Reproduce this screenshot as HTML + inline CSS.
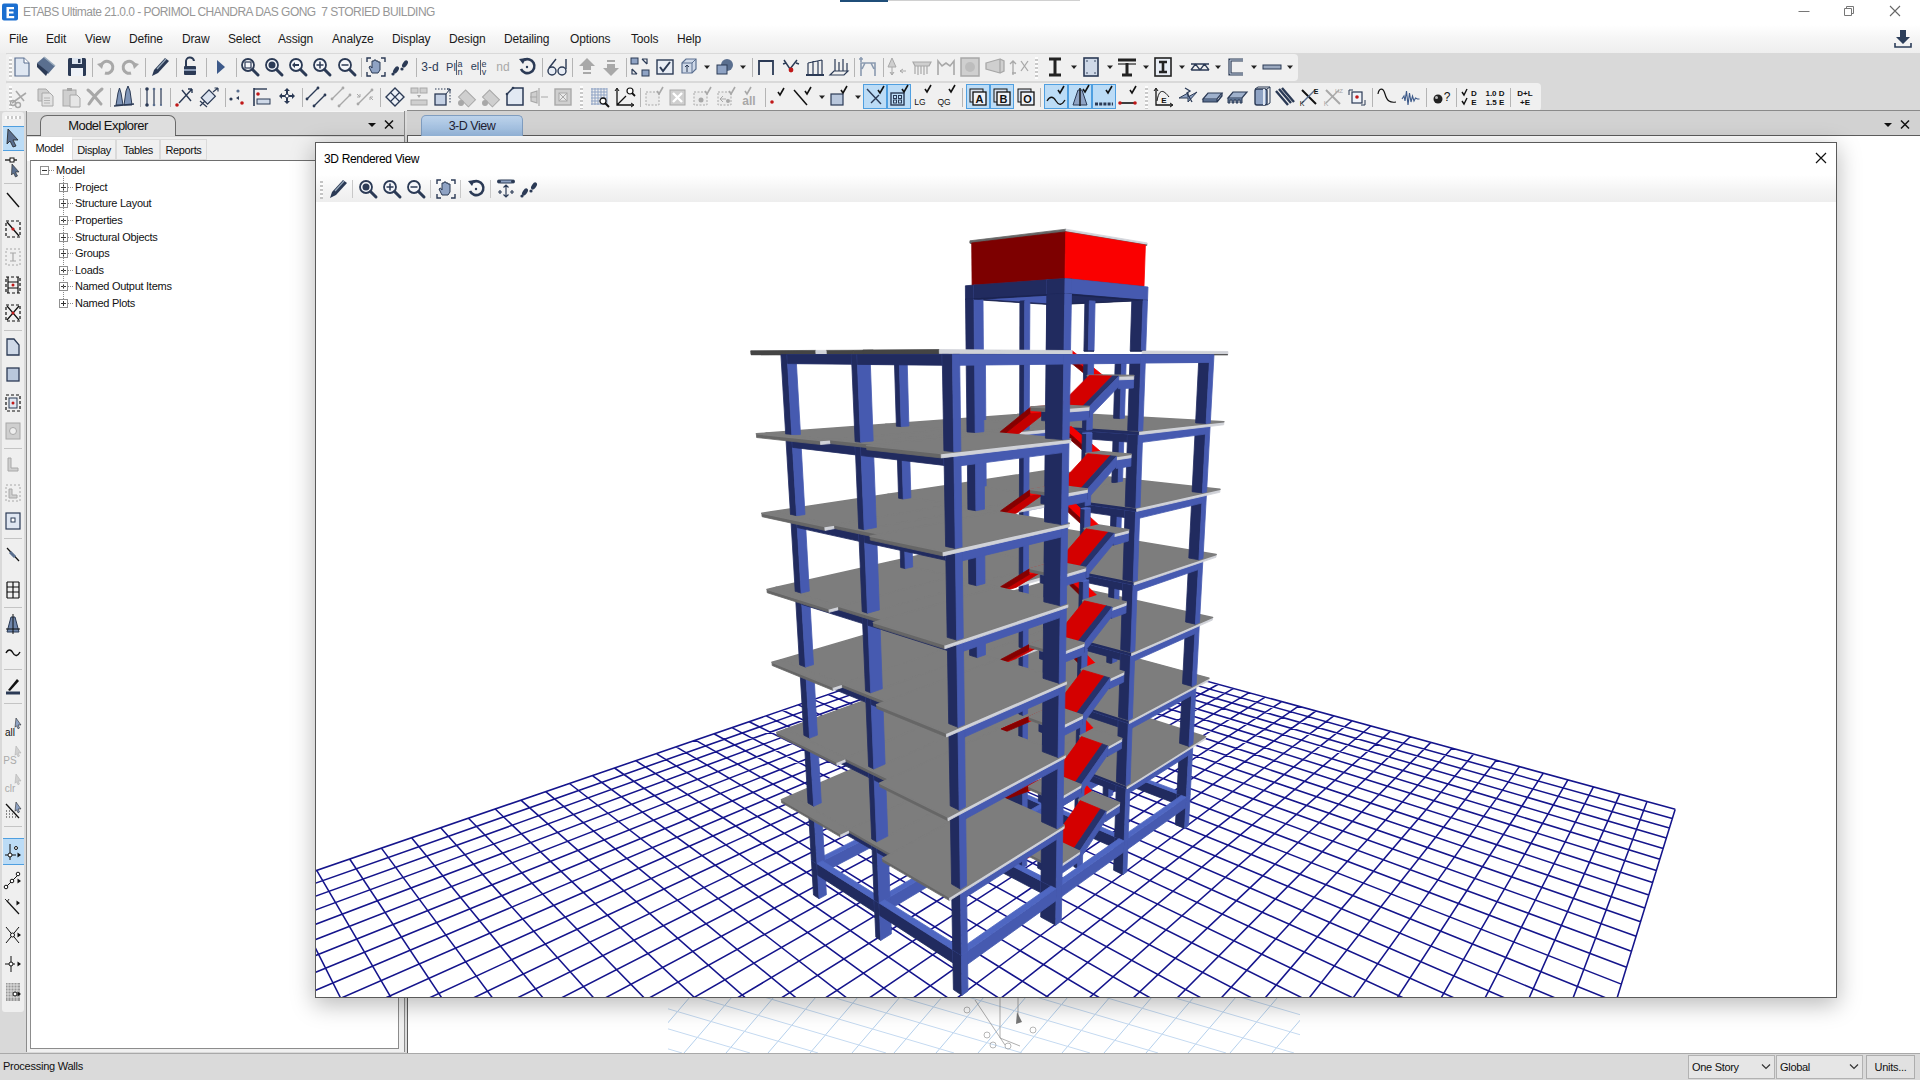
<!DOCTYPE html><html><head><meta charset="utf-8"><title>ETABS</title><style>
*{box-sizing:border-box}
html,body{margin:0;padding:0}
body{width:1920px;height:1080px;overflow:hidden;background:#d9d9d9;font-family:"Liberation Sans",sans-serif;position:relative}
.abs{position:absolute}
#title{left:0;top:0;width:1920px;height:25px;background:#fff}
#title .t{position:absolute;left:23px;top:5px;font-size:12px;color:#979797;white-space:pre;letter-spacing:-0.53px}
#menu{left:0;top:25px;width:1920px;height:28px;background:linear-gradient(#ffffff,#f6f6f6 45%,#eeeeee)}
#menu span{position:absolute;top:7px;font-size:12px;color:#1a1a1a;letter-spacing:-0.15px}
.tb{position:absolute;background:#f0f0f0;border-radius:4px}
.sep{position:absolute;width:1px;background:#b4b4b4}
.sel{position:absolute;background:#bcdcf6;border:1px solid #4f9fe0}
#left{left:2px;top:112px;width:22px;height:900px;background:#efefef;border-radius:3px}
#mehead{left:26px;top:111px;width:379px;height:25px;background:#d4d4d4;border-top:1px solid #f5f5f5}
#metab{left:40px;top:115px;width:136px;height:21px;background:#dedede;border:1px solid #6a6a6a;border-bottom:none;border-radius:7px 7px 0 0;font-size:13px;color:#111;text-align:center;line-height:20px;letter-spacing:-0.57px}
.hline{position:absolute;height:1px;background:#5c5c5c}
#mebody{left:27px;top:137px;width:377px;height:915px;background:#f0f0f0}
#tree{left:30px;top:160px;width:369px;height:889px;background:#fff;border:1px solid #8c8c8c;border-top:1px solid #6e6e6e}
.tab{position:absolute;top:139px;height:21px;font-size:11px;color:#111;text-align:center;line-height:21px;background:#f0f0f0;border:1px solid #dadada;letter-spacing:-0.35px}
.tab.on{background:#fff;top:137px;height:24px;border:1px solid #fff;line-height:21px}
.tr{position:absolute;font-size:11px;color:#111;white-space:pre;letter-spacing:-0.27px}
.pm{position:absolute;width:9px;height:9px;border:1px solid #919191;background:#fff}
.pm:before{content:"";position:absolute;left:1px;top:3px;width:5px;height:1px;background:#333}
.pm.plus:after{content:"";position:absolute;left:3px;top:1px;width:1px;height:5px;background:#333}
#main{left:407px;top:135px;width:1513px;height:918px;background:#fff;border-top:1px solid #5c5c5c;border-left:1px solid #5c5c5c}
#vtab{left:421px;top:115px;width:102px;height:21px;background:linear-gradient(#bcd2ea,#96b7dc);border:1px solid #7f9dc0;border-bottom:none;border-radius:5px 5px 0 0;font-size:12.5px;color:#223;text-align:center;line-height:20px;letter-spacing:-0.47px}
#win{left:315px;top:142px;width:1522px;height:856px;background:#fff;border:1px solid #5a5a5a;box-shadow:0 6px 22px 1px rgba(0,0,0,0.27)}
#wtitle{left:8px;top:9px;font-size:12px;color:#000;letter-spacing:-0.34px}
#wtool{left:0;top:32px;width:1520px;height:27px;background:linear-gradient(#ffffff,#f3f3f3 60%,#eeeeee)}
#status{left:0;top:1053px;width:1920px;height:27px;background:#dadada;border-top:1px solid #a9a9a9}
#status .t{position:absolute;left:3px;top:6px;font-size:11px;color:#111;letter-spacing:-0.25px}
.combo{position:absolute;top:1px;height:24px;background:#e6e6e6;border:1px solid #b2b2b2;font-size:11px;color:#111;line-height:22px;padding-left:3px;letter-spacing:-0.3px}
</style></head><body><div id="title" class="abs"><svg class="abs" style="left:2px;top:3px" width="17" height="18"><rect x="0" y="0.5" width="16" height="17" rx="2" fill="#1c6fd0"/><path d="M4.5 4h7.5v2.2h-5v2.2h4.5v2.2h-4.5v2.4h5.2v2.2h-7.7z" fill="#fff"/></svg><span class="t">ETABS Ultimate 21.0.0 - PORIMOL CHANDRA DAS GONG  7 STORIED BUILDING</span>
<div class="abs" style="left:840px;top:0;width:48px;height:2px;background:#1f4e79"></div><div class="abs" style="left:888px;top:0;width:192px;height:1px;background:#d0d0d0"></div>
<svg class="abs" style="left:1790px;top:0" width="130" height="25"><path d="M8.5 11.5h11" stroke="#777" stroke-width="1"/><path d="M54.500 8.5h7v7h-7zM56.5 8.500v-2h7v7h-2" stroke="#777" fill="none"/><path d="M100 6l10 10M110 6l-10 10" stroke="#666" stroke-width="1.1"/></svg></div>
<div id="menu" class="abs"><span style="left:9px">File</span><span style="left:46px">Edit</span><span style="left:85px">View</span><span style="left:129px">Define</span><span style="left:182px">Draw</span><span style="left:228px">Select</span><span style="left:278px">Assign</span><span style="left:332px">Analyze</span><span style="left:392px">Display</span><span style="left:449px">Design</span><span style="left:504px">Detailing</span><span style="left:570px">Options</span><span style="left:631px">Tools</span><span style="left:677px">Help</span><svg class="abs" style="left:1893px;top:4px" width="22" height="20"><path d="M7 1h6v7h4l-7 7l-7 -7h4z" fill="#2c3e5a"/><path d="M2 14v4h16v-4" stroke="#2c3e5a" stroke-width="1.6" fill="none"/></svg></div>
<div class="tb" style="left:4px;top:54px;width:1294px;height:27px"></div>
<div class="tb" style="left:4px;top:83px;width:1537px;height:28px"></div>
<div class="abs" style="left:0;top:53px;width:6px;height:58px;background:#ececec"></div>
<div class="sep" style="left:92px;top:58px;height:19px"></div>
<div class="sep" style="left:145px;top:58px;height:19px"></div>
<div class="sep" style="left:176px;top:58px;height:19px"></div>
<div class="sep" style="left:206px;top:58px;height:19px"></div>
<div class="sep" style="left:236px;top:58px;height:19px"></div>
<div class="sep" style="left:361px;top:58px;height:19px"></div>
<div class="sep" style="left:416px;top:58px;height:19px"></div>
<div class="sep" style="left:542px;top:58px;height:19px"></div>
<div class="sep" style="left:572px;top:58px;height:19px"></div>
<div class="sep" style="left:626px;top:58px;height:19px"></div>
<div class="sep" style="left:752px;top:58px;height:19px"></div>
<div class="sep" style="left:854px;top:58px;height:19px"></div>
<div class="sep" style="left:883px;top:58px;height:19px"></div>
<div class="sep" style="left:110px;top:88px;height:19px"></div>
<div class="sep" style="left:140px;top:88px;height:19px"></div>
<div class="sep" style="left:170px;top:88px;height:19px"></div>
<div class="sep" style="left:225px;top:88px;height:19px"></div>
<div class="sep" style="left:302px;top:88px;height:19px"></div>
<div class="sep" style="left:380px;top:88px;height:19px"></div>
<div class="sep" style="left:640px;top:88px;height:19px"></div>
<div class="sep" style="left:765px;top:88px;height:19px"></div>
<div class="sep" style="left:962px;top:88px;height:19px"></div>
<div class="sep" style="left:1040px;top:88px;height:19px"></div>
<div class="sep" style="left:1372px;top:88px;height:19px"></div>
<div class="sep" style="left:1426px;top:88px;height:19px"></div>
<div class="sep" style="left:1456px;top:88px;height:19px"></div>
<div class="sep" style="left:1510px;top:88px;height:19px"></div>
<div class="abs" style="left:9px;top:57px;width:3px;height:22px;background:repeating-linear-gradient(#fdfdfd 0 2px,#c9c9c9 2px 4px)"></div>
<div class="abs" style="left:9px;top:86px;width:3px;height:23px;background:repeating-linear-gradient(#fdfdfd 0 2px,#c9c9c9 2px 4px)"></div>
<div class="abs" style="left:1035px;top:57px;width:3px;height:22px;background:repeating-linear-gradient(#fdfdfd 0 2px,#c9c9c9 2px 4px)"></div>
<div class="abs" style="left:580px;top:86px;width:3px;height:23px;background:repeating-linear-gradient(#fdfdfd 0 2px,#c9c9c9 2px 4px)"></div>
<div class="abs" style="left:1145px;top:86px;width:3px;height:23px;background:repeating-linear-gradient(#fdfdfd 0 2px,#c9c9c9 2px 4px)"></div>
<div class="sel" style="left:863px;top:84px;width:24px;height:25px"></div>
<div class="sel" style="left:887px;top:84px;width:24px;height:25px"></div>
<div class="sel" style="left:966px;top:84px;width:24px;height:25px"></div>
<div class="sel" style="left:990px;top:84px;width:24px;height:25px"></div>
<div class="sel" style="left:1044px;top:84px;width:24px;height:25px"></div>
<div class="sel" style="left:1068px;top:84px;width:24px;height:25px"></div>
<div class="sel" style="left:1092px;top:84px;width:24px;height:25px"></div>
<svg class="abs" style="left:0;top:53px" width="1920" height="60"><g transform="translate(22,14)"><path d="M-7 -9h9l5 5v13h-14z" fill="#dfe7f2" stroke="#5a6f8f" stroke-width="1.2"/><path d="M2 -9v5h5" fill="#fff" stroke="#5a6f8f" stroke-width="1"/></g><g transform="translate(46,14)"><path d="M-9 -4l7 -6l11 9l-7 8z" fill="#5a6f8f"/><path d="M-9 -4l11 9l-2 4l-9 -9z" fill="#2b3a55"/><path d="M-2 -10l11 9" stroke="#9ab" stroke-width="1.5"/></g><g transform="translate(77,14)"><rect x="-9" y="-9" width="18" height="18" rx="1.5" fill="#2b3a55"/><rect x="-5" y="-9" width="10" height="6" fill="#dde5f0"/><rect x="-6" y="1" width="12" height="8" fill="#eef2f8"/><rect x="1" y="-8" width="2.5" height="4" fill="#2b3a55"/></g><g transform="translate(106,14)"><path d="M-5 -1a6 6 0 1 1 4 7" stroke="#a8a8a8" stroke-width="3" fill="none"/><path d="M-9 -3l7 -2l-2 7z" fill="#a8a8a8"/></g><g transform="translate(130,14)"><path d="M5 -1a6 6 0 1 0 -4 7" stroke="#a8a8a8" stroke-width="3" fill="none"/><path d="M9 -3l-7 -2l2 7z" fill="#a8a8a8"/></g><g transform="translate(160,14)"><path d="M-8 9l2 -6l11 -12l4 3l-11 12z" fill="#2b3a55"/><path d="M-3 2l9 -10" stroke="#9ab" stroke-width="1.2"/></g><g transform="translate(190,14)"><rect x="-6" y="-1" width="12" height="9" rx="1" fill="#2b3a55"/><path d="M-4 -1v-4a4 4 0 0 1 8 -1" stroke="#2b3a55" stroke-width="2" fill="none"/><rect x="-6" y="2" width="12" height="2" fill="#8a9ab5"/></g><g transform="translate(221,14)"><path d="M-4 -7l8 7l-8 7z" fill="#3d5a8a"/></g><g transform="translate(250,14)"><circle cx="-2" cy="-2" r="6" fill="#f4f6fa" stroke="#2b3a55" stroke-width="1.8"/><path d="M2.5 2.5L8 8" stroke="#2b3a55" stroke-width="3" stroke-linecap="round"/><rect x="-5" y="-5" width="6" height="6" fill="none" stroke="#2b3a55" stroke-width="1.2"/></g><g transform="translate(274,14)"><circle cx="-2" cy="-2" r="6" fill="#f4f6fa" stroke="#2b3a55" stroke-width="1.8"/><path d="M2.5 2.5L8 8" stroke="#2b3a55" stroke-width="3" stroke-linecap="round"/><circle cx="-2" cy="-2" r="3.5" fill="#2b3a55"/></g><g transform="translate(298,14)"><circle cx="-2" cy="-2" r="6" fill="#f4f6fa" stroke="#2b3a55" stroke-width="1.8"/><path d="M2.5 2.5L8 8" stroke="#2b3a55" stroke-width="3" stroke-linecap="round"/><path d="M-6 -2l3 -3v2h4v2h-4v2z" fill="#2b3a55"/></g><g transform="translate(322,14)"><circle cx="-2" cy="-2" r="6" fill="#f4f6fa" stroke="#2b3a55" stroke-width="1.8"/><path d="M2.5 2.5L8 8" stroke="#2b3a55" stroke-width="3" stroke-linecap="round"/><path d="M-5.5 -2h7M-2 -5.5v7" stroke="#2b3a55" stroke-width="1.5"/></g><g transform="translate(347,14)"><circle cx="-2" cy="-2" r="6" fill="#f4f6fa" stroke="#2b3a55" stroke-width="1.8"/><path d="M2.5 2.5L8 8" stroke="#2b3a55" stroke-width="3" stroke-linecap="round"/><path d="M-5.5 -2h7" stroke="#2b3a55" stroke-width="1.5"/></g><g transform="translate(376,14)"><path d="M-9 -5v-4h4M5 -9h4v4M9 5v4h-4M-5 9h-4v-4" stroke="#2b3a55" stroke-width="1.4" fill="none"/><path d="M-4 6l-3 -6l1.5 -1l1.5 2v-7h2v-1h2v1h2v1h2v8l-2 3z" fill="#8fa3c4" stroke="#2b3a55" stroke-width="1"/></g><g transform="translate(401,14)"><ellipse cx="-5" cy="3" rx="2.2" ry="4" transform="rotate(35 -5 3)" fill="#2b3a55"/><ellipse cx="4" cy="-3" rx="2.2" ry="4" transform="rotate(35 4 -3)" fill="#2b3a55"/><circle cx="-8" cy="7" r="1.6" fill="#2b3a55"/><circle cx="1" cy="2" r="1.6" fill="#2b3a55"/></g><g transform="translate(430,14)"><text x="0" y="4" font-size="12" fill="#2b3a55" font-weight="normal" text-anchor="middle" font-family="Liberation Sans, sans-serif">3-d</text></g><g transform="translate(455,14)"><text x="-4" y="4" font-size="11" fill="#2b3a55" font-weight="normal" text-anchor="middle" font-family="Liberation Sans, sans-serif">Pl</text><text x="5" y="0" font-size="9" fill="#2b3a55" font-weight="normal" text-anchor="middle" font-family="Liberation Sans, sans-serif">a</text><text x="5" y="8" font-size="9" fill="#2b3a55" font-weight="normal" text-anchor="middle" font-family="Liberation Sans, sans-serif">n</text><path d="M1.5 -7v15" stroke="#2b3a55" stroke-width="0.8"/></g><g transform="translate(479,14)"><text x="-4" y="3" font-size="11" fill="#2b3a55" font-weight="normal" text-anchor="middle" font-family="Liberation Sans, sans-serif">el</text><text x="5" y="0" font-size="9" fill="#2b3a55" font-weight="normal" text-anchor="middle" font-family="Liberation Sans, sans-serif">e</text><text x="5" y="8" font-size="9" fill="#2b3a55" font-weight="normal" text-anchor="middle" font-family="Liberation Sans, sans-serif">v</text><path d="M1.5 -7v15" stroke="#2b3a55" stroke-width="0.8"/></g><g transform="translate(503,14)"><text x="0" y="4" font-size="12" fill="#a8a8a8" font-weight="normal" text-anchor="middle" font-family="Liberation Sans, sans-serif">nd</text></g><g transform="translate(527,14)"><path d="M-3 -7a7 7 0 1 1 -3 9" stroke="#2b3a55" stroke-width="2.6" fill="none"/><path d="M-8 -8l7 -1l-3 6z" fill="#2b3a55"/><circle cx="0" cy="0" r="1.2" fill="#2b3a55"/></g><g transform="translate(557,14)"><circle cx="-5" cy="4" r="4" fill="#e8edf5" stroke="#2b3a55" stroke-width="1.4"/><circle cx="5" cy="4" r="4" fill="#e8edf5" stroke="#2b3a55" stroke-width="1.4"/><path d="M-8 1l7 -9M9 2v-10" stroke="#2b3a55" stroke-width="1.4" fill="none"/></g><g transform="translate(587,14)"><path d="M0 -9l8 8h-4v4h-8v-4h-4z" fill="#a8a8a8"/><rect x="-4" y="5" width="8" height="2" fill="#a8a8a8"/></g><g transform="translate(611,14)"><path d="M0 9l8 -8h-4v-4h-8v4h-4z" fill="#a8a8a8"/><rect x="-4" y="-7" width="8" height="2" fill="#a8a8a8"/></g><g transform="translate(640,14)"><rect x="-9" y="-9" width="7" height="6" fill="#8fa3c4" stroke="#2b3a55"/><rect x="2" y="3" width="7" height="6" fill="#8fa3c4" stroke="#2b3a55"/><path d="M2 -8l5 5M7 -3v-5h-5M-8 2l5 5M-3 7h-5v-5" stroke="#2b3a55" stroke-width="1.2" fill="none"/></g><g transform="translate(665,14)"><rect x="-8" y="-7" width="16" height="14" fill="#e8edf5" stroke="#2b3a55" stroke-width="1.4"/><path d="M-5 0l3 4l7 -9" stroke="#2b3a55" stroke-width="2" fill="none"/></g><g transform="translate(689,14)"><path d="M-7 -4l4 -4h10v10l-4 4h-10z" fill="#cfd9e8" stroke="#5a6f8f" stroke-width="1.2"/><path d="M-7 -4h10v10M3 -4l4 -4" stroke="#5a6f8f" fill="none"/><path d="M-2 5v-6M-4 0l2 -2l2 2" stroke="#2b3a55" fill="none"/></g><g transform="translate(707,14)"><path d="M-3 -1.5h6l-3 3.5z" fill="#222"/></g><g transform="translate(725,14)"><circle cx="2" cy="-2" r="6" fill="#5a6f8f"/><rect x="-8" y="-2" width="10" height="9" fill="#8fa3c4" stroke="#2b3a55"/></g><g transform="translate(743,14)"><path d="M-3 -1.5h6l-3 3.5z" fill="#222"/></g><g transform="translate(766,14)"><path d="M-7 8v-14h14v14" stroke="#2b3a55" stroke-width="1.8" fill="none"/></g><g transform="translate(791,14)"><path d="M-7 -7l6 9l7 -9M-8 -3l3 -1M8 -3l-3 -1" stroke="#2b3a55" stroke-width="1.5" fill="none"/><circle cx="0" cy="3" r="2.4" fill="#c01818"/></g><g transform="translate(815,14)"><path d="M-9 8h18M-7 8v-12M-2 8v-14M3 8v-14M7 8v-15M-7 -4l14 -3" stroke="#2b3a55" stroke-width="1.2" fill="none"/><path d="M-9 8h18" stroke="#2b3a55" stroke-width="2"/></g><g transform="translate(839,14)"><path d="M-9 8l4 -4h14l-4 4zM-4 4v-12M0 4v-9M4 4v-12M8 4v-8" stroke="#2b3a55" stroke-width="1.2" fill="none"/></g><g transform="translate(868,14)"><path d="M-7 9v-13h14v13M-9 -8h4M-7 -10v5M-3 -4l-3 6M3 -4l3 6" stroke="#8a9ab0" stroke-width="1.6" fill="none"/></g><g transform="translate(897,14)"><path d="M-5 -9l4 9h-8zM-5 0v8M-7 5l2 3l2 -3M3 4h6M3 4l3 -2M3 4l3 2" stroke="#a8a8a8" fill="#cfcfcf" stroke-width="1"/></g><g transform="translate(922,14)"><path d="M-9 -5h18l-2 4h-14zM-7 -1v8M-4 -1v9M-1 -1v8M2 -1v9M5 -1v8" stroke="#a8a8a8" fill="#cfcfcf" stroke-width="1.2"/></g><g transform="translate(946,14)"><path d="M-8 8v-14l4 5l4 -3l4 3l4 -5v14" stroke="#a8a8a8" fill="none" stroke-width="1.6"/></g><g transform="translate(970,14)"><rect x="-9" y="-9" width="18" height="18" fill="#cfcfcf" stroke="#a8a8a8" stroke-width="1.5"/><circle cx="0" cy="0" r="5" fill="#bdbdbd"/></g><g transform="translate(995,14)"><path d="M-9 -4l14 -4v14l-14 -4zM5 -8l4 2v10l-4 2" stroke="#a8a8a8" fill="#cfcfcf" stroke-width="1.3"/></g><g transform="translate(1019,14)"><path d="M-6 8v-14M-9 -3l3 -3l3 3M-7 6h4M2 -6l7 10M9 -6l-7 10" stroke="#a8a8a8" fill="none" stroke-width="1.3"/></g><g transform="translate(1055,14)"><path d="M-6 -8h12M-6 8h12M0 -8v16" stroke="#222" stroke-width="3" fill="none"/></g><g transform="translate(1074,14)"><path d="M-3 -1.5h6l-3 3.5z" fill="#222"/></g><g transform="translate(1091,14)"><rect x="-7" y="-9" width="14" height="18" fill="#cfd9e8" stroke="#2b3a55" stroke-width="1.6"/><circle cx="-4" cy="-6" r="0.8" fill="#2b3a55"/><circle cx="4" cy="-6" r="0.8" fill="#2b3a55"/><circle cx="-4" cy="6" r="0.8" fill="#2b3a55"/><circle cx="4" cy="6" r="0.8" fill="#2b3a55"/></g><g transform="translate(1110,14)"><path d="M-3 -1.5h6l-3 3.5z" fill="#222"/></g><g transform="translate(1127,14)"><path d="M-9 -7h18M0 -4v11M-5 8h10" stroke="#222" stroke-width="3" fill="none"/><path d="M-9 -3h18" stroke="#222" stroke-width="1.2"/></g><g transform="translate(1146,14)"><path d="M-3 -1.5h6l-3 3.5z" fill="#222"/></g><g transform="translate(1163,14)"><rect x="-8" y="-9" width="16" height="18" fill="#e8edf5" stroke="#222" stroke-width="1.6"/><path d="M-4 -5h8M-4 5h8M0 -5v10" stroke="#222" stroke-width="2.6" fill="none"/></g><g transform="translate(1182,14)"><path d="M-3 -1.5h6l-3 3.5z" fill="#222"/></g><g transform="translate(1200,14)"><path d="M-9 -3h18M-9 3h18M-9 3l4.5 -6l4.5 6l4.5 -6l4.5 6" stroke="#2b3a55" stroke-width="1.3" fill="none"/></g><g transform="translate(1218,14)"><path d="M-3 -1.5h6l-3 3.5z" fill="#222"/></g><g transform="translate(1236,14)"><path d="M7 -7h-13v14h13" stroke="#2b3a55" stroke-width="3.2" fill="none"/><path d="M7 -7h-13v14h13" stroke="#cfd9e8" stroke-width="1" fill="none"/></g><g transform="translate(1254,14)"><path d="M-3 -1.5h6l-3 3.5z" fill="#222"/></g><g transform="translate(1272,14)"><rect x="-9" y="-2" width="18" height="4" fill="#9aa8be" stroke="#2b3a55"/></g><g transform="translate(1290,14)"><path d="M-3 -1.5h6l-3 3.5z" fill="#222"/></g><g transform="translate(20,44)"><path d="M-8 6l14 -10M-4 -6l8 10" stroke="#a8a8a8" stroke-width="1.6" fill="none"/><circle cx="-7" cy="6" r="2.5" fill="none" stroke="#a8a8a8" stroke-width="1.4"/><circle cx="-2" cy="8" r="2.5" fill="none" stroke="#a8a8a8" stroke-width="1.4"/></g><g transform="translate(46,44)"><path d="M-8 -8h8l3 3v9h-11z" fill="#cfcfcf" stroke="#a8a8a8"/><path d="M-4 -4h8l3 3v10h-11z" fill="#e2e2e2" stroke="#a8a8a8"/><path d="M-2 1h6M-2 3.5h6M-2 6h6" stroke="#a8a8a8" stroke-width="0.8"/></g><g transform="translate(71,44)"><rect x="-8" y="-7" width="13" height="16" fill="#cfcfcf" stroke="#a8a8a8"/><rect x="-4" y="-9" width="5" height="3" fill="#a8a8a8"/><path d="M-1 -2h7l3 3v9h-10z" fill="#e6e6e6" stroke="#a8a8a8"/></g><g transform="translate(95,44)"><path d="M-7 -7c4 3 8 8 13 14M7 -8c-5 4 -9 9 -13 15" stroke="#a8a8a8" stroke-width="3" fill="none" stroke-linecap="round"/></g><g transform="translate(124,44)"><path d="M-8 8l2 -12l1.5 -5l1.5 5l2 12zM0 8l2 -14l2 -5l2 5l2 14z" fill="#7f95b8" stroke="#2b3a55" stroke-width="1"/><path d="M-10 9l20 -2" stroke="#2b3a55" stroke-width="1.5"/></g><g transform="translate(154,44)"><path d="M-7 -8v16M0 -8v16M7 -8v16" stroke="#2b3a55" stroke-width="1.2"/><circle cx="-7" cy="-8" r="1.8" fill="#2b3a55"/><circle cx="-7" cy="8" r="1.8" fill="#2b3a55"/><circle cx="0" cy="-8" r="1.3" fill="#5a6f8f"/><circle cx="0" cy="8" r="1.3" fill="#5a6f8f"/><circle cx="7" cy="-8" r="1.1" fill="#5a6f8f"/><circle cx="7" cy="8" r="1.1" fill="#5a6f8f"/></g><g transform="translate(185,44)"><path d="M-6 6l13 -14M7 -8h-4M7 -8v4M-3 -7l9 11" stroke="#2b3a55" stroke-width="1.4" fill="none"/><circle cx="-8" cy="8" r="1.8" fill="#c01818"/></g><g transform="translate(209,44)"><rect x="-5" y="-5" width="9" height="11" transform="rotate(45)" fill="#dbe3ef" stroke="#2b3a55" stroke-width="1.2"/><path d="M4 -5l5 -4M9 -9h-3.5M9 -9v3.5M-9 4l7 6M-9 9l5 -5" stroke="#2b3a55" stroke-width="1.2" fill="none"/></g><g transform="translate(238,44)"><circle cx="-7" cy="2" r="1.6" fill="#2b3a55"/><circle cx="0" cy="-6" r="1.6" fill="#5a6f8f"/><circle cx="4" cy="6" r="1.8" fill="#c01818"/><path d="M-2 1l3 -2v4z" fill="#2b3a55"/></g><g transform="translate(262,44)"><path d="M-8 -9v18" stroke="#2b3a55" stroke-width="1.6"/><path d="M-8 -8h13" stroke="#2b3a55" stroke-width="1.4"/><rect x="-5" y="2" width="13" height="5" fill="#cfd9e8" stroke="#2b3a55"/><circle cx="-4" cy="-3" r="1.8" fill="#c01818"/></g><g transform="translate(287,44)"><path d="M0 -9l3 3h-2v4h4v-2l3 3l-3 3v-2h-4v4h2l-3 3l-3 -3h2v-4h-4v2l-3 -3l3 -3v2h4v-4h-2z" fill="#2b3a55"/><rect x="-1.5" y="-2.5" width="3" height="3" fill="#fff" stroke="#2b3a55" stroke-width="0.6"/></g><g transform="translate(316,44)"><path d="M-9 2l11 -11M-2 9l11 -11" stroke="#2b3a55" stroke-width="1.4"/><circle cx="-9" cy="2" r="1.4" fill="#2b3a55"/><circle cx="2" cy="-9" r="1.4" fill="#2b3a55"/><circle cx="-2" cy="9" r="1.4" fill="#2b3a55"/><circle cx="9" cy="-2" r="1.4" fill="#2b3a55"/></g><g transform="translate(341,44)"><path d="M-9 2l11 -11M-2 9l11 -11" stroke="#a8a8a8" stroke-width="1.4"/><circle cx="-9" cy="2" r="1.4" fill="#a8a8a8"/><circle cx="2" cy="-9" r="1.4" fill="#a8a8a8"/><circle cx="-2" cy="9" r="1.4" fill="#a8a8a8"/><circle cx="9" cy="-2" r="1.4" fill="#a8a8a8"/></g><g transform="translate(365,44)"><path d="M-7 7l14 -14" stroke="#a8a8a8" stroke-width="1.4"/><circle cx="-7" cy="7" r="1.4" fill="#a8a8a8"/><circle cx="7" cy="-7" r="1.4" fill="#a8a8a8"/><path d="M-8 -3l3 3M-5 0v-3M-5 0h-3M8 3l-3 -3M5 0v3M5 0h3" stroke="#a8a8a8" fill="none"/></g><g transform="translate(395,44)"><path d="M0 -9l9 9l-9 9l-9 -9z" fill="#eef2f8" stroke="#2b3a55" stroke-width="1.4"/><path d="M-4.5 -4.5l9 9M4.5 -4.5l-9 9" stroke="#2b3a55" stroke-width="1.2"/></g><g transform="translate(419,44)"><rect x="-8" y="-9" width="7" height="5" fill="#cfcfcf" stroke="#a8a8a8"/><rect x="1" y="-9" width="7" height="5" fill="#cfcfcf" stroke="#a8a8a8"/><rect x="-8" y="3" width="16" height="5" fill="#cfcfcf" stroke="#a8a8a8"/><path d="M-2 -2h4l-2 3z" fill="#a8a8a8"/></g><g transform="translate(443,44)"><rect x="-8" y="-3" width="11" height="11" fill="#c5d1e4" stroke="#2b3a55" stroke-width="1.3"/><path d="M-8 -8h15v15" stroke="#2b3a55" stroke-dasharray="1.5 1.5" fill="none"/><path d="M3 -3l4 -5M7 -8h-3M7 -8v3" stroke="#2b3a55" fill="none"/></g><g transform="translate(467,44)"><rect x="-6" y="-6" width="10" height="14" transform="rotate(-45)" fill="#cfcfcf" stroke="#a8a8a8"/><circle cx="-6" cy="6" r="3" fill="#a8a8a8"/></g><g transform="translate(491,44)"><rect x="-6" y="-6" width="10" height="14" transform="rotate(-45)" fill="#cfcfcf" stroke="#a8a8a8"/><circle cx="-6" cy="6" r="3" fill="#a8a8a8"/></g><g transform="translate(515,44)"><path d="M-8 8v-11l6 -6h10v17z" fill="#e2e9f3" stroke="#2b3a55" stroke-width="1.5"/><circle cx="-8" cy="-3" r="1.3" fill="#2b3a55"/><circle cx="-2" cy="-9" r="1.3" fill="#2b3a55"/></g><g transform="translate(539,44)"><path d="M0 -9v18M-2 -6l-6 2v8l6 2zM2 0h7M-9 0h7" stroke="#a8a8a8" fill="#cfcfcf" stroke-width="1.2"/></g><g transform="translate(563,44)"><rect x="-8" y="-8" width="16" height="16" fill="#cfcfcf" stroke="#a8a8a8" stroke-width="1.4"/><rect x="-4" y="-4" width="8" height="8" fill="#e8e8e8" stroke="#a8a8a8"/><path d="M-4 -4l8 8M4 -4l-8 8" stroke="#a8a8a8"/></g><g transform="translate(600,44)"><path d="M-9 -8h16M-9 -5h16M-9 -2h16M-9 1h16M-9 4h16M-9 7h16M-8 -9v17M-5 -9v17M-2 -9v17M1 -9v17M4 -9v17M7 -9v17" stroke="#8fa3c4" stroke-width="1"/><circle cx="3" cy="4" r="3" fill="#fff" stroke="#111" stroke-width="1.3"/><path d="M5 6l4 4" stroke="#111" stroke-width="2"/></g><g transform="translate(625,44)"><path d="M-8 -8v16h16M-8 8l9 -9" stroke="#111" stroke-width="1.3" fill="none"/><path d="M-10 -6l2 -3l2 3M6 6l3 2l-3 2" stroke="#111" fill="none"/><circle cx="5" cy="-6" r="3" fill="#fff" stroke="#111" stroke-width="1.2"/><path d="M7 -4l3 3" stroke="#111" stroke-width="1.8"/></g><g transform="translate(654,44)"><rect x="-8" y="-5" width="13" height="13" fill="#ececec" stroke="#a8a8a8" stroke-dasharray="2 1.5"/><path d="M3 -6l2 3l4 -7" stroke="#a8a8a8" stroke-width="1.6" fill="none"/></g><g transform="translate(678,44)"><rect x="-8" y="-7" width="15" height="15" fill="#cfcfcf" stroke="#a8a8a8"/><path d="M-5 -4l9 9M4 -4l-9 9" stroke="#fff" stroke-width="2.4"/></g><g transform="translate(702,44)"><rect x="-8" y="-5" width="13" height="13" fill="#ececec" stroke="#a8a8a8" stroke-dasharray="2 1.5"/><circle cx="-1" cy="3" r="2.5" fill="#a8a8a8"/><path d="M3 -6l2 3l4 -7" stroke="#a8a8a8" stroke-width="1.6" fill="none"/></g><g transform="translate(726,44)"><rect x="-8" y="-5" width="13" height="13" fill="#ececec" stroke="#a8a8a8" stroke-dasharray="2 1.5"/><path d="M-6 2h6M-3 -1l-3 3l3 3" stroke="#a8a8a8" fill="none"/><circle cx="2" cy="4" r="2" fill="#a8a8a8"/><path d="M3 -6l2 3l4 -7" stroke="#a8a8a8" stroke-width="1.6" fill="none"/></g><g transform="translate(749,44)"><text x="0" y="8" font-size="12" fill="#a8a8a8" font-weight="bold" text-anchor="middle" font-family="Liberation Sans, sans-serif">all</text><path d="M-4 -6l2 3l4 -7" stroke="#a8a8a8" stroke-width="1.6" fill="none"/></g><g transform="translate(778,44)"><circle cx="-6" cy="5" r="1.8" fill="#c01818"/><path d="M0 -5l2 3l4 -7" stroke="#111" stroke-width="1.6" fill="none"/></g><g transform="translate(803,44)"><path d="M-9 -7l13 15" stroke="#111" stroke-width="1.5"/><path d="M2 -6l2 3l4 -7" stroke="#111" stroke-width="1.6" fill="none"/></g><g transform="translate(822,44)"><path d="M-3 -1.5h6l-3 3.5z" fill="#222"/></g><g transform="translate(839,44)"><rect x="-8" y="-3" width="12" height="11" fill="#b9c7dc" stroke="#2b3a55" stroke-width="1.2"/><path d="M2 -7l2 3l4 -7" stroke="#111" stroke-width="1.6" fill="none"/></g><g transform="translate(858,44)"><path d="M-3 -1.5h6l-3 3.5z" fill="#222"/></g><g transform="translate(875,44)"><path d="M-8 -8l14 15M-4 6l8 -8" stroke="#2b3a55" stroke-width="1.4"/><path d="M3 -7l2 3l4 -7" stroke="#111" stroke-width="1.6" fill="none"/></g><g transform="translate(899,44)"><rect x="-8" y="-4" width="13" height="12" fill="none" stroke="#2b3a55" stroke-width="1.4"/><rect x="-5.5" y="-1.5" width="3" height="3" fill="none" stroke="#2b3a55"/><rect x="-0.5" y="-1.5" width="3" height="3" fill="none" stroke="#2b3a55"/><rect x="-5.5" y="3" width="3" height="3" fill="none" stroke="#2b3a55"/><rect x="-0.5" y="3" width="3" height="3" fill="none" stroke="#2b3a55"/><path d="M3 -8l2 3l4 -7" stroke="#111" stroke-width="1.6" fill="none"/></g><g transform="translate(922,44)"><text x="-2" y="8" font-size="8.5" fill="#111" font-weight="normal" text-anchor="middle" font-family="Liberation Sans, sans-serif">LG</text><path d="M3 -8l2 3l4 -7" stroke="#111" stroke-width="1.6" fill="none"/></g><g transform="translate(946,44)"><text x="-2" y="8" font-size="8.5" fill="#111" font-weight="normal" text-anchor="middle" font-family="Liberation Sans, sans-serif">QG</text><path d="M3 -8l2 3l4 -7" stroke="#111" stroke-width="1.6" fill="none"/></g><g transform="translate(978,44)"><rect x="-8" y="-8" width="13" height="13" fill="#d9e2ef" stroke="#111"/><rect x="-5" y="-5" width="13" height="13" fill="#eef2f8" stroke="#111" stroke-width="1.3"/><text x="1.5" y="6" font-size="11" fill="#111" font-weight="bold" text-anchor="middle" font-family="Liberation Sans, sans-serif">A</text></g><g transform="translate(1002,44)"><rect x="-8" y="-8" width="13" height="13" fill="#d9e2ef" stroke="#111"/><rect x="-5" y="-5" width="13" height="13" fill="#eef2f8" stroke="#111" stroke-width="1.3"/><text x="1.5" y="6" font-size="11" fill="#111" font-weight="bold" text-anchor="middle" font-family="Liberation Sans, sans-serif">B</text></g><g transform="translate(1026,44)"><rect x="-8" y="-8" width="13" height="13" fill="#d9e2ef" stroke="#111"/><rect x="-5" y="-5" width="13" height="13" fill="#eef2f8" stroke="#111" stroke-width="1.3"/><text x="1.5" y="6" font-size="11" fill="#111" font-weight="bold" text-anchor="middle" font-family="Liberation Sans, sans-serif">O</text></g><g transform="translate(1056,44)"><path d="M-9 4c3 -5 6 -5 9 0s6 4 9 -1" stroke="#111" stroke-width="1.3" fill="none"/><path d="M2 -7l2 3l4 -7" stroke="#111" stroke-width="1.6" fill="none"/></g><g transform="translate(1080,44)"><path d="M-7 8l5 -15h4l5 15z" fill="#8fa3c4" stroke="#2b3a55"/><path d="M0 -9v18" stroke="#111" stroke-width="1.4"/><path d="M3 -8l2 3l4 -7" stroke="#111" stroke-width="1.6" fill="none"/></g><g transform="translate(1104,44)"><path d="M-9 7h18" stroke="#2b3a55" stroke-width="3" stroke-dasharray="3 1.2"/><path d="M2 -7l2 3l4 -7" stroke="#111" stroke-width="1.6" fill="none"/></g><g transform="translate(1128,44)"><path d="M-8 6h15" stroke="#111" stroke-width="1.6"/><circle cx="-8" cy="6" r="1.8" fill="#c01818"/><circle cx="7" cy="6" r="1.8" fill="#c01818"/><path d="M2 -7l2 3l4 -7" stroke="#111" stroke-width="1.6" fill="none"/></g><g transform="translate(1164,44)"><path d="M-8 -8v16h16" stroke="#111" stroke-width="1.3" fill="none"/><path d="M-10 -6l2 -3l2 3M6 6l3 2l-3 2" stroke="#111" fill="none"/><path d="M-7 4c2 -12 6 -12 12 -4" stroke="#111" fill="none"/><text x="0" y="6" font-size="8" fill="#111" font-weight="bold" text-anchor="middle" font-family="Liberation Sans, sans-serif">E</text></g><g transform="translate(1188,44)"><path d="M-9 1l9 -5v4l9 -5l-9 10v-4z" fill="#8fa3c4" stroke="#2b3a55"/><path d="M-3 -9l5 3l-3 2l5 9" stroke="#2b3a55" stroke-width="1.3" fill="none"/></g><g transform="translate(1212,44)"><path d="M-9 2l5 -6h14l-5 6z" fill="#9fb1cc" stroke="#2b3a55" stroke-width="1.2"/><path d="M-9 2v3h14v-3M5 5l5 -6v-3" stroke="#2b3a55" stroke-width="1.2" fill="#5a6f8f"/></g><g transform="translate(1237,44)"><path d="M-9 1l5 -6h14l-5 6z" fill="#9fb1cc" stroke="#2b3a55" stroke-width="1.2"/><path d="M-9 1v5h2v-3h2v3h2v-3h2v3h2v-3h2v3h2v-5" fill="#5a6f8f" stroke="#2b3a55"/></g><g transform="translate(1261,44)"><rect x="-6" y="-8" width="12" height="16" rx="2" fill="#8fa3c4" stroke="#2b3a55" stroke-width="1.4"/><path d="M3 -8v16" stroke="#dfe7f2" stroke-width="2"/><path d="M-6 -8l3 -2h12l-3 2M6 8l3 -2v-16" stroke="#2b3a55" fill="none"/></g><g transform="translate(1285,44)"><path d="M-9 -6l12 14M-6 -8l12 14M-3 -9l12 14" stroke="#2b3a55" stroke-width="2.4"/></g><g transform="translate(1309,44)"><path d="M-7 -7l14 14" stroke="#111" stroke-width="2"/><path d="M6 -7l-13 13" stroke="#5a6f8f" stroke-width="1.4"/><text x="7" y="-3" font-size="7" fill="#111" font-weight="bold" text-anchor="middle" font-family="Liberation Sans, sans-serif">E</text><text x="-7" y="9" font-size="7" fill="#111" font-weight="normal" text-anchor="middle" font-family="Liberation Sans, sans-serif">K</text></g><g transform="translate(1333,44)"><path d="M-7 -7l14 14" stroke="#a8a8a8" stroke-width="2"/><path d="M6 -7l-13 13" stroke="#a8a8a8" stroke-width="1.4"/><text x="6" y="-4" font-size="6" fill="#a8a8a8" font-weight="normal" text-anchor="middle" font-family="Liberation Sans, sans-serif">HZ</text><text x="-7" y="9" font-size="7" fill="#a8a8a8" font-weight="normal" text-anchor="middle" font-family="Liberation Sans, sans-serif">K</text></g><g transform="translate(1357,44)"><rect x="-5" y="-5" width="10" height="11" fill="#eef2f8" stroke="#2b3a55" stroke-width="1.2"/><circle cx="0" cy="0" r="1.8" fill="#c01818"/><path d="M-8 -2v-5h4M8 3v5h-4" stroke="#2b3a55" fill="none"/></g><g transform="translate(1387,44)"><path d="M-9 -3c1 -6 5 -7 7 0s5 9 11 8" stroke="#111" stroke-width="1.2" fill="none"/></g><g transform="translate(1411,44)"><path d="M-9 2l2 -3l1 5l1.5 -10l1.5 14l1.5 -12l1.5 9l1.5 -6l1.5 5l1.5 -3l2 1h2" stroke="#3d5a8a" stroke-width="1.1" fill="none"/></g><g transform="translate(1441,44)"><circle cx="-3" cy="2" r="4.5" fill="#222"/><circle cx="-4.5" cy="0.5" r="1.5" fill="#bbb"/><text x="6" y="4" font-size="12" fill="#111" font-weight="normal" text-anchor="middle" font-family="Liberation Sans, sans-serif">?</text></g><g transform="translate(1470,44)"><text x="4" y="-1" font-size="8" fill="#111" font-weight="bold" text-anchor="middle" font-family="Liberation Sans, sans-serif">D</text><text x="4" y="8" font-size="8" fill="#111" font-weight="bold" text-anchor="middle" font-family="Liberation Sans, sans-serif">E</text><path d="M-8 -5l2 3l3 -6M-8 4l2 3l3 -6" stroke="#111" stroke-width="1.4" fill="none"/></g><g transform="translate(1495,44)"><text x="0" y="-1" font-size="8" fill="#111" font-weight="bold" text-anchor="middle" font-family="Liberation Sans, sans-serif">1.0 D</text><text x="0" y="8" font-size="8" fill="#111" font-weight="bold" text-anchor="middle" font-family="Liberation Sans, sans-serif">1.5 E</text></g><g transform="translate(1525,44)"><text x="0" y="-1" font-size="8" fill="#111" font-weight="bold" text-anchor="middle" font-family="Liberation Sans, sans-serif">D+L</text><text x="0" y="8" font-size="8" fill="#111" font-weight="bold" text-anchor="middle" font-family="Liberation Sans, sans-serif">+E</text></g></svg>
<div id="left" class="abs"></div>
<div class="abs" style="left:5px;top:116px;width:16px;height:3px;background:repeating-linear-gradient(90deg,#fdfdfd 0 2px,#c9c9c9 2px 4px)"></div>
<div class="sel" style="left:3px;top:126px;width:21px;height:25px;border-left:none;border-right:none"></div>
<div class="sel" style="left:3px;top:838px;width:21px;height:27px;border-left:none;border-right:none"></div>
<svg class="abs" style="left:0;top:0" width="28" height="1052"><g transform="translate(13,138)"><path d="M-5 -9l10 11h-5l3 6l-3 1l-3 -6l-3 3z" fill="#5a6f8f" stroke="#222" stroke-width="0.8"/></g><g transform="translate(13,167)"><path d="M-8 -7h12" stroke="#111" stroke-width="1.3"/><rect x="-3" y="-9" width="4" height="4" fill="#fff" stroke="#111"/><path d="M-1 -3l7 8h-3.5l2 4l-2 1l-2 -4l-2 2z" fill="#5a6f8f" stroke="#222" stroke-width="0.6"/></g><g transform="translate(13,200)"><path d="M-6 -7l12 14" stroke="#111" stroke-width="1.4"/></g><g transform="translate(13,229)"><rect x="-7" y="-8" width="14" height="16" fill="none" stroke="#111" stroke-dasharray="3 2" stroke-width="1.2"/><path d="M-6 -7l12 14" stroke="#111" stroke-width="1.3"/><circle cx="0" cy="0" r="1.6" fill="#c01818"/></g><g transform="translate(13,257)"><rect x="-7" y="-8" width="14" height="16" fill="none" stroke="#a8a8a8" stroke-dasharray="2 2"/><path d="M-3 -4h6M-3 4h6M0 -4v8" stroke="#a8a8a8" stroke-width="1.2"/></g><g transform="translate(13,285)"><rect x="-7" y="-8" width="14" height="16" fill="none" stroke="#111" stroke-dasharray="3 2" stroke-width="1.2"/><path d="M-5 -8v16M5 -8v16M-5 -3h10M-5 3h10" stroke="#111" stroke-width="1.2"/><circle cx="0" cy="0" r="1.5" fill="#c01818"/></g><g transform="translate(13,313)"><rect x="-7" y="-8" width="14" height="16" fill="none" stroke="#111" stroke-dasharray="3 2" stroke-width="1.2"/><path d="M-6 -7l12 14M6 -7l-12 14" stroke="#111" stroke-width="1.2"/><circle cx="0" cy="0" r="1.5" fill="#c01818"/></g><g transform="translate(13,347)"><path d="M-6 8v-16h7l5 6v10z" fill="#cfd9e8" stroke="#2b3a55" stroke-width="1.3"/></g><g transform="translate(13,375)"><rect x="-6" y="-7" width="12" height="13" fill="#b9c7dc" stroke="#2b3a55" stroke-width="1.3"/></g><g transform="translate(13,403)"><rect x="-7" y="-8" width="14" height="16" fill="none" stroke="#111" stroke-dasharray="3 2" stroke-width="1.2"/><rect x="-4" y="-5" width="8" height="10" fill="#dfe6f1" stroke="#2b3a55"/><circle cx="0" cy="0" r="1.5" fill="#c01818"/></g><g transform="translate(13,431)"><rect x="-7" y="-8" width="14" height="16" fill="#cfcfcf" stroke="#a8a8a8"/><circle cx="0" cy="0" r="3.5" fill="#eee" stroke="#a8a8a8"/></g><g transform="translate(13,465)"><path d="M-5 -7v13h10v-3h-7v-10z" fill="#cfcfcf" stroke="#a8a8a8"/></g><g transform="translate(13,493)"><rect x="-7" y="-8" width="14" height="16" fill="none" stroke="#a8a8a8" stroke-dasharray="2 2"/><path d="M-4 -4v9h8v-3h-5v-6z" fill="#cfcfcf" stroke="#a8a8a8"/></g><g transform="translate(13,521)"><rect x="-7" y="-8" width="14" height="16" fill="#dfe6f1" stroke="#2b3a55" stroke-width="1.2"/><rect x="-2" y="-3" width="4" height="4" fill="#fff" stroke="#2b3a55"/></g><g transform="translate(13,555)"><path d="M-6 -7l12 13" stroke="#111" stroke-width="1.2"/><path d="M-3 -3l5 5" stroke="#5a6f8f" stroke-width="3"/></g><g transform="translate(13,590)"><path d="M-6 -8v16M0 -8v16M6 -8v16M-6 -8h12M-6 -3h12M-6 2h12M-6 8h12" stroke="#111" stroke-width="1.2" fill="none"/></g><g transform="translate(13,624)"><path d="M-6 8l4 -15h4l4 15z" fill="#6f86ab" stroke="#2b3a55"/><path d="M0 -10v20M-7 5h14" stroke="#111" stroke-width="1"/></g><g transform="translate(13,652)"><path d="M-7 1c2 -4 5 -4 7 0s5 3 7 -1" stroke="#111" stroke-width="1.4" fill="none"/></g><g transform="translate(13,686)"><path d="M-7 7h14" stroke="#2b3a55" stroke-width="3"/><path d="M-5 4l9 -11l2 2l-9 10z" fill="#111"/></g><g transform="translate(13,727)"><text x="-3" y="9" font-size="10" fill="#111" font-weight="normal" text-anchor="middle" font-family="Liberation Sans, sans-serif">all</text><path d="M3 -9l5 7h-3l1.5 3l-1.5 0.8l-1.5 -3l-1.5 1.5z" fill="#8fa3c4" stroke="#111" stroke-width="0.5"/></g><g transform="translate(13,755)"><text x="-3" y="9" font-size="10" fill="#aaa" font-weight="normal" text-anchor="middle" font-family="Liberation Sans, sans-serif">PS</text><path d="M3 -9l5 7h-3l1.5 3l-1.5 0.8l-1.5 -3l-1.5 1.5z" fill="#d0d0d0" stroke="#aaa" stroke-width="0.5"/></g><g transform="translate(13,783)"><text x="-3" y="9" font-size="10" fill="#aaa" font-weight="normal" text-anchor="middle" font-family="Liberation Sans, sans-serif">clr</text><path d="M3 -9l5 7h-3l1.5 3l-1.5 0.8l-1.5 -3l-1.5 1.5z" fill="#d0d0d0" stroke="#aaa" stroke-width="0.5"/></g><g transform="translate(13,811)"><path d="M-7 -7l13 14" stroke="#111" stroke-width="1.3"/><path d="M-7 0h1M-4 0h1M-1 3h1M-7 3h1M-4 3h1M-7 6h1M-4 6h1M-1 6h1M2 6h1" stroke="#666" stroke-width="1.5"/><path d="M3 -9l5 7h-3l1.5 3l-1.5 0.8l-1.5 -3l-1.5 1.5z" fill="#8fa3c4" stroke="#111" stroke-width="0.5"/></g><g transform="translate(13,852)"><path d="M-8 3h11M-3 -8v16" stroke="#111" stroke-width="1"/><circle cx="-3" cy="3" r="2" fill="#fff" stroke="#111"/><circle cx="3" cy="-4" r="1.5" fill="#fff" stroke="#111"/><path d="M8 3l-3.5 -2.5v5z" fill="#111"/></g><g transform="translate(13,880)"><path d="M-7 7l12 -12" stroke="#111" stroke-width="1"/><circle cx="-7" cy="7" r="1.8" fill="#fff" stroke="#111"/><circle cx="-1" cy="1" r="1.8" fill="#fff" stroke="#111"/><circle cx="5" cy="-6" r="1.8" fill="#fff" stroke="#111"/><path d="M8 1l-3.5 -2.5v5z" fill="#111"/></g><g transform="translate(13,907)"><path d="M-6 -6l12 13" stroke="#111" stroke-width="1.2"/><path d="M-8 -8l3 3M-4 -8l-2 3" stroke="#111" stroke-width="0.9"/><path d="M7 -4l-3.5 -2.5v5z" fill="#111"/></g><g transform="translate(13,935)"><path d="M-7 -8l13 16M6 -8l-13 16" stroke="#111" stroke-width="1"/><circle cx="-0.5" cy="0" r="2" fill="#fff" stroke="#111"/><path d="M8 0l-3.5 -2.5v5z" fill="#111"/></g><g transform="translate(13,964)"><path d="M-8 0h10M-2 -8v16" stroke="#111" stroke-width="1"/><circle cx="-2" cy="0" r="2" fill="#fff" stroke="#111"/><path d="M8 0l-3.5 -2.5v5z" fill="#111"/></g><g transform="translate(13,992)"><rect x="-7" y="-9" width="14" height="18" fill="#999"/><path d="M-7 -7h14M-7 -4h14M-7 -1h14M-7 2h14M-7 5h14M-5 -9v18M-2 -9v18M1 -9v18M4 -9v18" stroke="#eee" stroke-width="0.8"/><circle cx="2" cy="2" r="2" fill="#fff" stroke="#111"/><path d="M8 2l-3.5 -2.5v5z" fill="#111"/></g><path d="M4 183.5h18" stroke="#c4c4c4"/><path d="M4 330.5h18" stroke="#c4c4c4"/><path d="M4 448.5h18" stroke="#c4c4c4"/><path d="M4 538.5h18" stroke="#c4c4c4"/><path d="M4 607.5h18" stroke="#c4c4c4"/><path d="M4 669.5h18" stroke="#c4c4c4"/><path d="M4 703.5h18" stroke="#c4c4c4"/><path d="M4 826.5h18" stroke="#c4c4c4"/></svg>
<div id="mehead" class="abs"></div><div id="metab" class="abs">Model Explorer</div>
<div class="hline" style="left:26px;top:135px;width:15px"></div><div class="hline" style="left:175px;top:135px;width:230px"></div>
<svg class="abs" style="left:364px;top:117px" width="36" height="16"><path d="M4 6h8l-4 4z" fill="#111"/><path d="M21 3.500l8 8M29 3.500l-8 8" stroke="#111" stroke-width="1.5"/></svg>
<div id="mebody" class="abs"></div>
<div class="abs" style="left:26px;top:111px;width:1px;height:941px;background:#8c8c8c"></div>
<div class="abs" style="left:404px;top:111px;width:3px;height:941px;background:#dcdcdc;border-left:1px solid #8c8c8c"></div>
<div class="tab" style="left:72px;width:44px">Display</div>
<div class="tab" style="left:116px;width:44px">Tables</div>
<div class="tab" style="left:160px;width:47px">Reports</div>
<div class="tab on" style="left:27px;width:45px">Model</div>
<div id="tree" class="abs"></div>
<div class="pm" style="left:40px;top:166px"></div>
<div class="abs" style="left:49px;top:170px;width:5px;height:1px;background:repeating-linear-gradient(90deg,#888 0 1px,transparent 1px 2px)"></div>
<div class="tr" style="left:56px;top:164px">Model</div>
<div class="pm plus" style="left:59px;top:183px"></div>
<div class="abs" style="left:68px;top:187px;width:5px;height:1px;background:repeating-linear-gradient(90deg,#888 0 1px,transparent 1px 2px)"></div>
<div class="tr" style="left:75px;top:181px">Project</div>
<div class="pm plus" style="left:59px;top:199px"></div>
<div class="abs" style="left:68px;top:203px;width:5px;height:1px;background:repeating-linear-gradient(90deg,#888 0 1px,transparent 1px 2px)"></div>
<div class="tr" style="left:75px;top:197px">Structure Layout</div>
<div class="pm plus" style="left:59px;top:216px"></div>
<div class="abs" style="left:68px;top:220px;width:5px;height:1px;background:repeating-linear-gradient(90deg,#888 0 1px,transparent 1px 2px)"></div>
<div class="tr" style="left:75px;top:214px">Properties</div>
<div class="pm plus" style="left:59px;top:233px"></div>
<div class="abs" style="left:68px;top:237px;width:5px;height:1px;background:repeating-linear-gradient(90deg,#888 0 1px,transparent 1px 2px)"></div>
<div class="tr" style="left:75px;top:231px">Structural Objects</div>
<div class="pm plus" style="left:59px;top:249px"></div>
<div class="abs" style="left:68px;top:253px;width:5px;height:1px;background:repeating-linear-gradient(90deg,#888 0 1px,transparent 1px 2px)"></div>
<div class="tr" style="left:75px;top:247px">Groups</div>
<div class="pm plus" style="left:59px;top:266px"></div>
<div class="abs" style="left:68px;top:270px;width:5px;height:1px;background:repeating-linear-gradient(90deg,#888 0 1px,transparent 1px 2px)"></div>
<div class="tr" style="left:75px;top:264px">Loads</div>
<div class="pm plus" style="left:59px;top:282px"></div>
<div class="abs" style="left:68px;top:286px;width:5px;height:1px;background:repeating-linear-gradient(90deg,#888 0 1px,transparent 1px 2px)"></div>
<div class="tr" style="left:75px;top:280px">Named Output Items</div>
<div class="pm plus" style="left:59px;top:299px"></div>
<div class="abs" style="left:68px;top:303px;width:5px;height:1px;background:repeating-linear-gradient(90deg,#888 0 1px,transparent 1px 2px)"></div>
<div class="tr" style="left:75px;top:297px">Named Plots</div>
<div class="abs" style="left:63px;top:176px;width:1px;height:124px;background:repeating-linear-gradient(#888 0 1px,transparent 1px 2px)"></div>
<div class="abs" style="left:407px;top:110px;width:1513px;height:26px;background:#d2d2d2;border-top:1px solid #8a8a8a"></div>
<div id="main" class="abs"></div><div id="vtab" class="abs">3-D View</div>
<svg class="abs" style="left:1880px;top:117px" width="36" height="16"><path d="M4 6h8l-4 4z" fill="#111"/><path d="M21 3.500l8 8M29 3.500l-8 8" stroke="#111" stroke-width="1.5"/></svg>
<svg class="abs" style="left:408px;top:997px" width="1512" height="56" viewBox="408 997 1512 56"><path d="M690 997L642 1053" stroke="#b5d0ec" stroke-width="1"/><path d="M732 997L684 1053" stroke="#b5d0ec" stroke-width="1"/><path d="M774 997L726 1053" stroke="#b5d0ec" stroke-width="1"/><path d="M816 997L768 1053" stroke="#b5d0ec" stroke-width="1"/><path d="M858 997L810 1053" stroke="#b5d0ec" stroke-width="1"/><path d="M900 997L852 1053" stroke="#b5d0ec" stroke-width="1"/><path d="M942 997L894 1053" stroke="#b5d0ec" stroke-width="1"/><path d="M984 997L936 1053" stroke="#b5d0ec" stroke-width="1"/><path d="M1026 997L978 1053" stroke="#b5d0ec" stroke-width="1"/><path d="M1068 997L1020 1053" stroke="#b5d0ec" stroke-width="1"/><path d="M1110 997L1062 1053" stroke="#b5d0ec" stroke-width="1"/><path d="M1152 997L1104 1053" stroke="#b5d0ec" stroke-width="1"/><path d="M1194 997L1146 1053" stroke="#b5d0ec" stroke-width="1"/><path d="M1236 997L1188 1053" stroke="#b5d0ec" stroke-width="1"/><path d="M1278 997L1230 1053" stroke="#b5d0ec" stroke-width="1"/><path d="M1320 997L1272 1053" stroke="#b5d0ec" stroke-width="1"/><path d="M1362 997L1314 1053" stroke="#b5d0ec" stroke-width="1"/><path d="M1404 997L1356 1053" stroke="#b5d0ec" stroke-width="1"/><path d="M1446 997L1398 1053" stroke="#b5d0ec" stroke-width="1"/><path d="M1488 997L1440 1053" stroke="#b5d0ec" stroke-width="1"/><path d="M356 997L546 1053" stroke="#c5daf1" stroke-width="1"/><path d="M424 997L614 1053" stroke="#c5daf1" stroke-width="1"/><path d="M492 997L682 1053" stroke="#c5daf1" stroke-width="1"/><path d="M560 997L750 1053" stroke="#c5daf1" stroke-width="1"/><path d="M628 997L818 1053" stroke="#c5daf1" stroke-width="1"/><path d="M696 997L886 1053" stroke="#c5daf1" stroke-width="1"/><path d="M764 997L954 1053" stroke="#c5daf1" stroke-width="1"/><path d="M832 997L1022 1053" stroke="#c5daf1" stroke-width="1"/><path d="M900 997L1090 1053" stroke="#c5daf1" stroke-width="1"/><path d="M968 997L1158 1053" stroke="#c5daf1" stroke-width="1"/><path d="M1036 997L1226 1053" stroke="#c5daf1" stroke-width="1"/><path d="M1104 997L1294 1053" stroke="#c5daf1" stroke-width="1"/><path d="M1172 997L1362 1053" stroke="#c5daf1" stroke-width="1"/><path d="M1240 997L1430 1053" stroke="#c5daf1" stroke-width="1"/><path d="M1308 997L1498 1053" stroke="#c5daf1" stroke-width="1"/><rect x="408" y="997" width="260" height="56" fill="#fff"/><rect x="1300" y="997" width="620" height="56" fill="#fff"/><path d="M975 1000l30 45M1000 998v40l20 8M1018 998v22" stroke="#9a9a9a" stroke-width="0.8" fill="none"/><circle cx="967" cy="1010" r="3" fill="none" stroke="#999" stroke-width="0.7"/><circle cx="987" cy="1035" r="3" fill="none" stroke="#999" stroke-width="0.7"/><circle cx="993" cy="1045" r="3" fill="none" stroke="#999" stroke-width="0.7"/><circle cx="1008" cy="1046" r="3" fill="none" stroke="#999" stroke-width="0.7"/><circle cx="1033" cy="1030" r="3" fill="none" stroke="#999" stroke-width="0.7"/><path d="M1017 1012l5 10l-6 2z" fill="#777"/></svg>
<div id="win" class="abs"><div id="wtitle" class="abs">3D Rendered View</div><svg class="abs" style="left:1496px;top:7px" width="20" height="18"><path d="M4 3l10 10M14 3l-10 10" stroke="#111" stroke-width="1.2"/></svg><div id="wtool" class="abs"></div><div class="abs" style="left:4px;top:36px;width:3px;height:20px;background:repeating-linear-gradient(#fdfdfd 0 2px,#c4c4c4 2px 4px)"></div><div class="sep" style="left:36px;top:37px;height:18px;background:#c8c8c8"></div><div class="sep" style="left:114px;top:37px;height:18px;background:#c8c8c8"></div><div class="sep" style="left:144px;top:37px;height:18px;background:#c8c8c8"></div><div class="sep" style="left:174px;top:37px;height:18px;background:#c8c8c8"></div><svg class="abs" style="left:0;top:32px" width="300" height="28"><g transform="translate(22,14)"><path d="M-8 9l2 -6l11 -12l4 3l-11 12z" fill="#2b3a55"/><path d="M-3 2l9 -10" stroke="#9ab" stroke-width="1.2"/></g><g transform="translate(52,14)"><circle cx="-2" cy="-2" r="6" fill="#f4f6fa" stroke="#2b3a55" stroke-width="1.8"/><path d="M2.5 2.5L8 8" stroke="#2b3a55" stroke-width="3" stroke-linecap="round"/><circle cx="-2" cy="-2" r="3.5" fill="#2b3a55"/></g><g transform="translate(76,14)"><circle cx="-2" cy="-2" r="6" fill="#f4f6fa" stroke="#2b3a55" stroke-width="1.8"/><path d="M2.5 2.5L8 8" stroke="#2b3a55" stroke-width="3" stroke-linecap="round"/><path d="M-5.5 -2h7M-2 -5.5v7" stroke="#2b3a55" stroke-width="1.5"/></g><g transform="translate(100,14)"><circle cx="-2" cy="-2" r="6" fill="#f4f6fa" stroke="#2b3a55" stroke-width="1.8"/><path d="M2.5 2.5L8 8" stroke="#2b3a55" stroke-width="3" stroke-linecap="round"/><path d="M-5.5 -2h7" stroke="#2b3a55" stroke-width="1.5"/></g><g transform="translate(130,14)"><path d="M-9 -5v-4h4M5 -9h4v4M9 5v4h-4M-5 9h-4v-4" stroke="#2b3a55" stroke-width="1.4" fill="none"/><path d="M-4 6l-3 -6l1.5 -1l1.5 2v-7h2v-1h2v1h2v1h2v8l-2 3z" fill="#8fa3c4" stroke="#2b3a55" stroke-width="1"/></g><g transform="translate(160,14)"><path d="M-3 -7a7 7 0 1 1 -3 9" stroke="#2b3a55" stroke-width="2.6" fill="none"/><path d="M-8 -8l7 -1l-3 6z" fill="#2b3a55"/><circle cx="0" cy="0" r="1.2" fill="#2b3a55"/></g><g transform="translate(190,14)"><rect x="-7" y="-9" width="14" height="3" rx="1.5" fill="#8fa3c4" stroke="#2b3a55" stroke-width="1"/><circle cx="-7" cy="-7.500" r="2" fill="#2b3a55"/><circle cx="7" cy="-7.500" r="2" fill="#2b3a55"/><path d="M0 -4v12M-2.500 -1.500l2.500 -2.500l2.500 2.500M-2.500 5.500l2.500 2.500l2.500 -2.500M-8 3h4M-6 1v4M4 3h4M6 1v4" stroke="#2b3a55" stroke-width="1.200" fill="none"/></g><g transform="translate(214,14)"><ellipse cx="-5" cy="3" rx="2.2" ry="4" transform="rotate(35 -5 3)" fill="#2b3a55"/><ellipse cx="4" cy="-3" rx="2.2" ry="4" transform="rotate(35 4 -3)" fill="#2b3a55"/><circle cx="-8" cy="7" r="1.6" fill="#2b3a55"/><circle cx="1" cy="2" r="1.6" fill="#2b3a55"/></g></svg><svg class="abs" style="left:0;top:59px" width="1520" height="795" viewBox="316 202 1520 795"><path d="M854.7 3474.8L168.2 921.4M970.1 3099.9L208.0 907.7M1060.7 2805.4L246.0 894.7M1133.8 2568.0L282.1 882.2M1194.0 2372.6L316.7 870.3M1244.4 2208.8L349.7 859.0M1287.2 2069.7L381.4 848.1M1324.0 1950.0L411.6 837.7M1356.1 1845.9L440.7 827.7M1384.2 1754.6L468.5 818.2M1409.0 1673.8L495.2 809.0M1431.2 1601.8L520.9 800.1M1451.1 1537.3L545.7 791.6M1469.0 1479.2L569.5 783.5M1485.2 1426.5L592.4 775.6M1499.9 1378.5L614.5 768.0M1513.5 1334.6L635.8 760.7M1525.8 1294.3L656.3 753.6M1537.3 1257.3L676.2 746.8M1547.8 1223.0L695.4 740.2M1557.6 1191.2L713.9 733.8M1566.7 1161.7L731.9 727.6M1575.1 1134.2L749.2 721.7M1583.0 1108.5L766.1 715.9M1590.4 1084.5L782.4 710.3M1597.4 1061.9L798.2 704.9M1603.9 1040.7L813.5 699.6M1610.0 1020.8L828.3 694.5M1615.8 1001.9L842.8 689.5M1621.3 984.1L856.8 684.7M1626.5 967.3L870.4 680.0M1631.4 951.3L883.7 675.5M1636.1 936.2L896.5 671.0M1640.5 921.8L909.0 666.7M1644.7 908.0L921.2 662.6M1648.8 895.0L933.1 658.5M1652.6 882.5L944.6 654.5M1656.3 870.6L955.9 650.6M1659.8 859.3L966.9 646.9M1663.1 848.4L977.5 643.2M1666.3 838.0L988.0 639.6M1669.4 828.0L998.1 636.1M1672.3 818.4L1008.0 632.7M1675.2 809.2L1017.7 629.4M854.7 3474.8L1675.2 809.2M765.7 3143.8L1647.0 801.5M693.8 2876.2L1619.8 794.1M634.4 2655.5L1593.4 786.9M584.7 2470.4L1567.9 779.9M542.3 2312.8L1543.3 773.1M505.8 2177.1L1519.4 766.6M474.0 2059.0L1496.2 760.3M446.2 1955.3L1473.7 754.1M421.5 1863.4L1452.0 748.2M399.5 1781.6L1430.8 742.4M379.7 1708.1L1410.3 736.8M361.9 1641.9L1390.3 731.3M345.8 1581.9L1370.9 726.0M331.1 1527.2L1352.1 720.8M317.6 1477.1L1333.8 715.8M305.3 1431.2L1315.9 711.0M293.9 1388.9L1298.6 706.2M283.4 1349.8L1281.7 701.6M273.6 1313.5L1265.2 697.1M264.6 1279.8L1249.2 692.7M256.1 1248.4L1233.6 688.4M248.2 1219.0L1218.3 684.3M240.8 1191.5L1203.5 680.2M233.9 1165.8L1189.0 676.2M227.4 1141.5L1174.8 672.4M221.2 1118.7L1161.0 668.6M215.4 1097.1L1147.5 664.9M210.0 1076.8L1134.3 661.3M204.8 1057.5L1121.5 657.8M199.9 1039.2L1108.9 654.3M195.2 1021.9L1096.6 651.0M190.8 1005.4L1084.6 647.7M186.6 989.7L1072.8 644.5M182.5 974.7L1061.3 641.3M178.7 960.5L1050.1 638.2M175.0 946.9L1039.1 635.2M171.5 933.8L1028.3 632.3M168.2 921.4L1017.7 629.4" stroke="#15158c" stroke-width="1.55" fill="none"/>
<g stroke-width="0.8" stroke-linejoin="round"><polygon points="1048.8,773.4 1043.7,771.4 1044.0,743.5 1049.1,745.5" fill="#212b5f" stroke="#212b5f"/>
<polygon points="1048.8,773.4 1053.0,771.1 1053.3,743.3 1049.1,745.5" fill="#465ab0" stroke="#465ab0"/>
<polygon points="1049.1,745.5 1053.3,743.3 1048.2,741.4 1044.0,743.5" fill="#4f67c2" stroke="#4f67c2"/>
<polygon points="1049.1,745.5 1044.0,743.5 1044.4,700.6 1049.6,702.3" fill="#212b5f" stroke="#212b5f"/>
<polygon points="1049.1,745.5 1053.3,743.3 1053.9,700.4 1049.6,702.3" fill="#465ab0" stroke="#465ab0"/>
<polygon points="1049.6,702.3 1053.9,700.4 1048.7,698.7 1044.4,700.6" fill="#4f67c2" stroke="#4f67c2"/>
<polygon points="1103.5,775.7 1049.0,754.7 1049.1,745.5 1103.8,766.1" fill="#212b5f" stroke="#212b5f"/>
<polygon points="1103.5,775.7 1106.6,773.9 1106.9,764.3 1103.8,766.1" fill="#465ab0" stroke="#465ab0"/>
<polygon points="1103.8,766.1 1106.9,764.3 1052.3,743.8 1049.1,745.5" fill="#4f67c2" stroke="#4f67c2"/>
<polygon points="988.1,786.4 984.2,784.7 984.1,774.9 988.1,776.6" fill="#212b5f" stroke="#212b5f"/>
<polygon points="988.1,786.4 1049.0,754.7 1049.1,745.5 988.1,776.6" fill="#465ab0" stroke="#465ab0"/>
<polygon points="988.1,776.6 1049.1,745.5 1045.3,744.0 984.1,774.9" fill="#4f67c2" stroke="#4f67c2"/>
<polygon points="1104.9,726.7 1049.5,707.8 1049.6,702.3 1105.1,720.9" fill="#212b5f" stroke="#212b5f"/>
<polygon points="1104.9,726.7 1108.0,725.1 1108.2,719.3 1105.1,720.9" fill="#465ab0" stroke="#465ab0"/>
<polygon points="1105.1,720.9 1108.2,719.3 1052.8,700.9 1049.6,702.3" fill="#4f67c2" stroke="#4f67c2"/>
<polygon points="1108.7,797.7 1103.0,795.4 1103.8,766.1 1109.5,768.3" fill="#212b5f" stroke="#212b5f"/>
<polygon points="1108.7,797.7 1112.7,795.1 1113.7,765.9 1109.5,768.3" fill="#465ab0" stroke="#465ab0"/>
<polygon points="1109.5,768.3 1113.7,765.9 1107.9,763.7 1103.8,766.1" fill="#4f67c2" stroke="#4f67c2"/>
<polygon points="987.8,736.3 983.8,734.7 983.8,728.8 987.8,730.3" fill="#212b5f" stroke="#212b5f"/>
<polygon points="987.8,736.3 1049.5,707.8 1049.6,702.3 987.8,730.3" fill="#465ab0" stroke="#465ab0"/>
<polygon points="987.8,730.3 1049.6,702.3 1045.7,701.0 983.8,728.8" fill="#4f67c2" stroke="#4f67c2"/>
<polygon points="1109.5,768.3 1103.8,766.1 1105.1,720.9 1110.9,722.9" fill="#212b5f" stroke="#212b5f"/>
<polygon points="1109.5,768.3 1113.7,765.9 1115.1,720.7 1110.9,722.9" fill="#465ab0" stroke="#465ab0"/>
<polygon points="1110.9,722.9 1115.1,720.7 1109.2,718.8 1105.1,720.9" fill="#4f67c2" stroke="#4f67c2"/>
<polygon points="983.3,809.1 978.2,806.7 977.9,776.8 983.1,779.1" fill="#212b5f" stroke="#212b5f"/>
<polygon points="983.3,809.1 988.2,806.5 988.1,776.6 983.1,779.1" fill="#465ab0" stroke="#465ab0"/>
<polygon points="983.1,779.1 988.1,776.6 982.9,774.3 977.9,776.8" fill="#4f67c2" stroke="#4f67c2"/>
<polygon points="1176.5,803.9 1109.3,778.0 1109.5,768.3 1177.0,793.7" fill="#212b5f" stroke="#212b5f"/>
<polygon points="1176.5,803.9 1179.4,801.9 1179.9,791.7 1177.0,793.7" fill="#465ab0" stroke="#465ab0"/>
<polygon points="1177.0,793.7 1179.9,791.7 1112.6,766.5 1109.5,768.3" fill="#4f67c2" stroke="#4f67c2"/>
<polygon points="983.1,779.1 977.9,776.8 977.4,730.6 982.7,732.6" fill="#212b5f" stroke="#212b5f"/>
<polygon points="983.1,779.1 988.1,776.6 987.8,730.3 982.7,732.6" fill="#465ab0" stroke="#465ab0"/>
<polygon points="982.7,732.6 987.8,730.3 982.5,728.3 977.4,730.6" fill="#4f67c2" stroke="#4f67c2"/>
<polygon points="1049.6,813.7 1045.2,811.7 1045.3,801.4 1049.8,803.3" fill="#212b5f" stroke="#212b5f"/>
<polygon points="1049.6,813.7 1109.3,778.0 1109.5,768.3 1049.8,803.3" fill="#465ab0" stroke="#465ab0"/>
<polygon points="1049.8,803.3 1109.5,768.3 1105.2,766.7 1045.3,801.4" fill="#4f67c2" stroke="#4f67c2"/>
<polygon points="1179.1,752.0 1110.7,728.7 1110.9,722.9 1179.4,745.9" fill="#212b5f" stroke="#212b5f"/>
<polygon points="1179.1,752.0 1182.1,750.1 1182.4,744.0 1179.4,745.9" fill="#465ab0" stroke="#465ab0"/>
<polygon points="1179.4,745.9 1182.4,744.0 1114.0,721.3 1110.9,722.9" fill="#4f67c2" stroke="#4f67c2"/>
<polygon points="1050.3,760.7 1045.8,759.0 1045.9,752.8 1050.3,754.5" fill="#212b5f" stroke="#212b5f"/>
<polygon points="1050.3,760.7 1110.7,728.7 1110.9,722.9 1050.3,754.5" fill="#465ab0" stroke="#465ab0"/>
<polygon points="1050.3,754.5 1110.9,722.9 1106.5,721.4 1045.9,752.8" fill="#4f67c2" stroke="#4f67c2"/>
<polygon points="1041.8,815.3 983.2,789.0 983.1,779.1 1041.9,804.9" fill="#212b5f" stroke="#212b5f"/>
<polygon points="1041.8,815.3 1045.5,813.1 1045.6,802.7 1041.9,804.9" fill="#465ab0" stroke="#465ab0"/>
<polygon points="1041.9,804.9 1045.6,802.7 986.8,777.2 983.1,779.1" fill="#4f67c2" stroke="#4f67c2"/>
<polygon points="1184.6,828.4 1175.4,824.7 1177.0,793.7 1186.3,797.2" fill="#212b5f" stroke="#212b5f"/>
<polygon points="1184.6,828.4 1188.5,825.5 1190.2,794.5 1186.3,797.2" fill="#465ab0" stroke="#465ab0"/>
<polygon points="1186.3,797.2 1190.2,794.5 1180.9,791.0 1177.0,793.7" fill="#4f67c2" stroke="#4f67c2"/>
<polygon points="919.6,822.1 915.7,820.1 915.4,809.6 919.3,811.6" fill="#212b5f" stroke="#212b5f"/>
<polygon points="919.6,822.1 983.2,789.0 983.1,779.1 919.3,811.6" fill="#465ab0" stroke="#465ab0"/>
<polygon points="919.3,811.6 983.1,779.1 979.2,777.4 915.4,809.6" fill="#4f67c2" stroke="#4f67c2"/>
<polygon points="1042.3,762.2 982.8,738.6 982.7,732.6 1042.4,755.9" fill="#212b5f" stroke="#212b5f"/>
<polygon points="1042.3,762.2 1046.0,760.2 1046.1,754.0 1042.4,755.9" fill="#465ab0" stroke="#465ab0"/>
<polygon points="1042.4,755.9 1046.1,754.0 986.5,730.9 982.7,732.6" fill="#4f67c2" stroke="#4f67c2"/>
<polygon points="1186.3,797.2 1177.0,793.7 1179.4,745.9 1188.8,749.0" fill="#212b5f" stroke="#212b5f"/>
<polygon points="1186.3,797.2 1190.2,794.5 1192.8,746.5 1188.8,749.0" fill="#465ab0" stroke="#465ab0"/>
<polygon points="1188.8,749.0 1192.8,746.5 1183.4,743.4 1179.4,745.9" fill="#4f67c2" stroke="#4f67c2"/>
<polygon points="918.2,768.3 914.2,766.5 914.0,760.2 918.0,762.0" fill="#212b5f" stroke="#212b5f"/>
<polygon points="918.2,768.3 982.8,738.6 982.7,732.6 918.0,762.0" fill="#465ab0" stroke="#465ab0"/>
<polygon points="918.0,762.0 982.7,732.6 978.8,731.1 914.0,760.2" fill="#4f67c2" stroke="#4f67c2"/>
<polygon points="1048.4,839.7 1041.6,836.5 1041.9,804.9 1048.8,807.9" fill="#212b5f" stroke="#212b5f"/>
<polygon points="1048.4,839.7 1053.3,836.6 1053.7,805.0 1048.8,807.9" fill="#465ab0" stroke="#465ab0"/>
<polygon points="1048.8,807.9 1053.7,805.0 1046.8,802.0 1041.9,804.9" fill="#4f67c2" stroke="#4f67c2"/>
<polygon points="1048.8,807.9 1041.9,804.9 1042.4,755.9 1049.4,758.7" fill="#212b5f" stroke="#212b5f"/>
<polygon points="1048.8,807.9 1053.7,805.0 1054.4,756.0 1049.4,758.7" fill="#465ab0" stroke="#465ab0"/>
<polygon points="1049.4,758.7 1054.4,756.0 1047.4,753.3 1042.4,755.9" fill="#4f67c2" stroke="#4f67c2"/>
<polygon points="1045.4,754.4 1127.7,711.7 1046.4,685.7 961.9,722.0" fill="#7d7d7d" stroke="#7d7d7d" stroke-width="1.5"/>
<polygon points="1049.6,699.9 1044.4,698.2 1045.0,647.4 1050.2,648.9" fill="#212b5f" stroke="#212b5f"/>
<polygon points="1049.6,699.9 1053.9,698.0 1054.6,647.2 1050.2,648.9" fill="#465ab0" stroke="#465ab0"/>
<polygon points="1050.2,648.9 1054.6,647.2 1049.3,645.8 1045.0,647.4" fill="#4f67c2" stroke="#4f67c2"/>
<polygon points="1106.5,670.9 1050.2,654.6 1050.2,648.9 1106.6,664.9" fill="#212b5f" stroke="#212b5f"/>
<polygon points="1106.5,670.9 1109.7,669.5 1109.8,663.5 1106.6,664.9" fill="#465ab0" stroke="#465ab0"/>
<polygon points="1106.6,664.9 1109.8,663.5 1053.5,647.7 1050.2,648.9" fill="#4f67c2" stroke="#4f67c2"/>
<polygon points="987.4,679.1 983.4,677.8 983.4,671.7 987.4,673.0" fill="#212b5f" stroke="#212b5f"/>
<polygon points="987.4,679.1 1050.2,654.6 1050.2,648.9 987.4,673.0" fill="#465ab0" stroke="#465ab0"/>
<polygon points="987.4,673.0 1050.2,648.9 1046.3,647.8 983.4,671.7" fill="#4f67c2" stroke="#4f67c2"/>
<polygon points="1111.0,720.4 1105.1,718.4 1106.6,664.9 1112.6,666.6" fill="#212b5f" stroke="#212b5f"/>
<polygon points="1111.0,720.4 1115.1,718.2 1116.8,664.7 1112.6,666.6" fill="#465ab0" stroke="#465ab0"/>
<polygon points="1112.6,666.6 1116.8,664.7 1110.9,663.1 1106.6,664.9" fill="#4f67c2" stroke="#4f67c2"/>
<polygon points="982.7,730.1 977.4,728.0 976.9,673.2 982.3,675.0" fill="#212b5f" stroke="#212b5f"/>
<polygon points="982.7,730.1 987.7,727.8 987.4,673.0 982.3,675.0" fill="#465ab0" stroke="#465ab0"/>
<polygon points="982.3,675.0 987.4,673.0 982.0,671.3 976.9,673.2" fill="#4f67c2" stroke="#4f67c2"/>
<polygon points="1182.0,692.7 1112.4,672.6 1112.6,666.6 1182.4,686.4" fill="#212b5f" stroke="#212b5f"/>
<polygon points="1182.0,692.7 1185.1,691.1 1185.4,684.8 1182.4,686.4" fill="#465ab0" stroke="#465ab0"/>
<polygon points="1182.4,686.4 1185.4,684.8 1115.7,665.2 1112.6,666.6" fill="#4f67c2" stroke="#4f67c2"/>
<polygon points="1051.0,700.3 1046.4,698.8 1046.5,692.3 1051.1,693.8" fill="#212b5f" stroke="#212b5f"/>
<polygon points="1051.0,700.3 1112.4,672.6 1112.6,666.6 1051.1,693.8" fill="#465ab0" stroke="#465ab0"/>
<polygon points="1051.1,693.8 1112.6,666.6 1108.1,665.3 1046.5,692.3" fill="#4f67c2" stroke="#4f67c2"/>
<polygon points="1042.9,701.6 982.3,681.1 982.3,675.0 1043.0,695.1" fill="#212b5f" stroke="#212b5f"/>
<polygon points="1042.9,701.6 1046.7,699.9 1046.8,693.4 1043.0,695.1" fill="#465ab0" stroke="#465ab0"/>
<polygon points="1043.0,695.1 1046.8,693.4 986.1,673.5 982.3,675.0" fill="#4f67c2" stroke="#4f67c2"/>
<polygon points="916.5,706.9 912.5,705.3 912.3,698.7 916.3,700.3" fill="#212b5f" stroke="#212b5f"/>
<polygon points="916.5,706.9 982.3,681.1 982.3,675.0 916.3,700.3" fill="#465ab0" stroke="#465ab0"/>
<polygon points="916.3,700.3 982.3,675.0 978.2,673.7 912.3,698.7" fill="#4f67c2" stroke="#4f67c2"/>
<polygon points="913.5,847.3 909.1,844.9 908.2,812.8 912.5,815.0" fill="#212b5f" stroke="#212b5f"/>
<polygon points="913.5,847.3 920.2,843.6 919.3,811.6 912.5,815.0" fill="#465ab0" stroke="#465ab0"/>
<polygon points="912.5,815.0 919.3,811.6 915.0,809.3 908.2,812.8" fill="#4f67c2" stroke="#4f67c2"/>
<polygon points="1127.7,849.2 1122.6,846.9 1123.0,835.9 1128.1,838.1" fill="#212b5f" stroke="#212b5f"/>
<polygon points="1127.7,849.2 1185.7,807.5 1186.3,797.2 1128.1,838.1" fill="#465ab0" stroke="#465ab0"/>
<polygon points="1128.1,838.1 1186.3,797.2 1181.3,795.4 1123.0,835.9" fill="#4f67c2" stroke="#4f67c2"/>
<polygon points="912.5,815.0 908.2,812.8 906.6,763.1 911.1,765.1" fill="#212b5f" stroke="#212b5f"/>
<polygon points="912.5,815.0 919.3,811.6 918.0,762.0 911.1,765.1" fill="#465ab0" stroke="#465ab0"/>
<polygon points="911.1,765.1 918.0,762.0 913.6,760.0 906.6,763.1" fill="#4f67c2" stroke="#4f67c2"/>
<polygon points="1114.3,847.8 1048.7,818.4 1048.8,807.9 1114.7,836.7" fill="#212b5f" stroke="#212b5f"/>
<polygon points="1114.3,847.8 1117.9,845.3 1118.2,834.3 1114.7,836.7" fill="#465ab0" stroke="#465ab0"/>
<polygon points="1114.7,836.7 1118.2,834.3 1052.5,805.7 1048.8,807.9" fill="#4f67c2" stroke="#4f67c2"/>
<polygon points="982.8,853.7 978.3,851.4 978.2,840.3 982.7,842.5" fill="#212b5f" stroke="#212b5f"/>
<polygon points="982.8,853.7 1044.7,816.6 1044.9,806.2 982.7,842.5" fill="#465ab0" stroke="#465ab0"/>
<polygon points="982.7,842.5 1044.9,806.2 1040.4,804.2 978.2,840.3" fill="#4f67c2" stroke="#4f67c2"/>
<polygon points="1129.7,792.7 1124.5,790.7 1124.8,784.0 1130.0,786.0" fill="#212b5f" stroke="#212b5f"/>
<polygon points="1129.7,792.7 1188.5,755.2 1188.8,749.0 1130.0,786.0" fill="#465ab0" stroke="#465ab0"/>
<polygon points="1130.0,786.0 1188.8,749.0 1183.8,747.3 1124.8,784.0" fill="#4f67c2" stroke="#4f67c2"/>
<polygon points="1116.1,791.4 1049.3,765.0 1049.4,758.7 1116.3,784.8" fill="#212b5f" stroke="#212b5f"/>
<polygon points="1116.1,791.4 1119.7,789.2 1119.9,782.5 1116.3,784.8" fill="#465ab0" stroke="#465ab0"/>
<polygon points="1116.3,784.8 1119.9,782.5 1053.1,756.7 1049.4,758.7" fill="#4f67c2" stroke="#4f67c2"/>
<polygon points="971.9,856.6 912.8,825.6 912.5,815.0 971.7,845.4" fill="#212b5f" stroke="#212b5f"/>
<polygon points="971.9,856.6 976.2,854.0 976.1,842.8 971.7,845.4" fill="#465ab0" stroke="#465ab0"/>
<polygon points="971.7,845.4 976.1,842.8 916.9,812.8 912.5,815.0" fill="#4f67c2" stroke="#4f67c2"/>
<polygon points="982.4,796.7 977.8,794.7 977.7,788.0 982.3,790.0" fill="#212b5f" stroke="#212b5f"/>
<polygon points="982.4,796.7 1045.3,763.4 1045.4,757.1 982.3,790.0" fill="#465ab0" stroke="#465ab0"/>
<polygon points="982.3,790.0 1045.4,757.1 1040.9,755.3 977.7,788.0" fill="#4f67c2" stroke="#4f67c2"/>
<polygon points="1022.4,868.2 1018.4,866.1 1018.4,832.9 1022.5,834.8" fill="#212b5f" stroke="#212b5f"/>
<polygon points="1022.4,868.2 1026.8,865.4 1027.0,832.1 1022.5,834.8" fill="#465ab0" stroke="#465ab0"/>
<polygon points="1022.5,834.8 1027.0,832.1 1022.9,830.2 1018.4,832.9" fill="#4f67c2" stroke="#4f67c2"/>
<polygon points="1077.5,868.5 1073.8,866.7 1074.4,833.4 1078.2,835.1" fill="#212b5f" stroke="#212b5f"/>
<polygon points="1077.5,868.5 1082.4,865.1 1083.2,831.8 1078.2,835.1" fill="#465ab0" stroke="#465ab0"/>
<polygon points="1078.2,835.1 1083.2,831.8 1079.4,830.1 1074.4,833.4" fill="#4f67c2" stroke="#4f67c2"/>
<polygon points="825.1,871.4 821.2,868.9 820.6,857.4 824.5,859.9" fill="#212b5f" stroke="#212b5f"/>
<polygon points="825.1,871.4 912.8,825.6 912.5,815.0 824.5,859.9" fill="#465ab0" stroke="#465ab0"/>
<polygon points="824.5,859.9 912.5,815.0 908.6,813.0 820.6,857.4" fill="#4f67c2" stroke="#4f67c2"/>
<polygon points="1123.0,874.7 1113.6,870.2 1114.7,836.7 1124.2,840.9" fill="#212b5f" stroke="#212b5f"/>
<polygon points="1123.0,874.7 1126.9,871.7 1128.1,838.1 1124.2,840.9" fill="#465ab0" stroke="#465ab0"/>
<polygon points="1124.2,840.9 1128.1,838.1 1118.6,834.0 1114.7,836.7" fill="#4f67c2" stroke="#4f67c2"/>
<polygon points="971.2,799.4 911.3,771.5 911.1,765.1 971.1,792.6" fill="#212b5f" stroke="#212b5f"/>
<polygon points="971.2,799.4 975.7,797.0 975.6,790.3 971.1,792.6" fill="#465ab0" stroke="#465ab0"/>
<polygon points="971.1,792.6 975.6,790.3 915.5,763.1 911.1,765.1" fill="#4f67c2" stroke="#4f67c2"/>
<polygon points="1022.5,834.8 1018.4,832.9 1018.6,781.3 1022.7,783.0" fill="#212b5f" stroke="#212b5f"/>
<polygon points="1022.5,834.8 1027.0,832.1 1027.3,780.6 1022.7,783.0" fill="#465ab0" stroke="#465ab0"/>
<polygon points="1022.7,783.0 1027.3,780.6 1023.1,778.8 1018.6,781.3" fill="#4f67c2" stroke="#4f67c2"/>
<polygon points="1124.2,840.9 1114.7,836.7 1116.3,784.8 1126.0,788.5" fill="#212b5f" stroke="#212b5f"/>
<polygon points="1124.2,840.9 1128.1,838.1 1130.0,786.0 1126.0,788.5" fill="#465ab0" stroke="#465ab0"/>
<polygon points="1126.0,788.5 1130.0,786.0 1120.3,782.3 1116.3,784.8" fill="#4f67c2" stroke="#4f67c2"/>
<polygon points="1126.9,788.9 1045.4,757.1 1045.4,754.4 1127.0,786.0" fill="#212b5f" stroke="#212b5f"/>
<polygon points="1126.9,788.9 1205.5,739.3 1205.6,736.7 1127.0,786.0" fill="#d0d2d8" stroke="#d0d2d8"/>
<polygon points="1127.0,786.0 1205.6,736.7 1127.7,711.7 1045.4,754.4" fill="#7d7d7d" stroke="#7d7d7d" stroke-width="1.5"/>
<polygon points="1189.0,746.4 1179.5,743.2 1182.4,686.4 1192.0,689.1" fill="#212b5f" stroke="#212b5f"/>
<polygon points="1189.0,746.4 1192.9,743.9 1196.0,687.0 1192.0,689.1" fill="#465ab0" stroke="#465ab0"/>
<polygon points="1192.0,689.1 1196.0,687.0 1186.4,684.3 1182.4,686.4" fill="#4f67c2" stroke="#4f67c2"/>
<polygon points="1049.4,755.9 1042.4,753.2 1043.0,695.1 1050.1,697.4" fill="#212b5f" stroke="#212b5f"/>
<polygon points="1049.4,755.9 1054.4,753.4 1055.2,695.2 1050.1,697.4" fill="#465ab0" stroke="#465ab0"/>
<polygon points="1050.1,697.4 1055.2,695.2 1048.0,692.8 1043.0,695.1" fill="#4f67c2" stroke="#4f67c2"/>
<polygon points="1046.1,693.3 1129.6,656.6 1047.0,634.2 961.1,665.4" fill="#7d7d7d" stroke="#7d7d7d" stroke-width="1.5"/>
<polygon points="1050.3,646.5 1045.0,645.0 1045.5,592.6 1050.9,593.8" fill="#212b5f" stroke="#212b5f"/>
<polygon points="1050.3,646.5 1054.6,644.8 1055.3,592.4 1050.9,593.8" fill="#465ab0" stroke="#465ab0"/>
<polygon points="1050.9,593.8 1055.3,592.4 1049.9,591.2 1045.5,592.6" fill="#4f67c2" stroke="#4f67c2"/>
<polygon points="1108.1,613.2 1050.8,599.7 1050.9,593.8 1108.3,607.0" fill="#212b5f" stroke="#212b5f"/>
<polygon points="1108.1,613.2 1111.3,612.0 1111.5,605.9 1108.3,607.0" fill="#465ab0" stroke="#465ab0"/>
<polygon points="1108.3,607.0 1111.5,605.9 1054.2,592.8 1050.9,593.8" fill="#4f67c2" stroke="#4f67c2"/>
<polygon points="987.1,620.1 983.0,618.9 982.9,612.6 987.0,613.7" fill="#212b5f" stroke="#212b5f"/>
<polygon points="987.1,620.1 1050.8,599.7 1050.9,593.8 987.0,613.7" fill="#465ab0" stroke="#465ab0"/>
<polygon points="987.0,613.7 1050.9,593.8 1046.9,592.9 982.9,612.6" fill="#4f67c2" stroke="#4f67c2"/>
<polygon points="1112.7,664.0 1106.7,662.3 1108.3,607.0 1114.3,608.4" fill="#212b5f" stroke="#212b5f"/>
<polygon points="1112.7,664.0 1116.9,662.2 1118.6,606.9 1114.3,608.4" fill="#465ab0" stroke="#465ab0"/>
<polygon points="1114.3,608.4 1118.6,606.9 1112.6,605.5 1108.3,607.0" fill="#4f67c2" stroke="#4f67c2"/>
<polygon points="982.3,672.4 976.9,670.6 976.4,613.9 981.8,615.4" fill="#212b5f" stroke="#212b5f"/>
<polygon points="982.3,672.4 987.4,670.4 987.0,613.7 981.8,615.4" fill="#465ab0" stroke="#465ab0"/>
<polygon points="981.8,615.4 987.0,613.7 981.6,612.3 976.4,613.9" fill="#4f67c2" stroke="#4f67c2"/>
<polygon points="1185.1,631.4 1114.1,614.6 1114.3,608.4 1185.5,624.8" fill="#212b5f" stroke="#212b5f"/>
<polygon points="1185.1,631.4 1188.2,630.0 1188.5,623.5 1185.5,624.8" fill="#465ab0" stroke="#465ab0"/>
<polygon points="1185.5,624.8 1188.5,623.5 1117.5,607.3 1114.3,608.4" fill="#4f67c2" stroke="#4f67c2"/>
<polygon points="1051.8,637.7 1047.1,636.4 1047.2,629.7 1051.9,631.0" fill="#212b5f" stroke="#212b5f"/>
<polygon points="1051.8,637.7 1114.1,614.6 1114.3,608.4 1051.9,631.0" fill="#465ab0" stroke="#465ab0"/>
<polygon points="1051.9,631.0 1114.3,608.4 1109.8,607.4 1047.2,629.7" fill="#4f67c2" stroke="#4f67c2"/>
<polygon points="1043.5,638.7 981.9,621.7 981.8,615.4 1043.6,632.0" fill="#212b5f" stroke="#212b5f"/>
<polygon points="1043.5,638.7 1047.4,637.3 1047.5,630.6 1043.6,632.0" fill="#465ab0" stroke="#465ab0"/>
<polygon points="1043.6,632.0 1047.5,630.6 985.7,614.1 981.8,615.4" fill="#4f67c2" stroke="#4f67c2"/>
<polygon points="914.8,643.2 910.7,641.8 910.5,635.0 914.6,636.3" fill="#212b5f" stroke="#212b5f"/>
<polygon points="914.8,643.2 981.9,621.7 981.8,615.4 914.6,636.3" fill="#465ab0" stroke="#465ab0"/>
<polygon points="914.6,636.3 981.8,615.4 977.7,614.3 910.5,635.0" fill="#4f67c2" stroke="#4f67c2"/>
<polygon points="1132.1,728.0 1126.8,726.3 1127.0,719.4 1132.3,721.1" fill="#212b5f" stroke="#212b5f"/>
<polygon points="1132.1,728.0 1191.7,695.5 1192.0,689.1 1132.3,721.1" fill="#465ab0" stroke="#465ab0"/>
<polygon points="1132.3,721.1 1192.0,689.1 1186.9,687.7 1127.0,719.4" fill="#4f67c2" stroke="#4f67c2"/>
<polygon points="1118.2,726.9 1050.1,704.0 1050.1,697.4 1118.4,720.0" fill="#212b5f" stroke="#212b5f"/>
<polygon points="1118.2,726.9 1121.8,725.0 1122.1,718.1 1118.4,720.0" fill="#465ab0" stroke="#465ab0"/>
<polygon points="1118.4,720.0 1122.1,718.1 1053.9,695.7 1050.1,697.4" fill="#4f67c2" stroke="#4f67c2"/>
<polygon points="821.8,812.7 817.9,810.5 817.5,803.5 821.4,805.8" fill="#212b5f" stroke="#212b5f"/>
<polygon points="821.8,812.7 911.3,771.5 911.1,765.1 821.4,805.8" fill="#465ab0" stroke="#465ab0"/>
<polygon points="821.4,805.8 911.1,765.1 907.1,763.3 817.5,803.5" fill="#4f67c2" stroke="#4f67c2"/>
<polygon points="979.3,883.4 972.1,879.4 971.7,845.4 979.0,849.1" fill="#212b5f" stroke="#212b5f"/>
<polygon points="979.3,883.4 987.0,878.5 986.8,844.5 979.0,849.1" fill="#465ab0" stroke="#465ab0"/>
<polygon points="979.0,849.1 986.8,844.5 979.5,840.9 971.7,845.4" fill="#4f67c2" stroke="#4f67c2"/>
<polygon points="979.0,849.1 971.7,845.4 971.1,792.6 978.5,796.0" fill="#212b5f" stroke="#212b5f"/>
<polygon points="979.0,849.1 986.8,844.5 986.4,791.8 978.5,796.0" fill="#465ab0" stroke="#465ab0"/>
<polygon points="978.5,796.0 986.4,791.8 979.0,788.5 971.1,792.6" fill="#4f67c2" stroke="#4f67c2"/>
<polygon points="980.8,790.8 1045.4,757.1 1045.4,754.4 980.8,787.9" fill="#d0d2d8" stroke="#d0d2d8"/>
<polygon points="980.8,787.9 1045.4,754.4 961.9,722.0 896.6,750.1" fill="#7d7d7d" stroke="#7d7d7d" stroke-width="1.5"/>
<polygon points="1001.7,800.2 980.8,790.8 980.8,787.9 1001.7,797.2" fill="#666666" stroke="#666666"/>
<polygon points="1001.7,800.2 1065.8,765.1 1065.9,762.3 1001.7,797.2" fill="#d0d2d8" stroke="#d0d2d8"/>
<polygon points="1001.7,797.2 1065.9,762.3 1045.4,754.4 980.8,787.9" fill="#7d7d7d" stroke="#7d7d7d" stroke-width="1.5"/>
<polygon points="1084.0,796.6 1092.2,791.6 1065.9,762.3 1057.5,766.9" fill="#f20000" stroke="#f20000"/>
<polygon points="1083.9,801.0 1084.0,796.6 1057.5,766.9 1057.5,771.2" fill="#7a0000" stroke="#7a0000"/>
<polygon points="1083.9,801.0 1092.1,796.0 1092.2,791.6 1084.0,796.6" fill="#fa0000" stroke="#fa0000"/>
<polygon points="1078.2,835.1 1074.4,833.4 1075.4,781.7 1079.3,783.3" fill="#212b5f" stroke="#212b5f"/>
<polygon points="1078.2,835.1 1083.2,831.8 1084.3,780.3 1079.3,783.3" fill="#465ab0" stroke="#465ab0"/>
<polygon points="1079.3,783.3 1084.3,780.3 1080.5,778.8 1075.4,781.7" fill="#4f67c2" stroke="#4f67c2"/>
<polygon points="981.8,731.5 977.2,729.7 977.1,722.8 981.8,724.6" fill="#212b5f" stroke="#212b5f"/>
<polygon points="981.8,731.5 1046.0,702.6 1046.0,696.1 981.8,724.6" fill="#465ab0" stroke="#465ab0"/>
<polygon points="981.8,724.6 1046.0,696.1 1041.5,694.6 977.1,722.8" fill="#4f67c2" stroke="#4f67c2"/>
<polygon points="1100.7,819.2 1078.3,809.6 1078.5,802.7 1100.9,812.2" fill="#212b5f" stroke="#212b5f"/>
<polygon points="1100.7,819.2 1104.0,817.0 1104.2,810.0 1100.9,812.2" fill="#465ab0" stroke="#465ab0"/>
<polygon points="1100.9,812.2 1104.2,810.0 1081.8,800.7 1078.5,802.7" fill="#4f67c2" stroke="#4f67c2"/>
<polygon points="1022.8,780.2 1018.6,778.4 1018.8,717.0 1023.0,718.5" fill="#212b5f" stroke="#212b5f"/>
<polygon points="1022.8,780.2 1027.3,777.7 1027.6,716.4 1023.0,718.5" fill="#465ab0" stroke="#465ab0"/>
<polygon points="1023.0,718.5 1027.6,716.4 1023.4,714.9 1018.8,717.0" fill="#4f67c2" stroke="#4f67c2"/>
<polygon points="1105.8,821.4 1100.7,819.2 1100.9,812.2 1106.0,814.3" fill="#212b5f" stroke="#212b5f"/>
<polygon points="1105.8,821.4 1119.3,812.5 1119.5,805.6 1106.0,814.3" fill="#465ab0" stroke="#465ab0"/>
<polygon points="1106.0,814.3 1119.5,805.6 1114.4,803.5 1100.9,812.2" fill="#4f67c2" stroke="#4f67c2"/>
<polygon points="1106.0,814.3 1078.5,802.7 1078.5,799.9 1106.1,811.4" fill="#666666" stroke="#666666"/>
<polygon points="1106.0,814.3 1119.5,805.6 1119.6,802.8 1106.1,811.4" fill="#d0d2d8" stroke="#d0d2d8"/>
<polygon points="1106.1,811.4 1119.6,802.8 1092.2,791.6 1078.5,799.9" fill="#7d7d7d" stroke="#7d7d7d" stroke-width="1.5"/>
<polygon points="1126.1,785.7 1116.4,781.9 1118.4,720.0 1128.3,723.3" fill="#212b5f" stroke="#212b5f"/>
<polygon points="1126.1,785.7 1130.1,783.2 1132.3,721.1 1128.3,723.3" fill="#465ab0" stroke="#465ab0"/>
<polygon points="1128.3,723.3 1132.3,721.1 1122.5,717.9 1118.4,720.0" fill="#4f67c2" stroke="#4f67c2"/>
<polygon points="1129.2,723.6 1046.0,696.1 1046.1,693.3 1129.3,720.6" fill="#212b5f" stroke="#212b5f"/>
<polygon points="1129.2,723.6 1208.9,680.8 1209.0,678.1 1129.3,720.6" fill="#d0d2d8" stroke="#d0d2d8"/>
<polygon points="1129.3,720.6 1209.0,678.1 1129.6,656.6 1046.1,693.3" fill="#7d7d7d" stroke="#7d7d7d" stroke-width="1.5"/>
<polygon points="1192.1,686.4 1182.5,683.7 1185.5,624.8 1195.3,627.1" fill="#212b5f" stroke="#212b5f"/>
<polygon points="1192.1,686.4 1196.2,684.3 1199.3,625.3 1195.3,627.1" fill="#465ab0" stroke="#465ab0"/>
<polygon points="1195.3,627.1 1199.3,625.3 1189.5,623.1 1185.5,624.8" fill="#4f67c2" stroke="#4f67c2"/>
<polygon points="1050.2,694.6 1043.0,692.3 1043.6,632.0 1050.9,634.0" fill="#212b5f" stroke="#212b5f"/>
<polygon points="1050.2,694.6 1055.2,692.4 1056.0,632.1 1050.9,634.0" fill="#465ab0" stroke="#465ab0"/>
<polygon points="1050.9,634.0 1056.0,632.1 1048.7,630.2 1043.6,632.0" fill="#4f67c2" stroke="#4f67c2"/>
<polygon points="1046.7,629.9 1131.5,599.6 1047.5,581.2 960.3,606.9" fill="#7d7d7d" stroke="#7d7d7d" stroke-width="1.5"/>
<polygon points="1050.9,591.3 1045.5,590.1 1046.1,536.0 1051.6,536.9" fill="#212b5f" stroke="#212b5f"/>
<polygon points="1050.9,591.3 1055.3,589.9 1056.0,535.9 1051.6,536.9" fill="#465ab0" stroke="#465ab0"/>
<polygon points="1051.6,536.9 1056.0,535.9 1050.6,534.9 1046.1,536.0" fill="#4f67c2" stroke="#4f67c2"/>
<polygon points="1109.8,553.6 1051.5,543.0 1051.6,536.9 1110.0,547.2" fill="#212b5f" stroke="#212b5f"/>
<polygon points="1109.8,553.6 1113.0,552.6 1113.2,546.3 1110.0,547.2" fill="#465ab0" stroke="#465ab0"/>
<polygon points="1110.0,547.2 1113.2,546.3 1054.9,536.1 1051.6,536.9" fill="#4f67c2" stroke="#4f67c2"/>
<polygon points="986.7,558.9 982.5,558.0 982.5,551.5 986.6,552.4" fill="#212b5f" stroke="#212b5f"/>
<polygon points="986.7,558.9 1051.5,543.0 1051.6,536.9 986.6,552.4" fill="#465ab0" stroke="#465ab0"/>
<polygon points="986.6,552.4 1051.6,536.9 1047.5,536.2 982.5,551.5" fill="#4f67c2" stroke="#4f67c2"/>
<polygon points="1114.4,605.8 1108.4,604.4 1110.0,547.2 1116.1,548.3" fill="#212b5f" stroke="#212b5f"/>
<polygon points="1114.4,605.8 1118.7,604.2 1120.4,547.1 1116.1,548.3" fill="#465ab0" stroke="#465ab0"/>
<polygon points="1116.1,548.3 1120.4,547.1 1114.3,546.0 1110.0,547.2" fill="#4f67c2" stroke="#4f67c2"/>
<polygon points="981.8,612.6 976.3,611.2 975.8,552.5 981.3,553.6" fill="#212b5f" stroke="#212b5f"/>
<polygon points="981.8,612.6 987.0,611.0 986.6,552.4 981.3,553.6" fill="#465ab0" stroke="#465ab0"/>
<polygon points="981.3,553.6 986.6,552.4 981.1,551.3 975.8,552.5" fill="#4f67c2" stroke="#4f67c2"/>
<polygon points="1188.3,567.8 1115.9,554.7 1116.1,548.3 1188.7,561.0" fill="#212b5f" stroke="#212b5f"/>
<polygon points="1188.3,567.8 1191.4,566.7 1191.8,560.0 1188.7,561.0" fill="#465ab0" stroke="#465ab0"/>
<polygon points="1188.7,561.0 1191.8,560.0 1119.4,547.4 1116.1,548.3" fill="#4f67c2" stroke="#4f67c2"/>
<polygon points="1052.6,572.7 1047.8,571.7 1047.9,564.8 1052.6,565.8" fill="#212b5f" stroke="#212b5f"/>
<polygon points="1052.6,572.7 1115.9,554.7 1116.1,548.3 1052.6,565.8" fill="#465ab0" stroke="#465ab0"/>
<polygon points="1052.6,565.8 1116.1,548.3 1111.5,547.4 1047.9,564.8" fill="#4f67c2" stroke="#4f67c2"/>
<polygon points="1044.2,573.5 981.4,560.2 981.3,553.6 1044.2,566.6" fill="#212b5f" stroke="#212b5f"/>
<polygon points="1044.2,573.5 1048.1,572.4 1048.2,565.5 1044.2,566.6" fill="#465ab0" stroke="#465ab0"/>
<polygon points="1044.2,566.6 1048.2,565.5 985.3,552.7 981.3,553.6" fill="#4f67c2" stroke="#4f67c2"/>
<polygon points="913.0,577.0 908.8,576.0 908.6,568.9 912.8,569.9" fill="#212b5f" stroke="#212b5f"/>
<polygon points="913.0,577.0 981.4,560.2 981.3,553.6 912.8,569.9" fill="#465ab0" stroke="#465ab0"/>
<polygon points="912.8,569.9 981.3,553.6 977.2,552.8 908.6,568.9" fill="#4f67c2" stroke="#4f67c2"/>
<polygon points="1134.5,660.8 1129.1,659.3 1129.3,652.2 1134.8,653.6" fill="#212b5f" stroke="#212b5f"/>
<polygon points="1134.5,660.8 1194.9,633.7 1195.3,627.1 1134.8,653.6" fill="#465ab0" stroke="#465ab0"/>
<polygon points="1134.8,653.6 1195.3,627.1 1190.1,625.9 1129.3,652.2" fill="#4f67c2" stroke="#4f67c2"/>
<polygon points="1120.3,659.9 1050.8,640.7 1050.9,634.0 1120.6,652.7" fill="#212b5f" stroke="#212b5f"/>
<polygon points="1120.3,659.9 1124.1,658.3 1124.3,651.1 1120.6,652.7" fill="#465ab0" stroke="#465ab0"/>
<polygon points="1120.6,652.7 1124.3,651.1 1054.8,632.6 1050.9,634.0" fill="#4f67c2" stroke="#4f67c2"/>
<polygon points="981.3,663.8 976.6,662.2 976.5,655.0 981.2,656.5" fill="#212b5f" stroke="#212b5f"/>
<polygon points="981.3,663.8 1046.6,639.6 1046.7,632.8 981.2,656.5" fill="#465ab0" stroke="#465ab0"/>
<polygon points="981.2,656.5 1046.7,632.8 1042.0,631.6 976.5,655.0" fill="#4f67c2" stroke="#4f67c2"/>
<polygon points="1073.9,848.5 1100.4,809.0 1080.2,800.6 1053.6,839.0" fill="#d40000" stroke="#d40000"/>
<polygon points="1073.8,853.0 1100.3,813.5 1100.4,809.0 1073.9,848.5" fill="#fa0000" stroke="#fa0000"/>
<polygon points="1073.8,853.0 1073.9,848.5 1053.6,839.0 1053.6,843.5" fill="#7a0000" stroke="#7a0000"/>
<polygon points="1028.3,853.2 1042.4,844.3 1015.4,851.8 1001.3,860.6" fill="#c40000" stroke="#c40000"/>
<polygon points="1028.3,857.8 1028.3,853.2 1001.3,860.6 1001.3,865.0" fill="#860000" stroke="#860000"/>
<polygon points="1028.3,857.8 1042.3,848.8 1042.4,844.3 1028.3,853.2" fill="#fa0000" stroke="#fa0000"/>
<polygon points="819.1,898.7 813.5,895.0 811.4,860.1 817.0,863.7" fill="#212b5f" stroke="#212b5f"/>
<polygon points="819.1,898.7 826.4,894.7 824.5,859.9 817.0,863.7" fill="#465ab0" stroke="#465ab0"/>
<polygon points="817.0,863.7 824.5,859.9 818.9,856.4 811.4,860.1" fill="#4f67c2" stroke="#4f67c2"/>
<polygon points="1079.7,851.1 1106.1,811.4 1100.4,809.0 1073.9,848.5" fill="#27326b" stroke="#27326b"/>
<polygon points="1079.5,859.6 1105.9,819.8 1106.1,811.4 1079.7,851.1" fill="#465ab0" stroke="#465ab0"/>
<polygon points="1079.5,859.6 1079.7,851.1 1073.9,848.5 1073.7,856.9" fill="#212b5f" stroke="#212b5f"/>
<polygon points="1128.4,720.3 1118.5,717.0 1120.6,652.7 1130.6,655.4" fill="#212b5f" stroke="#212b5f"/>
<polygon points="1128.4,720.3 1132.4,718.1 1134.8,653.6 1130.6,655.4" fill="#465ab0" stroke="#465ab0"/>
<polygon points="1130.6,655.4 1134.8,653.6 1124.7,650.9 1120.6,652.7" fill="#4f67c2" stroke="#4f67c2"/>
<polygon points="1131.5,655.7 1046.7,632.8 1046.7,629.9 1131.7,652.5" fill="#212b5f" stroke="#212b5f"/>
<polygon points="1131.5,655.7 1212.4,620.1 1212.6,617.4 1131.7,652.5" fill="#d0d2d8" stroke="#d0d2d8"/>
<polygon points="1131.7,652.5 1212.6,617.4 1131.5,599.6 1046.7,629.9" fill="#7d7d7d" stroke="#7d7d7d" stroke-width="1.5"/>
<polygon points="1195.4,624.2 1185.6,622.0 1188.7,561.0 1198.7,562.7" fill="#212b5f" stroke="#212b5f"/>
<polygon points="1195.4,624.2 1199.5,622.5 1202.8,561.4 1198.7,562.7" fill="#465ab0" stroke="#465ab0"/>
<polygon points="1198.7,562.7 1202.8,561.4 1192.8,559.6 1188.7,561.0" fill="#4f67c2" stroke="#4f67c2"/>
<polygon points="1050.9,631.0 1043.6,629.1 1044.2,566.6 1051.7,568.1" fill="#212b5f" stroke="#212b5f"/>
<polygon points="1050.9,631.0 1056.1,629.2 1056.9,566.6 1051.7,568.1" fill="#465ab0" stroke="#465ab0"/>
<polygon points="1051.7,568.1 1056.9,566.6 1049.5,565.1 1044.2,566.6" fill="#4f67c2" stroke="#4f67c2"/>
<polygon points="1047.5,564.2 1133.6,540.8 1048.1,526.6 959.5,546.4" fill="#7d7d7d" stroke="#7d7d7d" stroke-width="1.5"/>
<polygon points="1051.6,534.3 1046.1,533.4 1046.7,477.6 1052.2,478.2" fill="#212b5f" stroke="#212b5f"/>
<polygon points="1051.6,534.3 1056.1,533.3 1056.8,477.5 1052.2,478.2" fill="#465ab0" stroke="#465ab0"/>
<polygon points="1052.2,478.2 1056.8,477.5 1051.2,476.8 1046.7,477.6" fill="#4f67c2" stroke="#4f67c2"/>
<polygon points="1111.5,491.9 1052.2,484.5 1052.2,478.2 1111.7,485.3" fill="#212b5f" stroke="#212b5f"/>
<polygon points="1111.5,491.9 1114.8,491.2 1115.0,484.6 1111.7,485.3" fill="#465ab0" stroke="#465ab0"/>
<polygon points="1111.7,485.3 1115.0,484.6 1055.7,477.7 1052.2,478.2" fill="#4f67c2" stroke="#4f67c2"/>
<polygon points="986.3,495.6 982.1,495.0 982.0,488.3 986.2,488.8" fill="#212b5f" stroke="#212b5f"/>
<polygon points="986.3,495.6 1052.2,484.5 1052.2,478.2 986.2,488.8" fill="#465ab0" stroke="#465ab0"/>
<polygon points="986.2,488.8 1052.2,478.2 1048.1,477.7 982.0,488.3" fill="#4f67c2" stroke="#4f67c2"/>
<polygon points="1116.2,545.5 1110.0,544.4 1111.7,485.3 1118.0,486.0" fill="#212b5f" stroke="#212b5f"/>
<polygon points="1116.2,545.5 1120.5,544.3 1122.4,485.2 1118.0,486.0" fill="#465ab0" stroke="#465ab0"/>
<polygon points="1118.0,486.0 1122.4,485.2 1116.1,484.4 1111.7,485.3" fill="#4f67c2" stroke="#4f67c2"/>
<polygon points="981.3,550.8 975.8,549.7 975.2,488.9 980.8,489.7" fill="#212b5f" stroke="#212b5f"/>
<polygon points="981.3,550.8 986.6,549.6 986.2,488.8 980.8,489.7" fill="#465ab0" stroke="#465ab0"/>
<polygon points="980.8,489.7 986.2,488.8 980.6,488.1 975.2,488.9" fill="#4f67c2" stroke="#4f67c2"/>
<polygon points="1191.6,501.8 1117.8,492.6 1118.0,486.0 1192.0,494.8" fill="#212b5f" stroke="#212b5f"/>
<polygon points="1191.6,501.8 1194.8,501.1 1195.1,494.1 1192.0,494.8" fill="#465ab0" stroke="#465ab0"/>
<polygon points="1192.0,494.8 1195.1,494.1 1121.3,485.4 1118.0,486.0" fill="#4f67c2" stroke="#4f67c2"/>
<polygon points="1053.4,505.3 1048.6,504.6 1048.6,497.4 1053.5,498.1" fill="#212b5f" stroke="#212b5f"/>
<polygon points="1053.4,505.3 1117.8,492.6 1118.0,486.0 1053.5,498.1" fill="#465ab0" stroke="#465ab0"/>
<polygon points="1053.5,498.1 1118.0,486.0 1113.3,485.4 1048.6,497.4" fill="#4f67c2" stroke="#4f67c2"/>
<polygon points="1044.8,505.9 980.9,496.5 980.8,489.7 1044.9,498.6" fill="#212b5f" stroke="#212b5f"/>
<polygon points="1044.8,505.9 1048.8,505.1 1048.9,497.9 1044.9,498.6" fill="#465ab0" stroke="#465ab0"/>
<polygon points="1044.9,498.6 1048.9,497.9 984.9,489.1 980.8,489.7" fill="#4f67c2" stroke="#4f67c2"/>
<polygon points="911.1,508.3 906.9,507.6 906.7,500.3 910.9,501.0" fill="#212b5f" stroke="#212b5f"/>
<polygon points="911.1,508.3 980.9,496.5 980.8,489.7 910.9,501.0" fill="#465ab0" stroke="#465ab0"/>
<polygon points="910.9,501.0 980.8,489.7 976.6,489.1 906.7,500.3" fill="#4f67c2" stroke="#4f67c2"/>
<polygon points="1137.0,590.9 1131.5,589.7 1131.7,582.3 1137.3,583.4" fill="#212b5f" stroke="#212b5f"/>
<polygon points="1137.0,590.9 1198.3,569.6 1198.7,562.7 1137.3,583.4" fill="#465ab0" stroke="#465ab0"/>
<polygon points="1137.3,583.4 1198.7,562.7 1193.4,561.8 1131.7,582.3" fill="#4f67c2" stroke="#4f67c2"/>
<polygon points="1122.6,590.2 1051.6,575.1 1051.7,568.1 1122.8,582.7" fill="#212b5f" stroke="#212b5f"/>
<polygon points="1122.6,590.2 1126.3,588.9 1126.6,581.4 1122.8,582.7" fill="#465ab0" stroke="#465ab0"/>
<polygon points="1122.8,582.7 1126.6,581.4 1055.6,567.0 1051.7,568.1" fill="#4f67c2" stroke="#4f67c2"/>
<polygon points="980.7,593.2 975.9,592.0 975.8,584.5 980.7,585.6" fill="#212b5f" stroke="#212b5f"/>
<polygon points="980.7,593.2 1047.3,574.2 1047.4,567.2 980.7,585.6" fill="#465ab0" stroke="#465ab0"/>
<polygon points="980.7,585.6 1047.4,567.2 1042.7,566.2 975.8,584.5" fill="#4f67c2" stroke="#4f67c2"/>
<polygon points="1061.7,896.6 1056.4,893.9 1056.6,882.0 1061.9,884.7" fill="#212b5f" stroke="#212b5f"/>
<polygon points="1061.7,896.6 1123.8,852.0 1124.2,840.9 1061.9,884.7" fill="#465ab0" stroke="#465ab0"/>
<polygon points="1061.9,884.7 1124.2,840.9 1119.0,838.6 1056.6,882.0" fill="#4f67c2" stroke="#4f67c2"/>
<polygon points="1040.9,892.8 979.1,860.4 979.0,849.1 1041.0,880.9" fill="#212b5f" stroke="#212b5f"/>
<polygon points="1040.9,892.8 1045.2,889.8 1045.3,878.0 1041.0,880.9" fill="#465ab0" stroke="#465ab0"/>
<polygon points="1041.0,880.9 1045.3,878.0 983.4,846.5 979.0,849.1" fill="#4f67c2" stroke="#4f67c2"/>
<polygon points="817.0,863.7 811.4,860.1 808.2,806.0 813.8,809.2" fill="#212b5f" stroke="#212b5f"/>
<polygon points="817.0,863.7 824.5,859.9 821.4,805.8 813.8,809.2" fill="#465ab0" stroke="#465ab0"/>
<polygon points="813.8,809.2 821.4,805.8 815.7,802.6 808.2,806.0" fill="#4f67c2" stroke="#4f67c2"/>
<polygon points="1028.7,786.4 1043.1,778.5 1015.6,788.4 1001.2,796.2" fill="#c40000" stroke="#c40000"/>
<polygon points="1028.6,791.2 1028.7,786.4 1001.2,796.2 1001.2,800.8" fill="#860000" stroke="#860000"/>
<polygon points="1028.6,791.2 1043.0,783.2 1043.1,778.5 1028.7,786.4" fill="#fa0000" stroke="#fa0000"/>
<polygon points="890.4,909.0 885.9,906.1 885.5,894.0 890.0,896.8" fill="#212b5f" stroke="#212b5f"/>
<polygon points="890.4,909.0 975.1,858.3 975.0,847.0 890.0,896.8" fill="#465ab0" stroke="#465ab0"/>
<polygon points="890.0,896.8 975.0,847.0 970.5,844.7 885.5,894.0" fill="#4f67c2" stroke="#4f67c2"/>
<polygon points="1130.7,652.3 1120.7,649.6 1122.8,582.7 1133.1,584.8" fill="#212b5f" stroke="#212b5f"/>
<polygon points="1130.7,652.3 1134.9,650.5 1137.3,583.4 1133.1,584.8" fill="#465ab0" stroke="#465ab0"/>
<polygon points="1133.1,584.8 1137.3,583.4 1127.0,581.3 1122.8,582.7" fill="#4f67c2" stroke="#4f67c2"/>
<polygon points="1134.0,585.0 1047.4,567.2 1047.5,564.2 1134.2,581.8" fill="#212b5f" stroke="#212b5f"/>
<polygon points="1134.0,585.0 1216.0,557.3 1216.2,554.5 1134.2,581.8" fill="#d0d2d8" stroke="#d0d2d8"/>
<polygon points="1134.2,581.8 1216.2,554.5 1133.6,540.8 1047.5,564.2" fill="#7d7d7d" stroke="#7d7d7d" stroke-width="1.5"/>
<polygon points="1198.9,559.8 1188.8,558.0 1192.0,494.8 1202.3,496.0" fill="#212b5f" stroke="#212b5f"/>
<polygon points="1198.9,559.8 1203.0,558.4 1206.4,495.0 1202.3,496.0" fill="#465ab0" stroke="#465ab0"/>
<polygon points="1202.3,496.0 1206.4,495.0 1196.2,493.8 1192.0,494.8" fill="#4f67c2" stroke="#4f67c2"/>
<polygon points="1051.7,565.1 1044.3,563.6 1044.9,498.6 1052.5,499.7" fill="#212b5f" stroke="#212b5f"/>
<polygon points="1051.7,565.1 1056.9,563.6 1057.8,498.7 1052.5,499.7" fill="#465ab0" stroke="#465ab0"/>
<polygon points="1052.5,499.7 1057.8,498.7 1050.2,497.6 1044.9,498.6" fill="#4f67c2" stroke="#4f67c2"/>
<polygon points="1048.2,496.0 1135.7,479.9 1048.7,470.2 958.6,483.8" fill="#7d7d7d" stroke="#7d7d7d" stroke-width="1.5"/>
<polygon points="1052.3,475.5 1046.7,474.9 1047.3,417.2 1053.0,417.5" fill="#212b5f" stroke="#212b5f"/>
<polygon points="1052.3,475.5 1056.8,474.8 1057.6,417.2 1053.0,417.5" fill="#465ab0" stroke="#465ab0"/>
<polygon points="1053.0,417.5 1057.6,417.2 1051.9,416.8 1047.3,417.2" fill="#4f67c2" stroke="#4f67c2"/>
<polygon points="1113.3,428.0 1052.9,424.0 1053.0,417.5 1113.5,421.2" fill="#212b5f" stroke="#212b5f"/>
<polygon points="1113.3,428.0 1116.7,427.6 1116.9,420.8 1113.5,421.2" fill="#465ab0" stroke="#465ab0"/>
<polygon points="1113.5,421.2 1116.9,420.8 1056.4,417.3 1053.0,417.5" fill="#4f67c2" stroke="#4f67c2"/>
<polygon points="985.9,430.0 981.6,429.7 981.5,422.7 985.8,423.0" fill="#212b5f" stroke="#212b5f"/>
<polygon points="985.9,430.0 1052.9,424.0 1053.0,417.5 985.8,423.0" fill="#465ab0" stroke="#465ab0"/>
<polygon points="985.8,423.0 1053.0,417.5 1048.7,417.3 981.5,422.7" fill="#4f67c2" stroke="#4f67c2"/>
<polygon points="1118.1,483.1 1111.8,482.4 1113.5,421.2 1119.9,421.5" fill="#212b5f" stroke="#212b5f"/>
<polygon points="1118.1,483.1 1122.5,482.3 1124.4,421.1 1119.9,421.5" fill="#465ab0" stroke="#465ab0"/>
<polygon points="1119.9,421.5 1124.4,421.1 1118.0,420.7 1113.5,421.2" fill="#4f67c2" stroke="#4f67c2"/>
<polygon points="980.8,486.8 975.2,486.0 974.6,423.1 980.3,423.5" fill="#212b5f" stroke="#212b5f"/>
<polygon points="980.8,486.8 986.2,485.9 985.8,423.0 980.3,423.5" fill="#465ab0" stroke="#465ab0"/>
<polygon points="980.3,423.5 985.8,423.0 980.1,422.6 974.6,423.1" fill="#4f67c2" stroke="#4f67c2"/>
<polygon points="1195.1,433.4 1119.7,428.4 1119.9,421.5 1195.4,426.1" fill="#212b5f" stroke="#212b5f"/>
<polygon points="1195.1,433.4 1198.3,433.0 1198.6,425.7 1195.4,426.1" fill="#465ab0" stroke="#465ab0"/>
<polygon points="1195.4,426.1 1198.6,425.7 1123.2,421.2 1119.9,421.5" fill="#4f67c2" stroke="#4f67c2"/>
<polygon points="1054.2,435.3 1049.3,434.9 1049.4,427.4 1054.3,427.8" fill="#212b5f" stroke="#212b5f"/>
<polygon points="1054.2,435.3 1119.7,428.4 1119.9,421.5 1054.3,427.8" fill="#465ab0" stroke="#465ab0"/>
<polygon points="1054.3,427.8 1119.9,421.5 1115.1,421.3 1049.4,427.4" fill="#4f67c2" stroke="#4f67c2"/>
<polygon points="1045.5,435.6 980.4,430.5 980.3,423.5 1045.6,428.1" fill="#212b5f" stroke="#212b5f"/>
<polygon points="1045.5,435.6 1049.6,435.2 1049.7,427.7 1045.6,428.1" fill="#465ab0" stroke="#465ab0"/>
<polygon points="1045.6,428.1 1049.7,427.7 984.5,423.1 980.3,423.5" fill="#4f67c2" stroke="#4f67c2"/>
<polygon points="909.2,436.9 904.9,436.5 904.7,428.9 909.0,429.3" fill="#212b5f" stroke="#212b5f"/>
<polygon points="909.2,436.9 980.4,430.5 980.3,423.5 909.0,429.3" fill="#465ab0" stroke="#465ab0"/>
<polygon points="909.0,429.3 980.3,423.5 976.0,423.2 904.7,428.9" fill="#4f67c2" stroke="#4f67c2"/>
<polygon points="1139.7,518.1 1134.0,517.3 1134.2,509.5 1139.9,510.3" fill="#212b5f" stroke="#212b5f"/>
<polygon points="1139.7,518.1 1201.9,503.1 1202.3,496.0 1139.9,510.3" fill="#465ab0" stroke="#465ab0"/>
<polygon points="1139.9,510.3 1202.3,496.0 1196.8,495.3 1134.2,509.5" fill="#4f67c2" stroke="#4f67c2"/>
<polygon points="1124.9,517.6 1052.4,507.0 1052.5,499.7 1125.1,509.8" fill="#212b5f" stroke="#212b5f"/>
<polygon points="1124.9,517.6 1128.7,516.7 1129.0,508.9 1125.1,509.8" fill="#465ab0" stroke="#465ab0"/>
<polygon points="1125.1,509.8 1129.0,508.9 1056.5,498.9 1052.5,499.7" fill="#4f67c2" stroke="#4f67c2"/>
<polygon points="980.1,519.7 975.2,518.9 975.1,511.0 980.1,511.8" fill="#212b5f" stroke="#212b5f"/>
<polygon points="980.1,519.7 1048.1,506.4 1048.1,499.1 980.1,511.8" fill="#465ab0" stroke="#465ab0"/>
<polygon points="980.1,511.8 1048.1,499.1 1043.3,498.4 975.1,511.0" fill="#4f67c2" stroke="#4f67c2"/>
<polygon points="1041.5,832.0 978.6,802.8 978.5,796.0 1041.6,824.9" fill="#212b5f" stroke="#212b5f"/>
<polygon points="1041.5,832.0 1045.9,829.3 1046.0,822.2 1041.6,824.9" fill="#465ab0" stroke="#465ab0"/>
<polygon points="1041.6,824.9 1046.0,822.2 983.0,793.7 978.5,796.0" fill="#4f67c2" stroke="#4f67c2"/>
<polygon points="1050.8,874.7 1037.7,868.1 1037.8,860.9 1050.9,867.4" fill="#212b5f" stroke="#212b5f"/>
<polygon points="1050.8,874.7 1054.6,872.1 1054.7,864.8 1050.9,867.4" fill="#465ab0" stroke="#465ab0"/>
<polygon points="1050.9,867.4 1054.7,864.8 1041.6,858.4 1037.8,860.9" fill="#4f67c2" stroke="#4f67c2"/>
<polygon points="1056.1,877.3 1050.8,874.7 1050.9,867.4 1056.2,870.0" fill="#212b5f" stroke="#212b5f"/>
<polygon points="1056.1,877.3 1079.5,861.2 1079.6,854.1 1056.2,870.0" fill="#465ab0" stroke="#465ab0"/>
<polygon points="1056.2,870.0 1079.6,854.1 1074.4,851.6 1050.9,867.4" fill="#4f67c2" stroke="#4f67c2"/>
<polygon points="1056.2,870.0 1028.3,856.2 1028.3,853.2 1056.2,867.0" fill="#666666" stroke="#666666"/>
<polygon points="1056.2,870.0 1079.6,854.1 1079.7,851.1 1056.2,867.0" fill="#d0d2d8" stroke="#d0d2d8"/>
<polygon points="1056.2,867.0 1079.7,851.1 1052.0,838.2 1028.3,853.2" fill="#7d7d7d" stroke="#7d7d7d" stroke-width="1.5"/>
<polygon points="888.1,846.7 883.6,844.1 883.3,836.8 887.9,839.3" fill="#212b5f" stroke="#212b5f"/>
<polygon points="888.1,846.7 974.5,800.9 974.4,794.1 887.9,839.3" fill="#465ab0" stroke="#465ab0"/>
<polygon points="887.9,839.3 974.4,794.1 969.9,792.0 883.3,836.8" fill="#4f67c2" stroke="#4f67c2"/>
<polygon points="874.7,912.2 817.7,875.2 817.0,863.7 874.2,899.9" fill="#212b5f" stroke="#212b5f"/>
<polygon points="874.7,912.2 880.1,909.0 879.6,896.8 874.2,899.9" fill="#465ab0" stroke="#465ab0"/>
<polygon points="874.2,899.9 879.6,896.8 822.4,860.9 817.0,863.7" fill="#4f67c2" stroke="#4f67c2"/>
<polygon points="1055.7,925.2 1040.7,917.0 1041.0,880.9 1056.2,888.7" fill="#212b5f" stroke="#212b5f"/>
<polygon points="1055.7,925.2 1061.3,920.9 1061.9,884.7 1056.2,888.7" fill="#465ab0" stroke="#465ab0"/>
<polygon points="1056.2,888.7 1061.9,884.7 1046.8,877.0 1041.0,880.9" fill="#4f67c2" stroke="#4f67c2"/>
<polygon points="1133.2,581.6 1122.9,579.5 1125.1,509.8 1135.7,511.3" fill="#212b5f" stroke="#212b5f"/>
<polygon points="1133.2,581.6 1137.4,580.2 1139.9,510.3 1135.7,511.3" fill="#465ab0" stroke="#465ab0"/>
<polygon points="1135.7,511.3 1139.9,510.3 1129.4,508.8 1125.1,509.8" fill="#4f67c2" stroke="#4f67c2"/>
<polygon points="1136.6,511.4 1048.1,499.1 1048.2,496.0 1136.7,508.0" fill="#212b5f" stroke="#212b5f"/>
<polygon points="1136.6,511.4 1219.8,492.3 1220.0,489.3 1136.7,508.0" fill="#d0d2d8" stroke="#d0d2d8"/>
<polygon points="1136.7,508.0 1220.0,489.3 1135.7,479.9 1048.2,496.0" fill="#7d7d7d" stroke="#7d7d7d" stroke-width="1.5"/>
<polygon points="1202.4,492.9 1192.1,491.7 1195.4,426.1 1205.9,426.7" fill="#212b5f" stroke="#212b5f"/>
<polygon points="1202.4,492.9 1206.6,492.0 1210.1,426.2 1205.9,426.7" fill="#465ab0" stroke="#465ab0"/>
<polygon points="1205.9,426.7 1210.1,426.2 1199.7,425.6 1195.4,426.1" fill="#4f67c2" stroke="#4f67c2"/>
<polygon points="1052.5,496.5 1044.9,495.5 1045.6,428.1 1053.3,428.6" fill="#212b5f" stroke="#212b5f"/>
<polygon points="1052.5,496.5 1057.9,495.6 1058.8,428.1 1053.3,428.6" fill="#465ab0" stroke="#465ab0"/>
<polygon points="1053.3,428.6 1058.8,428.1 1051.0,427.6 1045.6,428.1" fill="#4f67c2" stroke="#4f67c2"/>
<polygon points="1048.9,425.0 1137.9,417.0 1049.4,412.1 957.7,418.9" fill="#7d7d7d" stroke="#7d7d7d" stroke-width="1.5"/>
<polygon points="1142.4,442.3 1136.6,441.8 1136.9,433.7 1142.7,434.1" fill="#212b5f" stroke="#212b5f"/>
<polygon points="1142.4,442.3 1205.5,434.1 1205.9,426.7 1142.7,434.1" fill="#465ab0" stroke="#465ab0"/>
<polygon points="1142.7,434.1 1205.9,426.7 1200.4,426.4 1136.9,433.7" fill="#4f67c2" stroke="#4f67c2"/>
<polygon points="1127.3,442.0 1053.3,436.2 1053.3,428.6 1127.6,433.8" fill="#212b5f" stroke="#212b5f"/>
<polygon points="1127.3,442.0 1131.2,441.5 1131.5,433.4 1127.6,433.8" fill="#465ab0" stroke="#465ab0"/>
<polygon points="1127.6,433.8 1131.5,433.4 1057.4,428.2 1053.3,428.6" fill="#4f67c2" stroke="#4f67c2"/>
<polygon points="979.5,443.1 974.5,442.7 974.4,434.5 979.5,434.9" fill="#212b5f" stroke="#212b5f"/>
<polygon points="979.5,443.1 1048.8,435.9 1048.9,428.3 979.5,434.9" fill="#465ab0" stroke="#465ab0"/>
<polygon points="979.5,434.9 1048.9,428.3 1044.0,427.9 974.4,434.5" fill="#4f67c2" stroke="#4f67c2"/>
<polygon points="1056.2,888.7 1041.0,880.9 1041.6,824.9 1057.0,831.9" fill="#212b5f" stroke="#212b5f"/>
<polygon points="1056.2,888.7 1061.9,884.7 1062.8,828.3 1057.0,831.9" fill="#465ab0" stroke="#465ab0"/>
<polygon points="1057.0,831.9 1062.8,828.3 1047.4,821.3 1041.6,824.9" fill="#4f67c2" stroke="#4f67c2"/>
<polygon points="872.1,849.6 814.2,816.2 813.8,809.2 871.8,842.2" fill="#212b5f" stroke="#212b5f"/>
<polygon points="872.1,849.6 877.6,846.7 877.3,839.3 871.8,842.2" fill="#465ab0" stroke="#465ab0"/>
<polygon points="871.8,842.2 877.3,839.3 819.3,806.7 813.8,809.2" fill="#4f67c2" stroke="#4f67c2"/>
<polygon points="849.3,829.6 956.5,777.0 896.6,750.1 790.0,795.9" fill="#7d7d7d" stroke="#7d7d7d" stroke-width="1.5"/>
<polygon points="911.0,762.4 906.6,760.4 904.8,701.3 909.3,703.0" fill="#212b5f" stroke="#212b5f"/>
<polygon points="911.0,762.4 917.9,759.2 916.3,700.3 909.3,703.0" fill="#465ab0" stroke="#465ab0"/>
<polygon points="909.3,703.0 916.3,700.3 911.8,698.6 904.8,701.3" fill="#4f67c2" stroke="#4f67c2"/>
<polygon points="970.5,733.8 909.5,709.6 909.3,703.0 970.4,726.8" fill="#212b5f" stroke="#212b5f"/>
<polygon points="970.5,733.8 975.0,731.8 974.9,724.8 970.4,726.8" fill="#465ab0" stroke="#465ab0"/>
<polygon points="970.4,726.8 974.9,724.8 913.8,701.3 909.3,703.0" fill="#4f67c2" stroke="#4f67c2"/>
<polygon points="818.0,745.4 814.0,743.5 813.6,736.3 817.6,738.2" fill="#212b5f" stroke="#212b5f"/>
<polygon points="818.0,745.4 909.5,709.6 909.3,703.0 817.6,738.2" fill="#465ab0" stroke="#465ab0"/>
<polygon points="817.6,738.2 909.3,703.0 905.2,701.4 813.6,736.3" fill="#4f67c2" stroke="#4f67c2"/>
<polygon points="813.7,806.2 808.0,803.0 804.1,738.4 809.8,741.2" fill="#212b5f" stroke="#212b5f"/>
<polygon points="813.7,806.2 821.3,802.8 817.6,738.2 809.8,741.2" fill="#465ab0" stroke="#465ab0"/>
<polygon points="809.8,741.2 817.6,738.2 811.8,735.4 804.1,738.4" fill="#4f67c2" stroke="#4f67c2"/>
<polygon points="840.7,837.1 781.6,802.6 781.4,799.6 840.5,833.9" fill="#666666" stroke="#666666"/>
<polygon points="840.7,837.1 849.4,832.7 849.3,829.6 840.5,833.9" fill="#d0d2d8" stroke="#d0d2d8"/>
<polygon points="840.5,833.9 849.3,829.6 790.0,795.9 781.4,799.6" fill="#7d7d7d" stroke="#7d7d7d" stroke-width="1.5"/>
<polygon points="1135.8,507.9 1125.2,506.4 1127.6,433.8 1138.3,434.6" fill="#212b5f" stroke="#212b5f"/>
<polygon points="1135.8,507.9 1140.1,506.9 1142.7,434.1 1138.3,434.6" fill="#465ab0" stroke="#465ab0"/>
<polygon points="1138.3,434.6 1142.7,434.1 1131.9,433.3 1127.6,433.8" fill="#4f67c2" stroke="#4f67c2"/>
<polygon points="1139.3,434.7 1048.9,428.3 1048.9,425.0 1139.5,431.1" fill="#212b5f" stroke="#212b5f"/>
<polygon points="1139.3,434.7 1223.7,424.8 1223.9,421.7 1139.5,431.1" fill="#d0d2d8" stroke="#d0d2d8"/>
<polygon points="1139.5,431.1 1223.9,421.7 1137.9,417.0 1048.9,425.0" fill="#7d7d7d" stroke="#7d7d7d" stroke-width="1.5"/>
<polygon points="880.7,940.4 875.8,937.1 874.2,899.9 879.2,903.1" fill="#212b5f" stroke="#212b5f"/>
<polygon points="880.7,940.4 891.4,933.8 890.0,896.8 879.2,903.1" fill="#465ab0" stroke="#465ab0"/>
<polygon points="879.2,903.1 890.0,896.8 885.0,893.7 874.2,899.9" fill="#4f67c2" stroke="#4f67c2"/>
<polygon points="879.2,903.1 874.2,899.9 871.8,842.2 876.9,845.0" fill="#212b5f" stroke="#212b5f"/>
<polygon points="879.2,903.1 890.0,896.8 887.9,839.3 876.9,845.0" fill="#465ab0" stroke="#465ab0"/>
<polygon points="876.9,845.0 887.9,839.3 882.8,836.5 871.8,842.2" fill="#4f67c2" stroke="#4f67c2"/>
<polygon points="873.8,846.7 849.4,832.7 849.3,829.6 873.6,843.5" fill="#666666" stroke="#666666"/>
<polygon points="873.6,843.5 980.8,787.9 956.5,777.0 849.3,829.6" fill="#7d7d7d" stroke="#7d7d7d" stroke-width="1.5"/>
<polygon points="869.1,777.6 810.3,748.5 809.8,741.2 868.8,769.8" fill="#212b5f" stroke="#212b5f"/>
<polygon points="869.1,777.6 874.7,775.0 874.4,767.3 868.8,769.8" fill="#465ab0" stroke="#465ab0"/>
<polygon points="868.8,769.8 874.4,767.3 815.4,739.0 809.8,741.2" fill="#4f67c2" stroke="#4f67c2"/>
<polygon points="967.6,964.2 962.2,960.8 962.0,947.7 967.4,951.0" fill="#212b5f" stroke="#212b5f"/>
<polygon points="967.6,964.2 1056.0,900.7 1056.2,888.7 967.4,951.0" fill="#465ab0" stroke="#465ab0"/>
<polygon points="967.4,951.0 1056.2,888.7 1050.9,886.0 962.0,947.7" fill="#4f67c2" stroke="#4f67c2"/>
<polygon points="953.0,962.9 879.7,915.4 879.2,903.1 952.7,949.8" fill="#212b5f" stroke="#212b5f"/>
<polygon points="953.0,962.9 958.4,959.1 958.2,946.0 952.7,949.8" fill="#465ab0" stroke="#465ab0"/>
<polygon points="952.7,949.8 958.2,946.0 884.6,899.9 879.2,903.1" fill="#4f67c2" stroke="#4f67c2"/>
<polygon points="966.7,896.7 961.2,893.6 961.1,885.7 966.6,888.7" fill="#212b5f" stroke="#212b5f"/>
<polygon points="966.7,896.7 1056.9,839.2 1057.0,831.9 966.6,888.7" fill="#465ab0" stroke="#465ab0"/>
<polygon points="966.6,888.7 1057.0,831.9 1051.6,829.4 961.1,885.7" fill="#4f67c2" stroke="#4f67c2"/>
<polygon points="951.8,895.6 877.2,852.5 876.9,845.0 951.6,887.6" fill="#212b5f" stroke="#212b5f"/>
<polygon points="951.8,895.6 957.3,892.1 957.2,884.2 951.6,887.6" fill="#465ab0" stroke="#465ab0"/>
<polygon points="951.6,887.6 957.2,884.2 882.4,842.2 876.9,845.0" fill="#4f67c2" stroke="#4f67c2"/>
<polygon points="891.5,856.8 873.8,846.7 873.6,843.5 891.4,853.6" fill="#666666" stroke="#666666"/>
<polygon points="891.4,853.6 998.5,795.8 980.8,787.9 873.6,843.5" fill="#7d7d7d" stroke="#7d7d7d" stroke-width="1.5"/>
<polygon points="978.5,793.1 971.1,789.7 970.4,726.8 977.9,729.7" fill="#212b5f" stroke="#212b5f"/>
<polygon points="978.5,793.1 986.4,788.9 986.0,726.1 977.9,729.7" fill="#465ab0" stroke="#465ab0"/>
<polygon points="977.9,729.7 986.0,726.1 978.4,723.3 970.4,726.8" fill="#4f67c2" stroke="#4f67c2"/>
<polygon points="980.3,725.2 1046.0,696.1 1046.1,693.3 980.3,722.2" fill="#d0d2d8" stroke="#d0d2d8"/>
<polygon points="980.3,722.2 1046.1,693.3 961.1,665.4 894.5,689.6" fill="#7d7d7d" stroke="#7d7d7d" stroke-width="1.5"/>
<polygon points="1001.5,733.4 980.3,725.2 980.3,722.2 1001.5,730.3" fill="#666666" stroke="#666666"/>
<polygon points="1001.5,733.4 1066.9,703.0 1066.9,700.1 1001.5,730.3" fill="#d0d2d8" stroke="#d0d2d8"/>
<polygon points="1001.5,730.3 1066.9,700.1 1046.1,693.3 980.3,722.2" fill="#7d7d7d" stroke="#7d7d7d" stroke-width="1.5"/>
<polygon points="1085.4,733.1 1093.8,728.7 1066.9,700.1 1058.4,704.1" fill="#f20000" stroke="#f20000"/>
<polygon points="1085.3,737.6 1085.4,733.1 1058.4,704.1 1058.4,708.5" fill="#7a0000" stroke="#7a0000"/>
<polygon points="1085.3,737.6 1093.7,733.2 1093.8,728.7 1085.4,733.1" fill="#fa0000" stroke="#fa0000"/>
<polygon points="1079.3,780.4 1075.5,778.9 1076.7,717.4 1080.6,718.7" fill="#212b5f" stroke="#212b5f"/>
<polygon points="1079.3,780.4 1084.4,777.5 1085.8,716.2 1080.6,718.7" fill="#465ab0" stroke="#465ab0"/>
<polygon points="1080.6,718.7 1085.8,716.2 1081.9,714.8 1076.7,717.4" fill="#4f67c2" stroke="#4f67c2"/>
<polygon points="1102.5,754.4 1079.6,746.0 1079.8,738.9 1102.7,747.1" fill="#212b5f" stroke="#212b5f"/>
<polygon points="1102.5,754.4 1105.8,752.5 1106.1,745.3 1102.7,747.1" fill="#465ab0" stroke="#465ab0"/>
<polygon points="1102.7,747.1 1106.1,745.3 1083.2,737.1 1079.8,738.9" fill="#4f67c2" stroke="#4f67c2"/>
<polygon points="1023.0,715.5 1018.8,714.0 1019.0,650.2 1023.3,651.5" fill="#212b5f" stroke="#212b5f"/>
<polygon points="1023.0,715.5 1027.6,713.4 1028.0,649.7 1023.3,651.5" fill="#465ab0" stroke="#465ab0"/>
<polygon points="1023.3,651.5 1028.0,649.7 1023.7,648.4 1019.0,650.2" fill="#4f67c2" stroke="#4f67c2"/>
<polygon points="1107.7,756.3 1102.5,754.4 1102.7,747.1 1107.9,749.0" fill="#212b5f" stroke="#212b5f"/>
<polygon points="1107.7,756.3 1121.4,748.6 1121.7,741.4 1107.9,749.0" fill="#465ab0" stroke="#465ab0"/>
<polygon points="1107.9,749.0 1121.7,741.4 1116.4,739.6 1102.7,747.1" fill="#4f67c2" stroke="#4f67c2"/>
<polygon points="1107.9,749.0 1079.8,738.9 1079.8,736.0 1108.0,746.0" fill="#666666" stroke="#666666"/>
<polygon points="1107.9,749.0 1121.7,741.4 1121.8,738.4 1108.0,746.0" fill="#d0d2d8" stroke="#d0d2d8"/>
<polygon points="1108.0,746.0 1121.8,738.4 1093.8,728.7 1079.8,736.0" fill="#7d7d7d" stroke="#7d7d7d" stroke-width="1.5"/>
<polygon points="845.8,758.3 955.4,712.8 894.5,689.6 785.7,729.1" fill="#7d7d7d" stroke="#7d7d7d" stroke-width="1.5"/>
<polygon points="909.2,700.2 904.7,698.4 902.8,637.1 907.4,638.6" fill="#212b5f" stroke="#212b5f"/>
<polygon points="909.2,700.2 916.3,697.5 914.6,636.3 907.4,638.6" fill="#465ab0" stroke="#465ab0"/>
<polygon points="907.4,638.6 914.6,636.3 910.0,634.9 902.8,637.1" fill="#4f67c2" stroke="#4f67c2"/>
<polygon points="969.7,665.7 907.6,645.5 907.4,638.6 969.6,658.4" fill="#212b5f" stroke="#212b5f"/>
<polygon points="969.7,665.7 974.3,664.0 974.2,656.7 969.6,658.4" fill="#465ab0" stroke="#465ab0"/>
<polygon points="969.6,658.4 974.2,656.7 912.0,637.1 907.4,638.6" fill="#4f67c2" stroke="#4f67c2"/>
<polygon points="814.1,675.4 810.0,673.7 809.6,666.2 813.6,667.8" fill="#212b5f" stroke="#212b5f"/>
<polygon points="814.1,675.4 907.6,645.5 907.4,638.6 813.6,667.8" fill="#465ab0" stroke="#465ab0"/>
<polygon points="813.6,667.8 907.4,638.6 903.3,637.3 809.6,666.2" fill="#4f67c2" stroke="#4f67c2"/>
<polygon points="1075.2,782.2 1102.2,743.9 1081.5,736.6 1054.5,773.9" fill="#d40000" stroke="#d40000"/>
<polygon points="1075.1,786.9 1102.0,748.6 1102.2,743.9 1075.2,782.2" fill="#fa0000" stroke="#fa0000"/>
<polygon points="1075.1,786.9 1075.2,782.2 1054.5,773.9 1054.4,778.5" fill="#7a0000" stroke="#7a0000"/>
<polygon points="1081.1,784.6 1108.0,746.0 1102.2,743.9 1075.2,782.2" fill="#27326b" stroke="#27326b"/>
<polygon points="1080.9,793.4 1107.8,754.7 1108.0,746.0 1081.1,784.6" fill="#465ab0" stroke="#465ab0"/>
<polygon points="1080.9,793.4 1081.1,784.6 1075.2,782.2 1075.0,791.0" fill="#212b5f" stroke="#212b5f"/>
<polygon points="1029.1,716.8 1043.7,710.1 1015.7,722.4 1001.0,729.1" fill="#c40000" stroke="#c40000"/>
<polygon points="1029.1,721.8 1029.1,716.8 1001.0,729.1 1001.0,733.9" fill="#860000" stroke="#860000"/>
<polygon points="1029.1,721.8 1043.7,715.0 1043.7,710.1 1029.1,716.8" fill="#fa0000" stroke="#fa0000"/>
<polygon points="1042.2,762.3 978.0,736.8 977.9,729.7 1042.3,754.8" fill="#212b5f" stroke="#212b5f"/>
<polygon points="1042.2,762.3 1046.7,759.9 1046.7,752.5 1042.3,754.8" fill="#465ab0" stroke="#465ab0"/>
<polygon points="1042.3,754.8 1046.7,752.5 982.5,727.7 977.9,729.7" fill="#4f67c2" stroke="#4f67c2"/>
<polygon points="809.6,738.1 803.9,735.3 799.8,668.0 805.7,670.3" fill="#212b5f" stroke="#212b5f"/>
<polygon points="809.6,738.1 817.4,735.1 813.6,667.8 805.7,670.3" fill="#465ab0" stroke="#465ab0"/>
<polygon points="805.7,670.3 813.6,667.8 807.8,665.5 799.8,668.0" fill="#4f67c2" stroke="#4f67c2"/>
<polygon points="885.5,775.0 880.9,772.8 880.6,765.1 885.2,767.3" fill="#212b5f" stroke="#212b5f"/>
<polygon points="885.5,775.0 973.8,735.2 973.8,728.1 885.2,767.3" fill="#465ab0" stroke="#465ab0"/>
<polygon points="885.2,767.3 973.8,728.1 969.1,726.3 880.6,765.1" fill="#4f67c2" stroke="#4f67c2"/>
<polygon points="837.0,765.4 777.0,735.4 776.8,732.4 836.8,762.1" fill="#666666" stroke="#666666"/>
<polygon points="837.0,765.4 846.0,761.6 845.8,758.3 836.8,762.1" fill="#d0d2d8" stroke="#d0d2d8"/>
<polygon points="836.8,762.1 845.8,758.3 785.7,729.1 776.8,732.4" fill="#7d7d7d" stroke="#7d7d7d" stroke-width="1.5"/>
<polygon points="865.9,702.3 806.1,677.9 805.7,670.3 865.6,694.2" fill="#212b5f" stroke="#212b5f"/>
<polygon points="865.9,702.3 871.7,700.2 871.4,692.2 865.6,694.2" fill="#465ab0" stroke="#465ab0"/>
<polygon points="865.6,694.2 871.4,692.2 811.4,668.5 805.7,670.3" fill="#4f67c2" stroke="#4f67c2"/>
<polygon points="876.7,841.8 871.7,839.0 868.8,769.8 873.9,772.3" fill="#212b5f" stroke="#212b5f"/>
<polygon points="876.7,841.8 887.8,836.1 885.2,767.3 873.9,772.3" fill="#465ab0" stroke="#465ab0"/>
<polygon points="873.9,772.3 885.2,767.3 880.0,764.9 868.8,769.8" fill="#4f67c2" stroke="#4f67c2"/>
<polygon points="870.8,773.7 846.0,761.6 845.8,758.3 870.6,770.4" fill="#666666" stroke="#666666"/>
<polygon points="870.6,770.4 980.3,722.2 955.4,712.8 845.8,758.3" fill="#7d7d7d" stroke="#7d7d7d" stroke-width="1.5"/>
<polygon points="1065.9,231.7 969.9,243.0 969.9,240.8 1066.0,229.2" fill="#666666" stroke="#666666"/>
<polygon points="1065.9,231.7 1147.1,245.1 1147.2,242.9 1066.0,229.2" fill="#d0d2d8" stroke="#d0d2d8"/>
<polygon points="1065.9,231.7 1147.1,245.1 1054.0,254.2 969.9,243.0" fill="#5a5a5a" stroke="#5a5a5a"/>
<polygon points="1065.0,278.5 972.1,285.3 971.7,243.0 1065.7,231.9" fill="#7d0000" stroke="#7d0000"/>
<polygon points="1065.0,278.5 1144.0,286.6 1145.4,245.1 1065.7,231.9" fill="#fa0000" stroke="#fa0000"/>
<polygon points="1065.0,278.5 1144.0,286.6 1053.7,292.1 972.1,285.3" fill="#a80000" stroke="#a80000"/>
<polygon points="1054.8,304.4 1046.8,304.7 1046.9,292.4 1055.0,291.9" fill="#212b5f" stroke="#212b5f"/>
<polygon points="1054.8,304.4 1060.4,304.7 1060.6,292.4 1055.0,291.9" fill="#465ab0" stroke="#465ab0"/>
<polygon points="1054.8,304.4 1060.4,304.7 1052.4,305.1 1046.8,304.7" fill="#1b234f" stroke="#1b234f"/>
<polygon points="1054.3,351.3 1046.4,351.3 1046.8,304.7 1054.8,304.4" fill="#212b5f" stroke="#212b5f"/>
<polygon points="1054.3,351.3 1059.8,351.3 1060.4,304.7 1054.8,304.4" fill="#465ab0" stroke="#465ab0"/>
<polygon points="1054.3,351.3 1059.8,351.3 1051.9,351.4 1046.4,351.3" fill="#1b234f" stroke="#1b234f"/>
<polygon points="1049.7,354.7 1140.0,354.8 1050.0,354.8 956.8,354.8" fill="#444444" stroke="#444444"/>
<polygon points="1053.0,414.8 1047.4,414.4 1048.0,354.8 1053.7,354.8" fill="#212b5f" stroke="#212b5f"/>
<polygon points="1053.0,414.8 1057.6,414.4 1058.4,354.8 1053.7,354.8" fill="#465ab0" stroke="#465ab0"/>
<polygon points="1115.2,361.9 1053.6,361.5 1053.7,354.8 1115.4,354.8" fill="#212b5f" stroke="#212b5f"/>
<polygon points="1115.2,361.9 1118.6,361.8 1118.8,354.8 1115.4,354.8" fill="#465ab0" stroke="#465ab0"/>
<polygon points="985.4,362.0 981.1,362.0 981.0,354.8 985.4,354.8" fill="#212b5f" stroke="#212b5f"/>
<polygon points="985.4,362.0 1053.6,361.5 1053.7,354.8 985.4,354.8" fill="#465ab0" stroke="#465ab0"/>
<polygon points="1120.0,418.6 1113.6,418.2 1115.4,354.8 1121.9,354.8" fill="#212b5f" stroke="#212b5f"/>
<polygon points="1120.0,418.6 1124.4,418.2 1126.4,354.8 1121.9,354.8" fill="#465ab0" stroke="#465ab0"/>
<polygon points="980.3,420.4 974.5,420.0 973.9,354.8 979.8,354.7" fill="#212b5f" stroke="#212b5f"/>
<polygon points="980.3,420.4 985.8,420.0 985.4,354.8 979.8,354.7" fill="#465ab0" stroke="#465ab0"/>
<polygon points="1055.1,362.5 1050.1,362.5 1050.2,354.7 1055.2,354.7" fill="#212b5f" stroke="#212b5f"/>
<polygon points="1055.1,362.5 1121.7,361.9 1121.9,354.8 1055.2,354.7" fill="#465ab0" stroke="#465ab0"/>
<polygon points="1046.2,362.5 979.8,362.1 979.8,354.7 1046.3,354.7" fill="#212b5f" stroke="#212b5f"/>
<polygon points="1046.2,362.5 1050.4,362.5 1050.5,354.7 1046.3,354.7" fill="#465ab0" stroke="#465ab0"/>
<polygon points="1131.8,300.6 1054.8,304.4 1055.0,291.9 1132.3,287.2" fill="#212b5f" stroke="#212b5f"/>
<polygon points="1131.8,300.6 1135.9,300.9 1136.3,287.6 1132.3,287.2" fill="#465ab0" stroke="#465ab0"/>
<polygon points="1131.8,300.6 1135.9,300.9 1059.0,304.6 1054.8,304.4" fill="#1b234f" stroke="#1b234f"/>
<polygon points="983.0,299.5 977.8,299.8 977.7,286.3 982.9,285.9" fill="#212b5f" stroke="#212b5f"/>
<polygon points="983.0,299.5 1054.8,304.4 1055.0,291.9 982.9,285.9" fill="#465ab0" stroke="#465ab0"/>
<polygon points="983.0,299.5 1054.8,304.4 1049.7,304.6 977.8,299.8" fill="#1b234f" stroke="#1b234f"/>
<polygon points="1024.5,351.0 1019.8,351.0 1019.9,301.1 1024.7,300.8" fill="#212b5f" stroke="#212b5f"/>
<polygon points="1024.5,351.0 1029.6,351.0 1029.9,301.2 1024.7,300.8" fill="#465ab0" stroke="#465ab0"/>
<polygon points="1024.5,351.0 1029.6,351.0 1024.9,351.1 1019.8,351.0" fill="#1b234f" stroke="#1b234f"/>
<polygon points="1088.3,351.0 1083.9,351.0 1084.9,301.0 1089.4,300.8" fill="#212b5f" stroke="#212b5f"/>
<polygon points="1088.3,351.0 1094.0,351.1 1095.1,301.2 1089.4,300.8" fill="#465ab0" stroke="#465ab0"/>
<polygon points="1088.3,351.0 1094.0,351.1 1089.6,351.1 1083.9,351.0" fill="#1b234f" stroke="#1b234f"/>
<polygon points="1143.1,300.0 1131.8,300.6 1132.3,287.2 1143.5,286.5" fill="#212b5f" stroke="#212b5f"/>
<polygon points="1143.1,300.0 1147.5,300.4 1148.0,287.0 1143.5,286.5" fill="#465ab0" stroke="#465ab0"/>
<polygon points="1143.1,300.0 1147.5,300.4 1136.3,300.9 1131.8,300.6" fill="#1b234f" stroke="#1b234f"/>
<polygon points="1141.3,351.0 1130.2,351.0 1131.8,300.6 1143.1,300.0" fill="#212b5f" stroke="#212b5f"/>
<polygon points="1141.3,351.0 1145.7,351.0 1147.5,300.4 1143.1,300.0" fill="#465ab0" stroke="#465ab0"/>
<polygon points="1141.3,351.0 1145.7,351.0 1134.7,351.0 1130.2,351.0" fill="#1b234f" stroke="#1b234f"/>
<polygon points="1142.1,354.6 1227.8,354.7 1227.9,351.5 1142.3,351.0" fill="#d0d2d8" stroke="#d0d2d8"/>
<polygon points="1142.1,354.6 1227.8,354.7 1140.0,354.8 1049.7,354.7" fill="#444444" stroke="#444444"/>
<polygon points="1198.6,362.3 1121.7,361.9 1121.9,354.8 1199.0,354.7" fill="#212b5f" stroke="#212b5f"/>
<polygon points="1198.6,362.3 1201.9,362.3 1202.3,354.7 1199.0,354.7" fill="#465ab0" stroke="#465ab0"/>
<polygon points="1206.1,423.5 1195.6,422.9 1199.0,354.7 1209.8,354.7" fill="#212b5f" stroke="#212b5f"/>
<polygon points="1206.1,423.5 1210.3,423.0 1214.0,354.7 1209.8,354.7" fill="#465ab0" stroke="#465ab0"/>
<polygon points="1053.4,425.3 1045.6,424.8 1046.3,354.7 1054.2,354.7" fill="#212b5f" stroke="#212b5f"/>
<polygon points="1053.4,425.3 1058.8,424.8 1059.7,354.7 1054.2,354.7" fill="#465ab0" stroke="#465ab0"/>
<polygon points="1145.2,363.1 1139.3,363.1 1139.6,354.6 1145.6,354.6" fill="#212b5f" stroke="#212b5f"/>
<polygon points="1145.2,363.1 1209.3,362.4 1209.8,354.7 1145.6,354.6" fill="#465ab0" stroke="#465ab0"/>
<polygon points="1129.8,363.1 1054.1,362.6 1054.2,354.7 1130.1,354.6" fill="#212b5f" stroke="#212b5f"/>
<polygon points="1129.8,363.1 1133.8,363.1 1134.1,354.6 1130.1,354.6" fill="#465ab0" stroke="#465ab0"/>
<polygon points="1138.5,431.1 1127.7,430.4 1130.1,354.6 1141.1,354.6" fill="#212b5f" stroke="#212b5f"/>
<polygon points="1138.5,431.1 1142.8,430.6 1145.6,354.6 1141.1,354.6" fill="#465ab0" stroke="#465ab0"/>
<polygon points="974.0,298.9 965.5,299.4 965.4,285.8 973.8,285.1" fill="#212b5f" stroke="#212b5f"/>
<polygon points="974.0,298.9 983.0,299.5 982.9,285.9 973.8,285.1" fill="#465ab0" stroke="#465ab0"/>
<polygon points="974.0,298.9 983.0,299.5 974.6,300.0 965.5,299.4" fill="#1b234f" stroke="#1b234f"/>
<polygon points="974.4,350.9 966.1,350.9 965.5,299.4 974.0,298.9" fill="#212b5f" stroke="#212b5f"/>
<polygon points="974.4,350.9 983.4,350.9 983.0,299.5 974.0,298.9" fill="#465ab0" stroke="#465ab0"/>
<polygon points="974.4,350.9 983.4,350.9 975.1,351.0 966.1,350.9" fill="#1b234f" stroke="#1b234f"/>
<polygon points="977.1,354.6 1049.7,354.7 1049.7,351.3 977.1,350.9" fill="#d0d2d8" stroke="#d0d2d8"/>
<polygon points="977.1,354.6 1049.7,354.7 956.8,354.8 883.4,354.7" fill="#444444" stroke="#444444"/>
<polygon points="907.2,362.7 902.8,362.6 902.6,354.7 907.0,354.7" fill="#212b5f" stroke="#212b5f"/>
<polygon points="907.2,362.7 979.8,362.1 979.8,354.7 907.0,354.7" fill="#465ab0" stroke="#465ab0"/>
<polygon points="978.9,363.2 973.7,363.2 973.7,354.6 978.8,354.6" fill="#212b5f" stroke="#212b5f"/>
<polygon points="978.9,363.2 1049.6,362.6 1049.7,354.7 978.8,354.6" fill="#465ab0" stroke="#465ab0"/>
<polygon points="1000.7,354.6 977.1,354.6 977.1,350.9 1000.7,350.8" fill="#666666" stroke="#666666"/>
<polygon points="1000.7,354.6 1072.8,354.7 1072.8,351.2 1000.7,350.8" fill="#d0d2d8" stroke="#d0d2d8"/>
<polygon points="1000.7,354.6 1072.8,354.7 1049.7,354.7 977.1,354.6" fill="#5a5a5a" stroke="#5a5a5a"/>
<polygon points="1093.4,375.3 1102.6,375.1 1072.8,351.2 1063.5,351.2" fill="#f20000" stroke="#f20000"/>
<polygon points="1093.3,380.9 1093.4,375.3 1063.5,351.2 1063.4,356.6" fill="#7a0000" stroke="#7a0000"/>
<polygon points="1093.3,380.9 1102.4,380.5 1102.6,375.1 1093.4,375.3" fill="#fa0000" stroke="#fa0000"/>
<polygon points="826.3,354.5 949.8,354.7 883.4,354.7 761.0,354.6" fill="#444444" stroke="#444444"/>
<polygon points="853.5,354.5 826.3,354.5 826.1,350.4 853.3,350.3" fill="#444444" stroke="#444444"/>
<polygon points="853.5,354.5 977.1,354.6 949.8,354.7 826.3,354.5" fill="#444444" stroke="#444444"/>
<polygon points="962.0,995.4 953.4,989.6 952.7,949.8 961.4,955.3" fill="#212b5f" stroke="#212b5f"/>
<polygon points="962.0,995.4 968.0,991.0 967.4,951.0 961.4,955.3" fill="#465ab0" stroke="#465ab0"/>
<polygon points="961.4,955.3 967.4,951.0 958.8,945.6 952.7,949.8" fill="#4f67c2" stroke="#4f67c2"/>
<polygon points="1071.5,294.1 1065.2,294.5 1065.4,279.6 1071.7,279.1" fill="#212b5f" stroke="#212b5f"/>
<polygon points="1071.5,294.1 1143.1,300.0 1143.5,286.5 1071.7,279.1" fill="#465ab0" stroke="#465ab0"/>
<polygon points="1071.5,294.1 1143.1,300.0 1137.0,300.3 1065.2,294.5" fill="#1b234f" stroke="#1b234f"/>
<polygon points="1046.8,294.6 974.0,298.9 973.8,285.1 1046.9,279.8" fill="#212b5f" stroke="#212b5f"/>
<polygon points="1046.8,294.6 1051.8,295.0 1052.0,280.3 1046.9,279.8" fill="#465ab0" stroke="#465ab0"/>
<polygon points="1046.8,294.6 1051.8,295.0 979.1,299.3 974.0,298.9" fill="#1b234f" stroke="#1b234f"/>
<polygon points="816.0,354.5 751.0,354.6 750.7,350.8 815.8,350.4" fill="#444444" stroke="#444444"/>
<polygon points="816.0,354.5 826.3,354.5 826.1,350.4 815.8,350.4" fill="#d0d2d8" stroke="#d0d2d8"/>
<polygon points="816.0,354.5 826.3,354.5 761.0,354.6 751.0,354.6" fill="#444444" stroke="#444444"/>
<polygon points="961.4,955.3 952.7,949.8 951.6,887.6 960.5,892.6" fill="#212b5f" stroke="#212b5f"/>
<polygon points="961.4,955.3 967.4,951.0 966.6,888.7 960.5,892.6" fill="#465ab0" stroke="#465ab0"/>
<polygon points="960.5,892.6 966.6,888.7 957.8,883.8 951.6,887.6" fill="#4f67c2" stroke="#4f67c2"/>
<polygon points="949.5,900.6 882.7,861.6 882.6,858.3 949.4,897.1" fill="#666666" stroke="#666666"/>
<polygon points="949.5,900.6 1064.2,828.4 1064.2,825.3 949.4,897.1" fill="#d0d2d8" stroke="#d0d2d8"/>
<polygon points="949.4,897.1 1064.2,825.3 998.5,795.8 882.6,858.3" fill="#7d7d7d" stroke="#7d7d7d" stroke-width="1.5"/>
<polygon points="1051.7,807.0 1038.3,801.2 1038.4,793.6 1051.8,799.4" fill="#212b5f" stroke="#212b5f"/>
<polygon points="1051.7,807.0 1055.6,804.7 1055.7,797.2 1051.8,799.4" fill="#465ab0" stroke="#465ab0"/>
<polygon points="1051.8,799.4 1055.7,797.2 1042.2,791.4 1038.4,793.6" fill="#4f67c2" stroke="#4f67c2"/>
<polygon points="1057.1,809.3 1051.7,807.0 1051.8,799.4 1057.2,801.7" fill="#212b5f" stroke="#212b5f"/>
<polygon points="1057.1,809.3 1080.9,795.1 1081.0,787.6 1057.2,801.7" fill="#465ab0" stroke="#465ab0"/>
<polygon points="1057.2,801.7 1081.0,787.6 1075.7,785.5 1051.8,799.4" fill="#4f67c2" stroke="#4f67c2"/>
<polygon points="1057.2,801.7 1028.7,789.5 1028.7,786.4 1057.2,798.6" fill="#666666" stroke="#666666"/>
<polygon points="1057.2,801.7 1081.0,787.6 1081.1,784.6 1057.2,798.6" fill="#d0d2d8" stroke="#d0d2d8"/>
<polygon points="1057.2,798.6 1081.1,784.6 1052.8,773.2 1028.7,786.4" fill="#7d7d7d" stroke="#7d7d7d" stroke-width="1.5"/>
<polygon points="1057.0,828.8 1041.6,821.8 1042.3,754.8 1058.0,760.9" fill="#212b5f" stroke="#212b5f"/>
<polygon points="1057.0,828.8 1062.8,825.2 1063.9,757.7 1058.0,760.9" fill="#465ab0" stroke="#465ab0"/>
<polygon points="1058.0,760.9 1063.9,757.7 1048.2,751.7 1042.3,754.8" fill="#4f67c2" stroke="#4f67c2"/>
<polygon points="965.7,818.8 960.1,816.1 960.0,807.7 965.6,810.4" fill="#212b5f" stroke="#212b5f"/>
<polygon points="965.7,818.8 1057.9,768.5 1058.0,760.9 965.6,810.4" fill="#465ab0" stroke="#465ab0"/>
<polygon points="965.6,810.4 1058.0,760.9 1052.5,758.8 960.0,807.7" fill="#4f67c2" stroke="#4f67c2"/>
<polygon points="950.4,817.8 874.3,780.1 873.9,772.3 950.2,809.4" fill="#212b5f" stroke="#212b5f"/>
<polygon points="950.4,817.8 956.1,814.8 955.9,806.4 950.2,809.4" fill="#465ab0" stroke="#465ab0"/>
<polygon points="950.2,809.4 955.9,806.4 879.6,769.8 873.9,772.3" fill="#4f67c2" stroke="#4f67c2"/>
<polygon points="888.8,782.6 870.8,773.7 870.6,770.4 888.7,779.2" fill="#666666" stroke="#666666"/>
<polygon points="888.7,779.2 998.3,729.1 980.3,722.2 870.6,770.4" fill="#7d7d7d" stroke="#7d7d7d" stroke-width="1.5"/>
<polygon points="977.9,726.7 970.3,723.8 969.6,658.4 977.3,660.8" fill="#212b5f" stroke="#212b5f"/>
<polygon points="977.9,726.7 985.9,723.1 985.5,657.8 977.3,660.8" fill="#465ab0" stroke="#465ab0"/>
<polygon points="977.3,660.8 985.5,657.8 977.8,655.4 969.6,658.4" fill="#4f67c2" stroke="#4f67c2"/>
<polygon points="979.7,657.0 1046.7,632.8 1046.7,629.9 979.7,653.9" fill="#d0d2d8" stroke="#d0d2d8"/>
<polygon points="979.7,653.9 1046.7,629.9 960.3,606.9 892.5,626.9" fill="#7d7d7d" stroke="#7d7d7d" stroke-width="1.5"/>
<polygon points="1001.4,663.8 979.7,657.0 979.7,653.9 1001.4,660.6" fill="#666666" stroke="#666666"/>
<polygon points="1001.4,663.8 1068.0,638.6 1068.0,635.6 1001.4,660.6" fill="#d0d2d8" stroke="#d0d2d8"/>
<polygon points="1001.4,660.6 1068.0,635.6 1046.7,629.9 979.7,653.9" fill="#7d7d7d" stroke="#7d7d7d" stroke-width="1.5"/>
<polygon points="1086.9,667.1 1095.4,663.4 1068.0,635.6 1059.4,638.8" fill="#f20000" stroke="#f20000"/>
<polygon points="1086.8,671.8 1086.9,667.1 1059.4,638.8 1059.3,643.5" fill="#7a0000" stroke="#7a0000"/>
<polygon points="1086.8,671.8 1095.3,668.1 1095.4,663.4 1086.9,667.1" fill="#fa0000" stroke="#fa0000"/>
<polygon points="1080.7,715.7 1076.8,714.4 1078.0,650.5 1082.0,651.6" fill="#212b5f" stroke="#212b5f"/>
<polygon points="1080.7,715.7 1085.8,713.2 1087.3,649.5 1082.0,651.6" fill="#465ab0" stroke="#465ab0"/>
<polygon points="1082.0,651.6 1087.3,649.5 1083.3,648.4 1078.0,650.5" fill="#4f67c2" stroke="#4f67c2"/>
<polygon points="1104.3,687.1 1081.0,680.0 1081.2,672.5 1104.5,679.5" fill="#212b5f" stroke="#212b5f"/>
<polygon points="1104.3,687.1 1107.8,685.5 1108.0,677.9 1104.5,679.5" fill="#465ab0" stroke="#465ab0"/>
<polygon points="1104.5,679.5 1108.0,677.9 1084.6,671.0 1081.2,672.5" fill="#4f67c2" stroke="#4f67c2"/>
<polygon points="1023.3,648.4 1019.0,647.1 1019.1,580.7 1023.6,581.7" fill="#212b5f" stroke="#212b5f"/>
<polygon points="1023.3,648.4 1028.0,646.6 1028.4,580.3 1023.6,581.7" fill="#465ab0" stroke="#465ab0"/>
<polygon points="1023.6,581.7 1028.4,580.3 1024.0,579.4 1019.1,580.7" fill="#4f67c2" stroke="#4f67c2"/>
<polygon points="1109.7,688.7 1104.3,687.1 1104.5,679.5 1109.9,681.1" fill="#212b5f" stroke="#212b5f"/>
<polygon points="1109.7,688.7 1123.6,682.1 1123.9,674.7 1109.9,681.1" fill="#465ab0" stroke="#465ab0"/>
<polygon points="1109.9,681.1 1123.9,674.7 1118.5,673.1 1104.5,679.5" fill="#4f67c2" stroke="#4f67c2"/>
<polygon points="1109.9,681.1 1081.2,672.5 1081.2,669.5 1110.0,678.0" fill="#666666" stroke="#666666"/>
<polygon points="1109.9,681.1 1123.9,674.7 1124.0,671.6 1110.0,678.0" fill="#d0d2d8" stroke="#d0d2d8"/>
<polygon points="1110.0,678.0 1124.0,671.6 1095.4,663.4 1081.2,669.5" fill="#7d7d7d" stroke="#7d7d7d" stroke-width="1.5"/>
<polygon points="842.2,684.0 954.4,646.1 892.5,626.9 781.1,659.7" fill="#7d7d7d" stroke="#7d7d7d" stroke-width="1.5"/>
<polygon points="907.3,635.6 902.7,634.2 900.8,570.6 905.4,571.7" fill="#212b5f" stroke="#212b5f"/>
<polygon points="907.3,635.6 914.5,633.4 912.8,569.9 905.4,571.7" fill="#465ab0" stroke="#465ab0"/>
<polygon points="905.4,571.7 912.8,569.9 908.2,568.8 900.8,570.6" fill="#4f67c2" stroke="#4f67c2"/>
<polygon points="968.9,594.7 905.6,578.8 905.4,571.7 968.8,587.1" fill="#212b5f" stroke="#212b5f"/>
<polygon points="968.9,594.7 973.6,593.4 973.5,585.8 968.8,587.1" fill="#465ab0" stroke="#465ab0"/>
<polygon points="968.8,587.1 973.5,585.8 910.2,570.6 905.4,571.7" fill="#4f67c2" stroke="#4f67c2"/>
<polygon points="809.9,602.4 805.8,601.1 805.4,593.3 809.5,594.5" fill="#212b5f" stroke="#212b5f"/>
<polygon points="809.9,602.4 905.6,578.8 905.4,571.7 809.5,594.5" fill="#465ab0" stroke="#465ab0"/>
<polygon points="809.5,594.5 905.4,571.7 901.2,570.7 805.4,593.3" fill="#4f67c2" stroke="#4f67c2"/>
<polygon points="1076.6,713.2 1104.0,676.2 1082.9,670.0 1055.4,706.1" fill="#d40000" stroke="#d40000"/>
<polygon points="1076.5,718.1 1103.9,681.1 1104.0,676.2 1076.6,713.2" fill="#fa0000" stroke="#fa0000"/>
<polygon points="1076.5,718.1 1076.6,713.2 1055.4,706.1 1055.4,710.9" fill="#7a0000" stroke="#7a0000"/>
<polygon points="1082.6,715.2 1110.0,678.0 1104.0,676.2 1076.6,713.2" fill="#27326b" stroke="#27326b"/>
<polygon points="1082.4,724.4 1109.8,687.0 1110.0,678.0 1082.6,715.2" fill="#465ab0" stroke="#465ab0"/>
<polygon points="1082.4,724.4 1082.6,715.2 1076.6,713.2 1076.4,722.3" fill="#212b5f" stroke="#212b5f"/>
<polygon points="1015.8,658.7 1044.4,643.9 1029.5,649.4 1000.9,664.4" fill="#c40000" stroke="#c40000"/>
<polygon points="1029.5,649.4 1029.5,644.3 1000.8,659.4 1000.9,664.4" fill="#860000" stroke="#860000"/>
<polygon points="1029.5,649.4 1044.4,643.9 1044.5,638.8 1029.5,644.3" fill="#fa0000" stroke="#fa0000"/>
<polygon points="1042.9,689.5 977.4,668.2 977.3,660.8 1043.0,681.7" fill="#212b5f" stroke="#212b5f"/>
<polygon points="1042.9,689.5 1047.5,687.5 1047.5,679.7 1043.0,681.7" fill="#465ab0" stroke="#465ab0"/>
<polygon points="1043.0,681.7 1047.5,679.7 981.9,659.1 977.3,660.8" fill="#4f67c2" stroke="#4f67c2"/>
<polygon points="805.5,667.1 799.6,664.8 795.4,594.6 801.3,596.4" fill="#212b5f" stroke="#212b5f"/>
<polygon points="805.5,667.1 813.5,664.6 809.5,594.5 801.3,596.4" fill="#465ab0" stroke="#465ab0"/>
<polygon points="801.3,596.4 809.5,594.5 803.5,592.7 795.4,594.6" fill="#4f67c2" stroke="#4f67c2"/>
<polygon points="882.8,700.2 878.0,698.3 877.7,690.3 882.5,692.2" fill="#212b5f" stroke="#212b5f"/>
<polygon points="882.8,700.2 973.1,666.8 973.0,659.4 882.5,692.2" fill="#465ab0" stroke="#465ab0"/>
<polygon points="882.5,692.2 973.0,659.4 968.3,657.9 877.7,690.3" fill="#4f67c2" stroke="#4f67c2"/>
<polygon points="833.2,690.5 772.2,665.5 772.0,662.3 833.0,687.1" fill="#666666" stroke="#666666"/>
<polygon points="833.2,690.5 842.4,687.4 842.2,684.0 833.0,687.1" fill="#d0d2d8" stroke="#d0d2d8"/>
<polygon points="833.0,687.1 842.2,684.0 781.1,659.7 772.0,662.3" fill="#7d7d7d" stroke="#7d7d7d" stroke-width="1.5"/>
<polygon points="862.7,623.6 801.8,604.4 801.3,596.4 862.3,615.2" fill="#212b5f" stroke="#212b5f"/>
<polygon points="862.7,623.6 868.6,622.0 868.3,613.5 862.3,615.2" fill="#465ab0" stroke="#465ab0"/>
<polygon points="862.3,615.2 868.3,613.5 807.2,595.0 801.3,596.4" fill="#4f67c2" stroke="#4f67c2"/>
<polygon points="873.8,769.0 868.6,766.5 865.6,694.2 870.9,696.3" fill="#212b5f" stroke="#212b5f"/>
<polygon points="873.8,769.0 885.1,764.0 882.5,692.2 870.9,696.3" fill="#465ab0" stroke="#465ab0"/>
<polygon points="870.9,696.3 882.5,692.2 877.2,690.1 865.6,694.2" fill="#4f67c2" stroke="#4f67c2"/>
<polygon points="867.6,697.5 842.4,687.4 842.2,684.0 867.5,694.0" fill="#666666" stroke="#666666"/>
<polygon points="867.5,694.0 979.7,653.9 954.4,646.1 842.2,684.0" fill="#7d7d7d" stroke="#7d7d7d" stroke-width="1.5"/>
<polygon points="873.5,354.5 853.5,354.5 853.3,350.3 873.3,350.1" fill="#444444" stroke="#444444"/>
<polygon points="873.5,354.5 997.1,354.6 977.1,354.6 853.5,354.5" fill="#444444" stroke="#444444"/>
<polygon points="960.4,889.1 951.6,884.1 950.2,809.4 959.3,813.8" fill="#212b5f" stroke="#212b5f"/>
<polygon points="960.4,889.1 966.6,885.3 965.6,810.4 959.3,813.8" fill="#465ab0" stroke="#465ab0"/>
<polygon points="959.3,813.8 965.6,810.4 956.5,806.1 950.2,809.4" fill="#4f67c2" stroke="#4f67c2"/>
<polygon points="948.0,820.8 879.8,786.8 879.7,783.3 947.9,817.1" fill="#666666" stroke="#666666"/>
<polygon points="948.0,820.8 1065.3,757.8 1065.4,754.6 947.9,817.1" fill="#d0d2d8" stroke="#d0d2d8"/>
<polygon points="947.9,817.1 1065.4,754.6 998.3,729.1 879.7,783.3" fill="#7d7d7d" stroke="#7d7d7d" stroke-width="1.5"/>
<polygon points="1052.6,736.5 1038.9,731.4 1039.0,723.6 1052.7,728.5" fill="#212b5f" stroke="#212b5f"/>
<polygon points="1052.6,736.5 1056.5,734.5 1056.6,726.6 1052.7,728.5" fill="#465ab0" stroke="#465ab0"/>
<polygon points="1052.7,728.5 1056.6,726.6 1042.9,721.7 1039.0,723.6" fill="#4f67c2" stroke="#4f67c2"/>
<polygon points="1058.1,738.5 1052.6,736.5 1052.7,728.5 1058.2,730.5" fill="#212b5f" stroke="#212b5f"/>
<polygon points="1058.1,738.5 1082.4,726.2 1082.5,718.4 1058.2,730.5" fill="#465ab0" stroke="#465ab0"/>
<polygon points="1058.2,730.5 1082.5,718.4 1077.1,716.6 1052.7,728.5" fill="#4f67c2" stroke="#4f67c2"/>
<polygon points="1058.2,730.5 1029.1,720.0 1029.1,716.8 1058.2,727.2" fill="#666666" stroke="#666666"/>
<polygon points="1058.2,730.5 1082.5,718.4 1082.6,715.2 1058.2,727.2" fill="#d0d2d8" stroke="#d0d2d8"/>
<polygon points="1058.2,727.2 1082.6,715.2 1053.7,705.5 1029.1,716.8" fill="#7d7d7d" stroke="#7d7d7d" stroke-width="1.5"/>
<polygon points="1058.1,757.6 1042.3,751.6 1043.0,681.7 1059.1,686.8" fill="#212b5f" stroke="#212b5f"/>
<polygon points="1058.1,757.6 1064.0,754.5 1065.1,684.1 1059.1,686.8" fill="#465ab0" stroke="#465ab0"/>
<polygon points="1059.1,686.8 1065.1,684.1 1049.1,679.1 1043.0,681.7" fill="#4f67c2" stroke="#4f67c2"/>
<polygon points="964.6,737.1 958.9,734.8 958.7,726.0 964.5,728.3" fill="#212b5f" stroke="#212b5f"/>
<polygon points="964.6,737.1 1059.0,694.7 1059.1,686.8 964.5,728.3" fill="#465ab0" stroke="#465ab0"/>
<polygon points="964.5,728.3 1059.1,686.8 1053.5,685.0 958.7,726.0" fill="#4f67c2" stroke="#4f67c2"/>
<polygon points="948.9,736.2 871.2,704.5 870.9,696.3 948.8,727.4" fill="#212b5f" stroke="#212b5f"/>
<polygon points="948.9,736.2 954.8,733.7 954.6,724.9 948.8,727.4" fill="#465ab0" stroke="#465ab0"/>
<polygon points="948.8,727.4 954.6,724.9 876.7,694.2 870.9,696.3" fill="#4f67c2" stroke="#4f67c2"/>
<polygon points="886.0,704.9 867.6,697.5 867.5,694.0 885.9,701.3" fill="#666666" stroke="#666666"/>
<polygon points="885.9,701.3 998.0,659.6 979.7,653.9 867.5,694.0" fill="#7d7d7d" stroke="#7d7d7d" stroke-width="1.5"/>
<polygon points="977.3,657.6 969.6,655.2 968.8,587.1 976.6,589.0" fill="#212b5f" stroke="#212b5f"/>
<polygon points="977.3,657.6 985.5,654.7 985.0,586.7 976.6,589.0" fill="#465ab0" stroke="#465ab0"/>
<polygon points="976.6,589.0 985.0,586.7 977.2,584.8 968.8,587.1" fill="#4f67c2" stroke="#4f67c2"/>
<polygon points="979.1,586.1 1047.4,567.2 1047.5,564.2 979.1,582.8" fill="#d0d2d8" stroke="#d0d2d8"/>
<polygon points="979.1,582.8 1047.5,564.2 959.5,546.4 890.3,561.8" fill="#7d7d7d" stroke="#7d7d7d" stroke-width="1.5"/>
<polygon points="1001.2,591.4 979.1,586.1 979.1,582.8 1001.2,588.0" fill="#666666" stroke="#666666"/>
<polygon points="1001.2,591.4 1069.1,571.7 1069.2,568.6 1001.2,588.0" fill="#d0d2d8" stroke="#d0d2d8"/>
<polygon points="1001.2,588.0 1069.2,568.6 1047.5,564.2 979.1,582.8" fill="#7d7d7d" stroke="#7d7d7d" stroke-width="1.5"/>
<polygon points="1088.4,598.5 1097.1,595.6 1069.2,568.6 1060.3,571.1" fill="#f20000" stroke="#f20000"/>
<polygon points="1088.3,603.4 1088.4,598.5 1060.3,571.1 1060.3,575.9" fill="#7a0000" stroke="#7a0000"/>
<polygon points="1088.3,603.4 1097.0,600.4 1097.1,595.6 1088.4,598.5" fill="#fa0000" stroke="#fa0000"/>
<polygon points="1082.1,648.5 1078.1,647.4 1079.4,581.0 1083.5,581.8" fill="#212b5f" stroke="#212b5f"/>
<polygon points="1082.1,648.5 1087.3,646.4 1088.8,580.2 1083.5,581.8" fill="#465ab0" stroke="#465ab0"/>
<polygon points="1083.5,581.8 1088.8,580.2 1084.7,579.3 1079.4,581.0" fill="#4f67c2" stroke="#4f67c2"/>
<polygon points="1106.3,617.0 1082.4,611.3 1082.6,603.6 1106.5,609.1" fill="#212b5f" stroke="#212b5f"/>
<polygon points="1106.3,617.0 1109.8,615.7 1110.0,607.9 1106.5,609.1" fill="#465ab0" stroke="#465ab0"/>
<polygon points="1106.5,609.1 1110.0,607.9 1086.1,602.4 1082.6,603.6" fill="#4f67c2" stroke="#4f67c2"/>
<polygon points="1023.6,578.5 1019.2,577.5 1019.4,508.4 1023.9,509.1" fill="#212b5f" stroke="#212b5f"/>
<polygon points="1023.6,578.5 1028.4,577.2 1028.8,508.2 1023.9,509.1" fill="#465ab0" stroke="#465ab0"/>
<polygon points="1023.9,509.1 1028.8,508.2 1024.3,507.5 1019.4,508.4" fill="#4f67c2" stroke="#4f67c2"/>
<polygon points="1111.8,618.3 1106.3,617.0 1106.5,609.1 1112.0,610.4" fill="#212b5f" stroke="#212b5f"/>
<polygon points="1111.8,618.3 1125.9,613.0 1126.2,605.3 1112.0,610.4" fill="#465ab0" stroke="#465ab0"/>
<polygon points="1112.0,610.4 1126.2,605.3 1120.7,604.0 1106.5,609.1" fill="#4f67c2" stroke="#4f67c2"/>
<polygon points="1112.0,610.4 1082.6,603.6 1082.7,600.4 1112.1,607.2" fill="#666666" stroke="#666666"/>
<polygon points="1112.0,610.4 1126.2,605.3 1126.3,602.1 1112.1,607.2" fill="#d0d2d8" stroke="#d0d2d8"/>
<polygon points="1112.1,607.2 1126.3,602.1 1097.1,595.6 1082.7,600.4" fill="#7d7d7d" stroke="#7d7d7d" stroke-width="1.5"/>
<polygon points="838.5,606.2 953.3,576.7 890.3,561.8 776.3,587.3" fill="#7d7d7d" stroke="#7d7d7d" stroke-width="1.5"/>
<polygon points="905.3,568.6 900.7,567.5 898.7,501.4 903.4,502.2" fill="#212b5f" stroke="#212b5f"/>
<polygon points="905.3,568.6 912.7,566.9 910.9,501.0 903.4,502.2" fill="#465ab0" stroke="#465ab0"/>
<polygon points="903.4,502.2 910.9,501.0 906.2,500.2 898.7,501.4" fill="#4f67c2" stroke="#4f67c2"/>
<polygon points="968.0,520.8 903.6,509.6 903.4,502.2 967.9,512.9" fill="#212b5f" stroke="#212b5f"/>
<polygon points="968.0,520.8 972.9,519.9 972.8,512.0 967.9,512.9" fill="#465ab0" stroke="#465ab0"/>
<polygon points="967.9,512.9 972.8,512.0 908.3,501.4 903.4,502.2" fill="#4f67c2" stroke="#4f67c2"/>
<polygon points="805.6,526.2 801.4,525.3 801.0,517.1 805.2,518.0" fill="#212b5f" stroke="#212b5f"/>
<polygon points="805.6,526.2 903.6,509.6 903.4,502.2 805.2,518.0" fill="#465ab0" stroke="#465ab0"/>
<polygon points="805.2,518.0 903.4,502.2 899.1,501.5 801.0,517.1" fill="#4f67c2" stroke="#4f67c2"/>
<polygon points="1078.0,641.3 1106.0,605.8 1084.4,600.8 1056.4,635.5" fill="#d40000" stroke="#d40000"/>
<polygon points="1077.9,646.5 1105.8,610.8 1106.0,605.8 1078.0,641.3" fill="#fa0000" stroke="#fa0000"/>
<polygon points="1077.9,646.5 1078.0,641.3 1056.4,635.5 1056.3,640.5" fill="#7a0000" stroke="#7a0000"/>
<polygon points="1084.2,643.0 1112.1,607.2 1106.0,605.8 1078.0,641.3" fill="#27326b" stroke="#27326b"/>
<polygon points="1083.9,652.6 1111.8,616.5 1112.1,607.2 1084.2,643.0" fill="#465ab0" stroke="#465ab0"/>
<polygon points="1083.9,652.6 1084.2,643.0 1078.0,641.3 1077.8,650.8" fill="#212b5f" stroke="#212b5f"/>
<polygon points="1016.0,587.4 1045.2,569.7 1029.9,574.0 1000.7,591.9" fill="#c40000" stroke="#c40000"/>
<polygon points="1029.9,574.0 1029.9,568.6 1000.7,586.7 1000.7,591.9" fill="#860000" stroke="#860000"/>
<polygon points="1029.9,574.0 1045.2,569.7 1045.2,564.4 1029.9,568.6" fill="#fa0000" stroke="#fa0000"/>
<polygon points="1043.7,613.5 976.7,596.7 976.6,589.0 1043.7,605.3" fill="#212b5f" stroke="#212b5f"/>
<polygon points="1043.7,613.5 1048.3,611.9 1048.4,603.8 1043.7,605.3" fill="#465ab0" stroke="#465ab0"/>
<polygon points="1043.7,605.3 1048.4,603.8 981.4,587.7 976.6,589.0" fill="#4f67c2" stroke="#4f67c2"/>
<polygon points="801.1,593.1 795.2,591.3 790.8,518.1 796.8,519.3" fill="#212b5f" stroke="#212b5f"/>
<polygon points="801.1,593.1 809.3,591.1 805.2,518.0 796.8,519.3" fill="#465ab0" stroke="#465ab0"/>
<polygon points="796.8,519.3 805.2,518.0 799.1,516.8 790.8,518.1" fill="#4f67c2" stroke="#4f67c2"/>
<polygon points="879.9,622.0 875.0,620.5 874.7,612.1 879.6,613.5" fill="#212b5f" stroke="#212b5f"/>
<polygon points="879.9,622.0 972.4,595.6 972.3,587.9 879.6,613.5" fill="#465ab0" stroke="#465ab0"/>
<polygon points="879.6,613.5 972.3,587.9 967.5,586.8 874.7,612.1" fill="#4f67c2" stroke="#4f67c2"/>
<polygon points="829.2,612.3 767.2,592.7 767.0,589.4 829.0,608.7" fill="#666666" stroke="#666666"/>
<polygon points="829.2,612.3 838.6,609.8 838.5,606.2 829.0,608.7" fill="#d0d2d8" stroke="#d0d2d8"/>
<polygon points="829.0,608.7 838.5,606.2 776.3,587.3 767.0,589.4" fill="#7d7d7d" stroke="#7d7d7d" stroke-width="1.5"/>
<polygon points="1054.5,586.0 1040.2,582.8 1040.3,574.3 1054.7,577.3" fill="#212b5f" stroke="#212b5f"/>
<polygon points="1054.5,586.0 1058.6,584.8 1058.7,576.1 1054.7,577.3" fill="#465ab0" stroke="#465ab0"/>
<polygon points="1054.7,577.3 1058.7,576.1 1044.4,573.1 1040.3,574.3" fill="#4f67c2" stroke="#4f67c2"/>
<polygon points="859.2,541.3 797.3,527.6 796.8,519.3 858.8,532.4" fill="#212b5f" stroke="#212b5f"/>
<polygon points="859.2,541.3 865.3,540.1 865.0,531.2 858.8,532.4" fill="#465ab0" stroke="#465ab0"/>
<polygon points="858.8,532.4 865.0,531.2 802.8,518.4 796.8,519.3" fill="#4f67c2" stroke="#4f67c2"/>
<polygon points="870.7,692.8 865.5,690.8 862.3,615.2 867.7,616.8" fill="#212b5f" stroke="#212b5f"/>
<polygon points="870.7,692.8 882.3,688.7 879.6,613.5 867.7,616.8" fill="#465ab0" stroke="#465ab0"/>
<polygon points="867.7,616.8 879.6,613.5 874.2,611.9 862.3,615.2" fill="#4f67c2" stroke="#4f67c2"/>
<polygon points="864.3,617.7 838.6,609.8 838.5,606.2 864.2,614.1" fill="#666666" stroke="#666666"/>
<polygon points="864.2,614.1 979.1,582.8 953.3,576.7 838.5,606.2" fill="#7d7d7d" stroke="#7d7d7d" stroke-width="1.5"/>
<polygon points="947.4,650.5 868.0,625.3 867.7,616.8 947.3,641.2" fill="#212b5f" stroke="#212b5f"/>
<polygon points="947.4,650.5 953.4,648.5 953.2,639.3 947.3,641.2" fill="#465ab0" stroke="#465ab0"/>
<polygon points="947.3,641.2 953.2,639.3 873.7,615.2 867.7,616.8" fill="#4f67c2" stroke="#4f67c2"/>
<polygon points="883.1,623.6 864.3,617.7 864.2,614.1 883.0,619.8" fill="#666666" stroke="#666666"/>
<polygon points="883.0,619.8 997.8,587.2 979.1,582.8 864.2,614.1" fill="#7d7d7d" stroke="#7d7d7d" stroke-width="1.5"/>
<polygon points="976.6,585.7 968.8,583.8 967.9,512.9 975.9,514.2" fill="#212b5f" stroke="#212b5f"/>
<polygon points="976.6,585.7 985.0,583.4 984.5,512.6 975.9,514.2" fill="#465ab0" stroke="#465ab0"/>
<polygon points="975.9,514.2 984.5,512.6 976.5,511.3 967.9,512.9" fill="#4f67c2" stroke="#4f67c2"/>
<polygon points="978.5,512.1 1048.1,499.1 1048.2,496.0 978.5,508.7" fill="#d0d2d8" stroke="#d0d2d8"/>
<polygon points="978.5,508.7 1048.2,496.0 958.6,483.8 888.0,494.3" fill="#7d7d7d" stroke="#7d7d7d" stroke-width="1.5"/>
<polygon points="1001.0,515.8 978.5,512.1 978.5,508.7 1001.0,512.3" fill="#666666" stroke="#666666"/>
<polygon points="1001.0,515.8 1070.3,502.2 1070.3,499.0 1001.0,512.3" fill="#d0d2d8" stroke="#d0d2d8"/>
<polygon points="1001.0,512.3 1070.3,499.0 1048.2,496.0 978.5,508.7" fill="#7d7d7d" stroke="#7d7d7d" stroke-width="1.5"/>
<polygon points="1090.0,527.1 1098.8,525.0 1070.3,499.0 1061.4,500.7" fill="#f20000" stroke="#f20000"/>
<polygon points="1089.9,532.2 1090.0,527.1 1061.4,500.7 1061.3,505.7" fill="#7a0000" stroke="#7a0000"/>
<polygon points="1089.9,532.2 1098.7,530.0 1098.8,525.0 1090.0,527.1" fill="#fa0000" stroke="#fa0000"/>
<polygon points="1083.6,578.6 1079.5,577.8 1080.8,508.6 1085.0,509.2" fill="#212b5f" stroke="#212b5f"/>
<polygon points="1083.6,578.6 1088.9,577.0 1090.4,508.1 1085.0,509.2" fill="#465ab0" stroke="#465ab0"/>
<polygon points="1085.0,509.2 1090.4,508.1 1086.3,507.5 1080.8,508.6" fill="#4f67c2" stroke="#4f67c2"/>
<polygon points="1108.3,544.0 1083.9,539.8 1084.1,531.8 1108.5,535.8" fill="#212b5f" stroke="#212b5f"/>
<polygon points="1108.3,544.0 1111.8,543.1 1112.1,534.9 1108.5,535.8" fill="#465ab0" stroke="#465ab0"/>
<polygon points="1108.5,535.8 1112.1,534.9 1087.7,530.9 1084.1,531.8" fill="#4f67c2" stroke="#4f67c2"/>
<polygon points="1023.9,505.8 1019.4,505.1 1019.6,433.1 1024.2,433.5" fill="#212b5f" stroke="#212b5f"/>
<polygon points="1023.9,505.8 1028.8,504.9 1029.2,433.0 1024.2,433.5" fill="#465ab0" stroke="#465ab0"/>
<polygon points="1024.2,433.5 1029.2,433.0 1024.6,432.7 1019.6,433.1" fill="#4f67c2" stroke="#4f67c2"/>
<polygon points="1113.9,545.0 1108.3,544.0 1108.5,535.8 1114.1,536.7" fill="#212b5f" stroke="#212b5f"/>
<polygon points="1113.9,545.0 1128.3,541.1 1128.6,533.0 1114.1,536.7" fill="#465ab0" stroke="#465ab0"/>
<polygon points="1114.1,536.7 1128.6,533.0 1123.0,532.1 1108.5,535.8" fill="#4f67c2" stroke="#4f67c2"/>
<polygon points="1114.1,536.7 1084.1,531.8 1084.2,528.5 1114.2,533.4" fill="#666666" stroke="#666666"/>
<polygon points="1114.1,536.7 1128.6,533.0 1128.7,529.7 1114.2,533.4" fill="#d0d2d8" stroke="#d0d2d8"/>
<polygon points="1114.2,533.4 1128.7,529.7 1098.8,525.0 1084.2,528.5" fill="#7d7d7d" stroke="#7d7d7d" stroke-width="1.5"/>
<polygon points="834.5,524.9 952.2,504.6 888.0,494.3 771.4,511.8" fill="#7d7d7d" stroke="#7d7d7d" stroke-width="1.5"/>
<polygon points="903.3,499.0 898.6,498.2 896.5,429.5 901.3,429.9" fill="#212b5f" stroke="#212b5f"/>
<polygon points="903.3,499.0 910.9,497.8 909.0,429.3 901.3,429.9" fill="#465ab0" stroke="#465ab0"/>
<polygon points="901.3,429.9 909.0,429.3 904.2,428.9 896.5,429.5" fill="#4f67c2" stroke="#4f67c2"/>
<polygon points="967.2,443.7 901.5,437.6 901.3,429.9 967.1,435.4" fill="#212b5f" stroke="#212b5f"/>
<polygon points="967.2,443.7 972.1,443.2 972.0,435.0 967.1,435.4" fill="#465ab0" stroke="#465ab0"/>
<polygon points="967.1,435.4 972.0,435.0 906.3,429.5 901.3,429.9" fill="#4f67c2" stroke="#4f67c2"/>
<polygon points="801.1,446.7 796.9,446.2 796.4,437.7 800.7,438.1" fill="#212b5f" stroke="#212b5f"/>
<polygon points="801.1,446.7 901.5,437.6 901.3,429.9 800.7,438.1" fill="#465ab0" stroke="#465ab0"/>
<polygon points="800.7,438.1 901.3,429.9 897.0,429.5 796.4,437.7" fill="#4f67c2" stroke="#4f67c2"/>
<polygon points="1079.5,566.4 1108.0,532.3 1086.0,528.8 1057.4,562.0" fill="#d40000" stroke="#d40000"/>
<polygon points="1079.4,571.7 1107.8,537.6 1108.0,532.3 1079.5,566.4" fill="#fa0000" stroke="#fa0000"/>
<polygon points="1079.4,571.7 1079.5,566.4 1057.4,562.0 1057.3,567.2" fill="#7a0000" stroke="#7a0000"/>
<polygon points="1085.8,567.6 1114.2,533.4 1108.0,532.3 1079.5,566.4" fill="#27326b" stroke="#27326b"/>
<polygon points="1085.6,577.6 1114.0,543.1 1114.2,533.4 1085.8,567.6" fill="#465ab0" stroke="#465ab0"/>
<polygon points="1085.6,577.6 1085.8,567.6 1079.5,566.4 1079.3,576.3" fill="#212b5f" stroke="#212b5f"/>
<polygon points="1016.1,513.2 1045.9,492.4 1030.4,495.2 1000.5,516.3" fill="#c40000" stroke="#c40000"/>
<polygon points="1030.4,495.2 1030.4,489.5 1000.5,510.9 1000.5,516.3" fill="#860000" stroke="#860000"/>
<polygon points="1030.4,495.2 1045.9,492.4 1046.0,486.8 1030.4,489.5" fill="#fa0000" stroke="#fa0000"/>
<polygon points="1044.4,534.1 976.0,522.2 975.9,514.2 1044.5,525.5" fill="#212b5f" stroke="#212b5f"/>
<polygon points="1044.4,534.1 1049.2,533.0 1049.3,524.5 1044.5,525.5" fill="#465ab0" stroke="#465ab0"/>
<polygon points="1044.5,525.5 1049.3,524.5 980.8,513.3 975.9,514.2" fill="#4f67c2" stroke="#4f67c2"/>
<polygon points="796.6,515.8 790.5,514.6 785.9,438.1 792.0,438.8" fill="#212b5f" stroke="#212b5f"/>
<polygon points="796.6,515.8 805.0,514.5 800.7,438.1 792.0,438.8" fill="#465ab0" stroke="#465ab0"/>
<polygon points="792.0,438.8 800.7,438.1 794.5,437.5 785.9,438.1" fill="#4f67c2" stroke="#4f67c2"/>
<polygon points="876.8,540.1 871.9,539.0 871.6,530.2 876.5,531.2" fill="#212b5f" stroke="#212b5f"/>
<polygon points="876.8,540.1 971.6,521.4 971.5,513.4 876.5,531.2" fill="#465ab0" stroke="#465ab0"/>
<polygon points="876.5,531.2 971.5,513.4 966.6,512.6 871.6,530.2" fill="#4f67c2" stroke="#4f67c2"/>
<polygon points="825.0,530.4 762.1,516.7 761.8,513.3 824.8,526.6" fill="#666666" stroke="#666666"/>
<polygon points="825.0,530.4 834.7,528.6 834.5,524.9 824.8,526.6" fill="#d0d2d8" stroke="#d0d2d8"/>
<polygon points="824.8,526.6 834.5,524.9 771.4,511.8 761.8,513.3" fill="#7d7d7d" stroke="#7d7d7d" stroke-width="1.5"/>
<polygon points="1055.6,505.6 1040.9,503.5 1041.0,494.6 1055.7,496.6" fill="#212b5f" stroke="#212b5f"/>
<polygon points="1055.6,505.6 1059.7,504.8 1059.9,495.8 1055.7,496.6" fill="#465ab0" stroke="#465ab0"/>
<polygon points="1055.7,496.6 1059.9,495.8 1045.2,493.8 1041.0,494.6" fill="#4f67c2" stroke="#4f67c2"/>
<polygon points="855.6,454.9 792.6,447.4 792.0,438.8 855.2,445.6" fill="#212b5f" stroke="#212b5f"/>
<polygon points="855.6,454.9 861.9,454.3 861.5,445.0 855.2,445.6" fill="#465ab0" stroke="#465ab0"/>
<polygon points="855.2,445.6 861.5,445.0 798.3,438.3 792.0,438.8" fill="#4f67c2" stroke="#4f67c2"/>
<polygon points="867.5,613.2 862.2,611.5 858.8,532.4 864.3,533.5" fill="#212b5f" stroke="#212b5f"/>
<polygon points="867.5,613.2 879.4,609.9 876.5,531.2 864.3,533.5" fill="#465ab0" stroke="#465ab0"/>
<polygon points="864.3,533.5 876.5,531.2 871.0,530.1 858.8,532.4" fill="#4f67c2" stroke="#4f67c2"/>
<polygon points="860.9,534.2 834.7,528.6 834.5,524.9 860.7,530.3" fill="#666666" stroke="#666666"/>
<polygon points="860.7,530.3 978.5,508.7 952.2,504.6 834.5,524.9" fill="#7d7d7d" stroke="#7d7d7d" stroke-width="1.5"/>
<polygon points="1064.8,293.6 1046.8,294.6 1046.9,279.8 1065.0,278.5" fill="#212b5f" stroke="#212b5f"/>
<polygon points="1064.8,293.6 1071.5,294.1 1071.7,279.1 1065.0,278.5" fill="#465ab0" stroke="#465ab0"/>
<polygon points="1064.8,293.6 1071.5,294.1 1053.5,295.2 1046.8,294.6" fill="#1b234f" stroke="#1b234f"/>
<polygon points="1064.0,350.4 1046.2,350.5 1046.8,294.6 1064.8,293.6" fill="#212b5f" stroke="#212b5f"/>
<polygon points="1064.0,350.4 1070.5,350.5 1071.5,294.1 1064.8,293.6" fill="#465ab0" stroke="#465ab0"/>
<polygon points="1064.0,350.4 1070.5,350.5 1052.8,350.6 1046.2,350.5" fill="#1b234f" stroke="#1b234f"/>
<polygon points="959.2,810.2 950.2,805.8 948.8,727.4 958.0,731.1" fill="#212b5f" stroke="#212b5f"/>
<polygon points="959.2,810.2 965.5,806.8 964.5,728.3 958.0,731.1" fill="#465ab0" stroke="#465ab0"/>
<polygon points="958.0,731.1 964.5,728.3 955.3,724.6 948.8,727.4" fill="#4f67c2" stroke="#4f67c2"/>
<polygon points="946.5,737.0 876.8,708.4 876.6,704.8 946.4,733.1" fill="#666666" stroke="#666666"/>
<polygon points="946.5,737.0 1066.6,684.2 1066.6,680.8 946.4,733.1" fill="#d0d2d8" stroke="#d0d2d8"/>
<polygon points="946.4,733.1 1066.6,680.8 998.0,659.6 876.6,704.8" fill="#7d7d7d" stroke="#7d7d7d" stroke-width="1.5"/>
<polygon points="1053.6,662.9 1039.5,658.7 1039.6,650.5 1053.7,654.6" fill="#212b5f" stroke="#212b5f"/>
<polygon points="1053.6,662.9 1057.6,661.2 1057.7,653.0 1053.7,654.6" fill="#465ab0" stroke="#465ab0"/>
<polygon points="1053.7,654.6 1057.7,653.0 1043.7,649.0 1039.6,650.5" fill="#4f67c2" stroke="#4f67c2"/>
<polygon points="1059.1,664.5 1053.6,662.9 1053.7,654.6 1059.3,656.2" fill="#212b5f" stroke="#212b5f"/>
<polygon points="1059.1,664.5 1083.9,654.4 1084.1,646.3 1059.3,656.2" fill="#465ab0" stroke="#465ab0"/>
<polygon points="1059.3,656.2 1084.1,646.3 1078.5,644.8 1053.7,654.6" fill="#4f67c2" stroke="#4f67c2"/>
<polygon points="1059.3,656.2 1029.5,647.6 1029.5,644.3 1059.3,652.8" fill="#666666" stroke="#666666"/>
<polygon points="1059.3,656.2 1084.1,646.3 1084.2,643.0 1059.3,652.8" fill="#d0d2d8" stroke="#d0d2d8"/>
<polygon points="1059.3,652.8 1084.2,643.0 1054.6,635.0 1029.5,644.3" fill="#7d7d7d" stroke="#7d7d7d" stroke-width="1.5"/>
<polygon points="1059.2,683.4 1043.0,678.3 1043.7,605.3 1060.2,609.3" fill="#212b5f" stroke="#212b5f"/>
<polygon points="1059.2,683.4 1065.2,680.8 1066.4,607.3 1060.2,609.3" fill="#465ab0" stroke="#465ab0"/>
<polygon points="1060.2,609.3 1066.4,607.3 1049.9,603.3 1043.7,605.3" fill="#4f67c2" stroke="#4f67c2"/>
<polygon points="963.5,651.2 957.6,649.4 957.5,640.1 963.4,641.9" fill="#212b5f" stroke="#212b5f"/>
<polygon points="963.5,651.2 1060.1,617.6 1060.2,609.3 963.4,641.9" fill="#465ab0" stroke="#465ab0"/>
<polygon points="963.4,641.9 1060.2,609.3 1054.5,607.9 957.5,640.1" fill="#4f67c2" stroke="#4f67c2"/>
<polygon points="945.8,560.3 864.7,542.5 864.3,533.5 945.7,550.6" fill="#212b5f" stroke="#212b5f"/>
<polygon points="945.8,560.3 952.0,558.9 951.8,549.2 945.7,550.6" fill="#465ab0" stroke="#465ab0"/>
<polygon points="945.7,550.6 951.8,549.2 870.5,532.4 864.3,533.5" fill="#4f67c2" stroke="#4f67c2"/>
<polygon points="880.1,538.2 860.9,534.2 860.7,530.3 879.9,534.3" fill="#666666" stroke="#666666"/>
<polygon points="879.9,534.3 997.6,511.8 978.5,508.7 860.7,530.3" fill="#7d7d7d" stroke="#7d7d7d" stroke-width="1.5"/>
<polygon points="975.9,510.7 967.9,509.4 967.1,435.4 975.2,436.1" fill="#212b5f" stroke="#212b5f"/>
<polygon points="975.9,510.7 984.5,509.1 984.0,435.3 975.2,436.1" fill="#465ab0" stroke="#465ab0"/>
<polygon points="975.2,436.1 984.0,435.3 975.8,434.6 967.1,435.4" fill="#4f67c2" stroke="#4f67c2"/>
<polygon points="977.8,435.1 1048.9,428.3 1048.9,425.0 977.8,431.5" fill="#d0d2d8" stroke="#d0d2d8"/>
<polygon points="977.8,431.5 1048.9,425.0 957.7,418.9 885.7,424.2" fill="#7d7d7d" stroke="#7d7d7d" stroke-width="1.5"/>
<polygon points="1000.9,437.0 977.8,435.1 977.8,431.5 1000.8,433.3" fill="#666666" stroke="#666666"/>
<polygon points="1000.9,437.0 1071.5,429.9 1071.5,426.6 1000.8,433.3" fill="#d0d2d8" stroke="#d0d2d8"/>
<polygon points="1000.8,433.3 1071.5,426.6 1048.9,425.0 977.8,431.5" fill="#7d7d7d" stroke="#7d7d7d" stroke-width="1.5"/>
<polygon points="1091.7,452.8 1100.7,451.6 1071.5,426.6 1062.4,427.4" fill="#f20000" stroke="#f20000"/>
<polygon points="1091.6,458.1 1091.7,452.8 1062.4,427.4 1062.3,432.7" fill="#7a0000" stroke="#7a0000"/>
<polygon points="1091.6,458.1 1100.5,456.8 1100.7,451.6 1091.7,452.8" fill="#fa0000" stroke="#fa0000"/>
<polygon points="1085.1,505.9 1080.9,505.3 1082.3,433.2 1086.6,433.5" fill="#212b5f" stroke="#212b5f"/>
<polygon points="1085.1,505.9 1090.5,504.8 1092.1,433.0 1086.6,433.5" fill="#465ab0" stroke="#465ab0"/>
<polygon points="1086.6,433.5 1092.1,433.0 1087.9,432.6 1082.3,433.2" fill="#4f67c2" stroke="#4f67c2"/>
<polygon points="1110.4,468.0 1085.5,465.4 1085.7,457.0 1110.6,459.4" fill="#212b5f" stroke="#212b5f"/>
<polygon points="1110.4,468.0 1114.0,467.4 1114.2,458.9 1110.6,459.4" fill="#465ab0" stroke="#465ab0"/>
<polygon points="1110.6,459.4 1114.2,458.9 1089.3,456.5 1085.7,457.0" fill="#4f67c2" stroke="#4f67c2"/>
<polygon points="1024.2,430.0 1019.6,429.7 1019.8,354.6 1024.5,354.6" fill="#212b5f" stroke="#212b5f"/>
<polygon points="1024.2,430.0 1029.2,429.5 1029.6,354.7 1024.5,354.6" fill="#465ab0" stroke="#465ab0"/>
<polygon points="1086.7,430.1 1082.4,429.8 1083.9,354.6 1088.3,354.6" fill="#212b5f" stroke="#212b5f"/>
<polygon points="1086.7,430.1 1092.2,429.5 1093.9,354.7 1088.3,354.6" fill="#465ab0" stroke="#465ab0"/>
<polygon points="1116.1,468.5 1110.4,468.0 1110.6,459.4 1116.4,459.9" fill="#212b5f" stroke="#212b5f"/>
<polygon points="1116.1,468.5 1130.8,466.2 1131.1,457.7 1116.4,459.9" fill="#465ab0" stroke="#465ab0"/>
<polygon points="1116.4,459.9 1131.1,457.7 1125.3,457.2 1110.6,459.4" fill="#4f67c2" stroke="#4f67c2"/>
<polygon points="1116.4,459.9 1085.7,457.0 1085.7,453.6 1116.5,456.4" fill="#666666" stroke="#666666"/>
<polygon points="1116.4,459.9 1131.1,457.7 1131.2,454.3 1116.5,456.4" fill="#d0d2d8" stroke="#d0d2d8"/>
<polygon points="1116.5,456.4 1131.2,454.3 1100.7,451.6 1085.7,453.6" fill="#7d7d7d" stroke="#7d7d7d" stroke-width="1.5"/>
<polygon points="830.4,439.7 951.0,429.4 885.7,424.2 766.2,433.1" fill="#7d7d7d" stroke="#7d7d7d" stroke-width="1.5"/>
<polygon points="901.2,426.6 896.4,426.2 894.2,354.7 899.1,354.7" fill="#212b5f" stroke="#212b5f"/>
<polygon points="901.2,426.6 908.9,426.0 907.0,354.7 899.1,354.7" fill="#465ab0" stroke="#465ab0"/>
<polygon points="966.2,363.3 899.3,362.7 899.1,354.7 966.1,354.6" fill="#212b5f" stroke="#212b5f"/>
<polygon points="966.2,363.3 971.3,363.2 971.2,354.6 966.1,354.6" fill="#465ab0" stroke="#465ab0"/>
<polygon points="796.5,363.5 792.1,363.5 791.6,354.6 795.9,354.6" fill="#212b5f" stroke="#212b5f"/>
<polygon points="796.5,363.5 899.3,362.7 899.1,354.7 795.9,354.6" fill="#465ab0" stroke="#465ab0"/>
<polygon points="1081.0,488.1 1110.1,455.8 1087.6,453.7 1058.4,485.3" fill="#d40000" stroke="#d40000"/>
<polygon points="1080.9,493.7 1109.9,461.3 1110.1,455.8 1081.0,488.1" fill="#fa0000" stroke="#fa0000"/>
<polygon points="1080.9,493.7 1081.0,488.1 1058.4,485.3 1058.3,490.7" fill="#7a0000" stroke="#7a0000"/>
<polygon points="1112.6,388.6 1087.1,387.8 1087.3,379.1 1112.8,379.6" fill="#212b5f" stroke="#212b5f"/>
<polygon points="1112.6,388.6 1116.3,388.4 1116.5,379.5 1112.8,379.6" fill="#465ab0" stroke="#465ab0"/>
<polygon points="1112.8,379.6 1116.5,379.5 1091.0,379.0 1087.3,379.1" fill="#4f67c2" stroke="#4f67c2"/>
<polygon points="1118.5,388.8 1112.6,388.6 1112.8,379.6 1118.7,379.8" fill="#212b5f" stroke="#212b5f"/>
<polygon points="1118.5,388.8 1133.4,388.0 1133.7,379.3 1118.7,379.8" fill="#465ab0" stroke="#465ab0"/>
<polygon points="1118.7,379.8 1133.7,379.3 1127.8,379.1 1112.8,379.6" fill="#4f67c2" stroke="#4f67c2"/>
<polygon points="1118.7,379.8 1087.3,379.1 1087.3,375.5 1118.8,376.1" fill="#666666" stroke="#666666"/>
<polygon points="1118.7,379.8 1133.7,379.3 1133.8,375.6 1118.8,376.1" fill="#d0d2d8" stroke="#d0d2d8"/>
<polygon points="1118.8,376.1 1133.8,375.6 1102.6,375.1 1087.3,375.5" fill="#7d7d7d" stroke="#7d7d7d" stroke-width="1.5"/>
<polygon points="1087.5,488.9 1116.5,456.4 1110.1,455.8 1081.0,488.1" fill="#27326b" stroke="#27326b"/>
<polygon points="1087.2,499.3 1116.2,466.6 1116.5,456.4 1087.5,488.9" fill="#465ab0" stroke="#465ab0"/>
<polygon points="1087.2,499.3 1087.5,488.9 1081.0,488.1 1080.8,498.5" fill="#212b5f" stroke="#212b5f"/>
<polygon points="1082.6,406.3 1112.3,376.0 1089.2,375.5 1059.5,405.2" fill="#d40000" stroke="#d40000"/>
<polygon points="1082.5,412.2 1112.1,381.7 1112.3,376.0 1082.6,406.3" fill="#fa0000" stroke="#fa0000"/>
<polygon points="1082.5,412.2 1082.6,406.3 1059.5,405.2 1059.4,410.9" fill="#7a0000" stroke="#7a0000"/>
<polygon points="1016.2,435.8 1046.8,411.6 1030.8,412.8 1000.3,437.4" fill="#c40000" stroke="#c40000"/>
<polygon points="1030.8,412.8 1030.9,406.9 1000.3,431.8 1000.3,437.4" fill="#860000" stroke="#860000"/>
<polygon points="1030.8,412.8 1046.8,411.6 1046.8,405.8 1030.9,406.9" fill="#fa0000" stroke="#fa0000"/>
<polygon points="1089.2,406.6 1118.8,376.1 1112.3,376.0 1082.6,406.3" fill="#27326b" stroke="#27326b"/>
<polygon points="1089.0,417.5 1118.5,386.7 1118.8,376.1 1089.2,406.6" fill="#465ab0" stroke="#465ab0"/>
<polygon points="1089.0,417.5 1089.2,406.6 1082.6,406.3 1082.4,417.1" fill="#212b5f" stroke="#212b5f"/>
<polygon points="1045.2,451.0 975.3,444.5 975.2,436.1 1045.3,442.0" fill="#212b5f" stroke="#212b5f"/>
<polygon points="1045.2,451.0 1050.1,450.4 1050.2,441.5 1045.3,442.0" fill="#465ab0" stroke="#465ab0"/>
<polygon points="1045.3,442.0 1050.2,441.5 980.2,435.6 975.2,436.1" fill="#4f67c2" stroke="#4f67c2"/>
<polygon points="1061.4,506.5 1055.6,505.6 1055.7,496.6 1061.6,497.4" fill="#212b5f" stroke="#212b5f"/>
<polygon points="1061.4,506.5 1087.2,501.3 1087.4,492.5 1061.6,497.4" fill="#465ab0" stroke="#465ab0"/>
<polygon points="1061.6,497.4 1087.4,492.5 1081.6,491.8 1055.7,496.6" fill="#4f67c2" stroke="#4f67c2"/>
<polygon points="1061.6,497.4 1030.4,493.1 1030.4,489.5 1061.6,493.6" fill="#666666" stroke="#666666"/>
<polygon points="1061.6,497.4 1087.4,492.5 1087.5,488.9 1061.6,493.6" fill="#d0d2d8" stroke="#d0d2d8"/>
<polygon points="1061.6,493.6 1087.5,488.9 1056.6,485.0 1030.4,489.5" fill="#7d7d7d" stroke="#7d7d7d" stroke-width="1.5"/>
<polygon points="791.8,435.1 785.7,434.5 780.9,354.6 787.1,354.6" fill="#212b5f" stroke="#212b5f"/>
<polygon points="791.8,435.1 800.5,434.4 795.9,354.6 787.1,354.6" fill="#465ab0" stroke="#465ab0"/>
<polygon points="873.7,454.3 868.7,453.7 868.3,444.5 873.3,445.0" fill="#212b5f" stroke="#212b5f"/>
<polygon points="873.7,454.3 970.8,444.1 970.7,435.7 873.3,445.0" fill="#465ab0" stroke="#465ab0"/>
<polygon points="873.3,445.0 970.7,435.7 965.7,435.3 868.3,444.5" fill="#4f67c2" stroke="#4f67c2"/>
<polygon points="820.6,444.5 756.6,437.5 756.4,433.8 820.4,440.6" fill="#666666" stroke="#666666"/>
<polygon points="820.6,444.5 830.6,443.6 830.4,439.7 820.4,440.6" fill="#d0d2d8" stroke="#d0d2d8"/>
<polygon points="820.4,440.6 830.4,439.7 766.2,433.1 756.4,433.8" fill="#7d7d7d" stroke="#7d7d7d" stroke-width="1.5"/>
<polygon points="1056.6,421.6 1041.6,420.6 1041.7,411.3 1056.8,412.1" fill="#212b5f" stroke="#212b5f"/>
<polygon points="1056.6,421.6 1060.9,421.2 1061.0,411.8 1056.8,412.1" fill="#465ab0" stroke="#465ab0"/>
<polygon points="1056.8,412.1 1061.0,411.8 1046.0,410.9 1041.7,411.3" fill="#4f67c2" stroke="#4f67c2"/>
<polygon points="1062.6,421.9 1056.6,421.6 1056.8,412.1 1062.8,412.4" fill="#212b5f" stroke="#212b5f"/>
<polygon points="1062.6,421.9 1088.9,419.6 1089.1,410.4 1062.8,412.4" fill="#465ab0" stroke="#465ab0"/>
<polygon points="1062.8,412.4 1089.1,410.4 1083.2,410.1 1056.8,412.1" fill="#4f67c2" stroke="#4f67c2"/>
<polygon points="1062.8,412.4 1030.9,410.7 1030.9,406.9 1062.8,408.5" fill="#666666" stroke="#666666"/>
<polygon points="1062.8,412.4 1089.1,410.4 1089.2,406.6 1062.8,408.5" fill="#d0d2d8" stroke="#d0d2d8"/>
<polygon points="1062.8,408.5 1089.2,406.6 1057.6,405.1 1030.9,406.9" fill="#7d7d7d" stroke="#7d7d7d" stroke-width="1.5"/>
<polygon points="851.8,364.3 787.6,363.6 787.1,354.6 851.4,354.5" fill="#212b5f" stroke="#212b5f"/>
<polygon points="851.8,364.3 858.3,364.2 857.9,354.5 851.4,354.5" fill="#465ab0" stroke="#465ab0"/>
<polygon points="864.2,529.7 858.7,528.6 855.2,445.6 860.8,446.2" fill="#212b5f" stroke="#212b5f"/>
<polygon points="864.2,529.7 876.4,527.4 873.3,445.0 860.8,446.2" fill="#465ab0" stroke="#465ab0"/>
<polygon points="860.8,446.2 873.3,445.0 867.7,444.4 855.2,445.6" fill="#4f67c2" stroke="#4f67c2"/>
<polygon points="857.3,446.5 830.6,443.6 830.4,439.7 857.1,442.5" fill="#666666" stroke="#666666"/>
<polygon points="857.1,442.5 977.8,431.5 951.0,429.4 830.4,439.7" fill="#7d7d7d" stroke="#7d7d7d" stroke-width="1.5"/>
<polygon points="939.4,354.4 863.1,354.5 862.9,350.1 939.3,349.6" fill="#444444" stroke="#444444"/>
<polygon points="939.4,354.4 1072.1,354.6 1072.1,350.5 939.3,349.6" fill="#d0d2d8" stroke="#d0d2d8"/>
<polygon points="939.4,354.4 1072.1,354.6 997.1,354.6 863.1,354.5" fill="#444444" stroke="#444444"/>
<polygon points="1070.3,364.0 1064.2,364.0 1064.3,354.6 1070.5,354.6" fill="#212b5f" stroke="#212b5f"/>
<polygon points="1070.3,364.0 1140.8,363.2 1141.1,354.6 1070.5,354.6" fill="#465ab0" stroke="#465ab0"/>
<polygon points="958.0,727.3 948.7,723.6 947.3,641.2 956.7,644.2" fill="#212b5f" stroke="#212b5f"/>
<polygon points="958.0,727.3 964.5,724.5 963.4,641.9 956.7,644.2" fill="#465ab0" stroke="#465ab0"/>
<polygon points="956.7,644.2 963.4,641.9 953.9,639.1 947.3,641.2" fill="#4f67c2" stroke="#4f67c2"/>
<polygon points="944.8,648.8 873.6,626.3 873.4,622.5 944.8,644.7" fill="#666666" stroke="#666666"/>
<polygon points="944.8,648.8 1067.9,607.3 1067.9,603.8 944.8,644.7" fill="#d0d2d8" stroke="#d0d2d8"/>
<polygon points="944.8,644.7 1067.9,603.8 997.8,587.2 873.4,622.5" fill="#7d7d7d" stroke="#7d7d7d" stroke-width="1.5"/>
<polygon points="1060.3,587.3 1054.5,586.0 1054.7,577.3 1060.4,578.6" fill="#212b5f" stroke="#212b5f"/>
<polygon points="1060.3,587.3 1085.5,579.5 1085.7,571.1 1060.4,578.6" fill="#465ab0" stroke="#465ab0"/>
<polygon points="1060.4,578.6 1085.7,571.1 1080.0,569.9 1054.7,577.3" fill="#4f67c2" stroke="#4f67c2"/>
<polygon points="1060.4,578.6 1029.9,572.0 1029.9,568.6 1060.4,575.0" fill="#666666" stroke="#666666"/>
<polygon points="1060.4,578.6 1085.7,571.1 1085.8,567.6 1060.4,575.0" fill="#d0d2d8" stroke="#d0d2d8"/>
<polygon points="1060.4,575.0 1085.8,567.6 1055.6,561.6 1029.9,568.6" fill="#7d7d7d" stroke="#7d7d7d" stroke-width="1.5"/>
<polygon points="1060.3,605.8 1043.8,601.8 1044.5,525.5 1061.4,528.3" fill="#212b5f" stroke="#212b5f"/>
<polygon points="1060.3,605.8 1066.4,603.7 1067.7,526.9 1061.4,528.3" fill="#465ab0" stroke="#465ab0"/>
<polygon points="1061.4,528.3 1067.7,526.9 1050.8,524.1 1044.5,525.5" fill="#4f67c2" stroke="#4f67c2"/>
<polygon points="962.3,560.8 956.3,559.5 956.1,549.8 962.2,551.1" fill="#212b5f" stroke="#212b5f"/>
<polygon points="962.3,560.8 1061.3,537.0 1061.4,528.3 962.2,551.1" fill="#465ab0" stroke="#465ab0"/>
<polygon points="962.2,551.1 1061.4,528.3 1055.5,527.3 956.1,549.8" fill="#4f67c2" stroke="#4f67c2"/>
<polygon points="944.1,465.4 861.2,455.6 860.8,446.2 944.0,455.1" fill="#212b5f" stroke="#212b5f"/>
<polygon points="944.1,465.4 950.4,464.6 950.3,454.4 944.0,455.1" fill="#465ab0" stroke="#465ab0"/>
<polygon points="944.0,455.1 950.3,454.4 867.1,445.6 860.8,446.2" fill="#4f67c2" stroke="#4f67c2"/>
<polygon points="876.8,448.7 857.3,446.5 857.1,442.5 876.7,444.5" fill="#666666" stroke="#666666"/>
<polygon points="876.7,444.5 997.3,433.1 977.8,431.5 857.1,442.5" fill="#7d7d7d" stroke="#7d7d7d" stroke-width="1.5"/>
<polygon points="975.2,432.5 967.0,431.9 966.1,354.6 974.5,354.6" fill="#212b5f" stroke="#212b5f"/>
<polygon points="975.2,432.5 983.9,431.7 983.4,354.6 974.5,354.6" fill="#465ab0" stroke="#465ab0"/>
<polygon points="1046.1,363.9 974.6,363.3 974.5,354.6 1046.2,354.6" fill="#212b5f" stroke="#212b5f"/>
<polygon points="1046.1,363.9 1051.1,363.9 1051.2,354.6 1046.2,354.6" fill="#465ab0" stroke="#465ab0"/>
<polygon points="870.4,364.2 865.2,364.2 864.9,354.5 870.0,354.5" fill="#212b5f" stroke="#212b5f"/>
<polygon points="870.4,364.2 969.9,363.3 969.9,354.6 870.0,354.5" fill="#465ab0" stroke="#465ab0"/>
<polygon points="860.6,442.2 855.1,441.6 851.4,354.5 857.1,354.5" fill="#212b5f" stroke="#212b5f"/>
<polygon points="860.6,442.2 873.2,441.0 870.0,354.5 857.1,354.5" fill="#465ab0" stroke="#465ab0"/>
<polygon points="956.7,640.1 947.2,637.3 945.7,550.6 955.4,552.6" fill="#212b5f" stroke="#212b5f"/>
<polygon points="956.7,640.1 963.3,637.9 962.2,551.1 955.4,552.6" fill="#465ab0" stroke="#465ab0"/>
<polygon points="955.4,552.6 962.2,551.1 952.5,549.1 945.7,550.6" fill="#4f67c2" stroke="#4f67c2"/>
<polygon points="943.1,555.9 870.3,540.1 870.1,536.2 943.0,551.6" fill="#666666" stroke="#666666"/>
<polygon points="943.1,555.9 1069.2,526.9 1069.3,523.2 943.0,551.6" fill="#d0d2d8" stroke="#d0d2d8"/>
<polygon points="943.0,551.6 1069.3,523.2 997.6,511.8 870.1,536.2" fill="#7d7d7d" stroke="#7d7d7d" stroke-width="1.5"/>
<polygon points="1061.5,524.6 1044.6,521.8 1045.3,442.0 1062.6,443.5" fill="#212b5f" stroke="#212b5f"/>
<polygon points="1061.5,524.6 1067.7,523.2 1069.0,442.7 1062.6,443.5" fill="#465ab0" stroke="#465ab0"/>
<polygon points="1062.6,443.5 1069.0,442.7 1051.8,441.3 1045.3,442.0" fill="#4f67c2" stroke="#4f67c2"/>
<polygon points="961.1,465.7 954.9,464.9 954.7,454.7 960.9,455.4" fill="#212b5f" stroke="#212b5f"/>
<polygon points="961.1,465.7 1062.5,452.6 1062.6,443.5 960.9,455.4" fill="#465ab0" stroke="#465ab0"/>
<polygon points="960.9,455.4 1062.6,443.5 1056.6,443.0 954.7,454.7" fill="#4f67c2" stroke="#4f67c2"/>
<polygon points="942.4,365.3 857.5,364.4 857.1,354.5 942.2,354.4" fill="#212b5f" stroke="#212b5f"/>
<polygon points="942.4,365.3 948.8,365.2 948.7,354.4 942.2,354.4" fill="#465ab0" stroke="#465ab0"/>
<polygon points="955.3,548.4 945.6,546.4 944.0,455.1 953.9,456.2" fill="#212b5f" stroke="#212b5f"/>
<polygon points="955.3,548.4 962.1,546.9 960.9,455.4 953.9,456.2" fill="#465ab0" stroke="#465ab0"/>
<polygon points="953.9,456.2 960.9,455.4 951.0,454.3 944.0,455.1" fill="#4f67c2" stroke="#4f67c2"/>
<polygon points="941.3,457.9 866.8,449.7 866.6,445.5 941.2,453.4" fill="#666666" stroke="#666666"/>
<polygon points="941.3,457.9 1070.6,442.7 1070.7,438.9 941.2,453.4" fill="#d0d2d8" stroke="#d0d2d8"/>
<polygon points="941.2,453.4 1070.7,438.9 997.3,433.1 866.6,445.5" fill="#7d7d7d" stroke="#7d7d7d" stroke-width="1.5"/>
<polygon points="1062.7,439.6 1045.4,438.2 1046.2,354.6 1063.9,354.5" fill="#212b5f" stroke="#212b5f"/>
<polygon points="1062.7,439.6 1069.1,438.8 1070.5,354.6 1063.9,354.5" fill="#465ab0" stroke="#465ab0"/>
<polygon points="959.7,365.3 953.4,365.2 953.2,354.4 959.6,354.4" fill="#212b5f" stroke="#212b5f"/>
<polygon points="959.7,365.3 1063.8,364.1 1063.9,354.5 959.6,354.4" fill="#465ab0" stroke="#465ab0"/>
<polygon points="953.8,451.7 943.9,450.7 942.2,354.4 952.4,354.4" fill="#212b5f" stroke="#212b5f"/>
<polygon points="953.8,451.7 960.9,451.0 959.6,354.4 952.4,354.4" fill="#465ab0" stroke="#465ab0"/></g></svg></div>
<div id="status" class="abs"><span class="t">Processing Walls</span><div class="combo" style="left:1688px;width:87px">One Story<svg class="abs" style="right:3px;top:7px" width="10" height="8"><path d="M1 1.500l4 4l4 -4" stroke="#333" fill="none" stroke-width="1.2"/></svg></div><div class="combo" style="left:1776px;width:87px">Global<svg class="abs" style="right:3px;top:7px" width="10" height="8"><path d="M1 1.500l4 4l4 -4" stroke="#333" fill="none" stroke-width="1.2"/></svg></div><div class="combo" style="left:1866px;width:49px;text-align:center;padding:0;background:#e1e1e1;border-color:#adadad">Units...</div></div></body></html>
